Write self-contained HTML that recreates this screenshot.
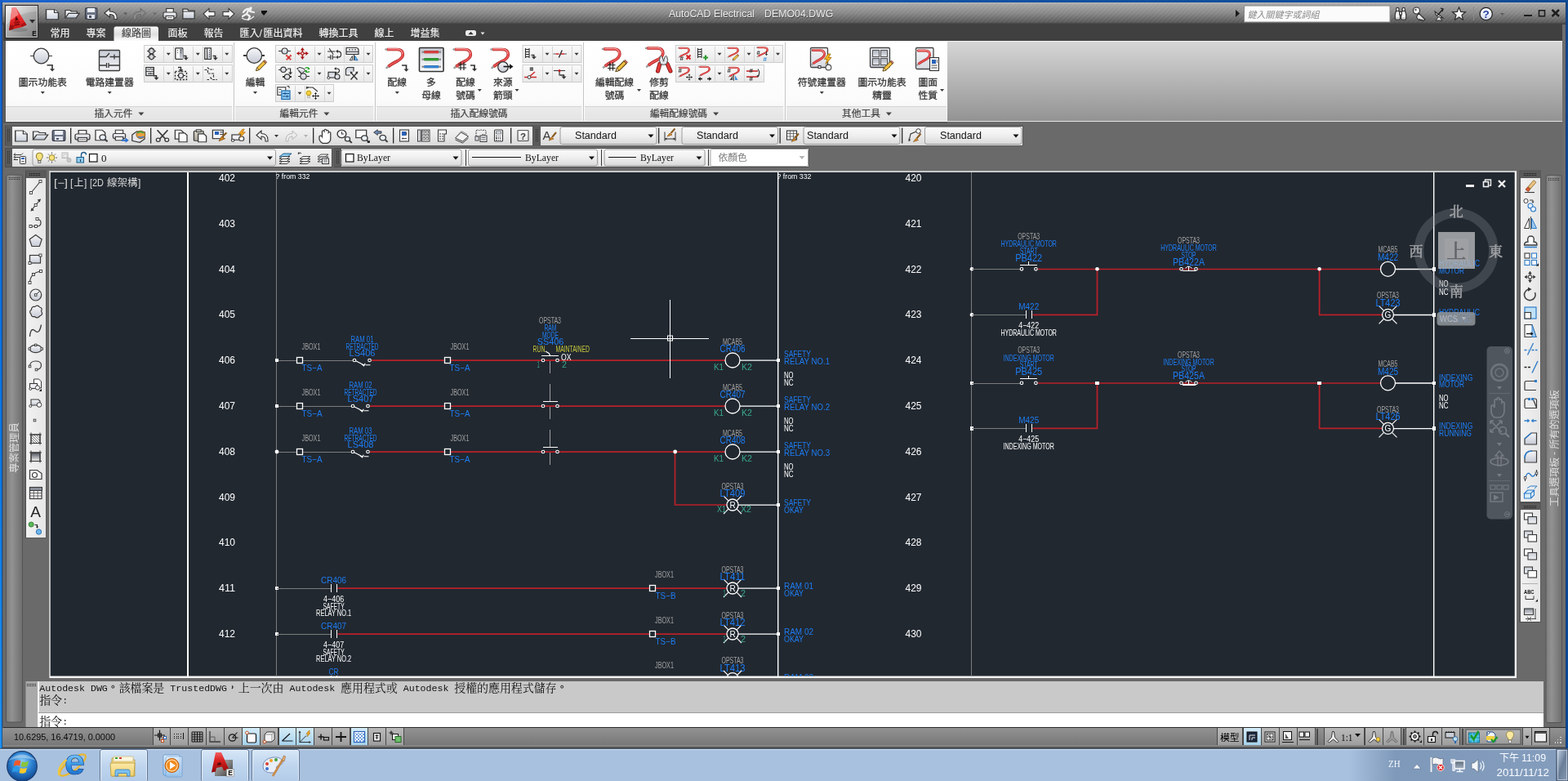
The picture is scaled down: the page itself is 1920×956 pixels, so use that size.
<!DOCTYPE html><html><head><meta charset="utf-8"><title>AutoCAD Electrical DEMO04.DWG</title>
<style>html,body{margin:0;padding:0;background:#6a6a6a;overflow:hidden}svg{display:block}text{font-family:"Liberation Sans","Noto Sans CJK TC",sans-serif;white-space:pre}</style></head><body>
<svg width="1920" height="956" viewBox="0 0 1920 956" style="will-change:transform">
<defs><linearGradient id="g1" x1="0" y1="0" x2="1" y2="0"><stop offset="0" stop-color="#1a62cc"/><stop offset="0.25" stop-color="#1563c6"/><stop offset="0.6" stop-color="#1252a4"/><stop offset="1" stop-color="#0f4a93"/></linearGradient><linearGradient id="g2" x1="0" y1="0" x2="0" y2="1"><stop offset="0" stop-color="#1a5cc4"/><stop offset="0.2" stop-color="#0e6ad8"/><stop offset="0.6" stop-color="#0a78e6"/><stop offset="1" stop-color="#1c90f0"/></linearGradient><linearGradient id="g3" x1="0" y1="0" x2="0" y2="1"><stop offset="0" stop-color="#0f4a93"/><stop offset="1" stop-color="#0a4a9c"/></linearGradient><linearGradient id="g4" x1="0" y1="0" x2="0" y2="1"><stop offset="0" stop-color="#b8b8b8"/><stop offset="0.1" stop-color="#a4a4a4"/><stop offset="0.5" stop-color="#868686"/><stop offset="0.88" stop-color="#5c5c5c"/><stop offset="0.95" stop-color="#4a4a4a"/><stop offset="1" stop-color="#3a3a3a"/></linearGradient><pattern id="hatch" width="4" height="4" patternUnits="userSpaceOnUse" patternTransform="rotate(-45)"><rect width="4" height="1.2" fill="#fff" opacity="0.075"/></pattern><linearGradient id="g5" x1="0" y1="0" x2="0.9" y2="1"><stop offset="0" stop-color="#fafafa"/><stop offset="0.4" stop-color="#c8c8c8"/><stop offset="1" stop-color="#858585"/></linearGradient><linearGradient id="g6" x1="0" y1="0" x2="0" y2="1"><stop offset="0" stop-color="#f05858"/><stop offset="0.45" stop-color="#ea2a2a"/><stop offset="1" stop-color="#c41414"/></linearGradient><linearGradient id="g7" x1="0" y1="0" x2="0" y2="1"><stop offset="0" stop-color="#ffffff"/><stop offset="1" stop-color="#c9cfdb"/></linearGradient><linearGradient id="g8" x1="0" y1="0" x2="0" y2="1"><stop offset="0" stop-color="#f4f6fa"/><stop offset="1" stop-color="#b7bfce"/></linearGradient><linearGradient id="g9" x1="0" y1="0" x2="0" y2="1"><stop offset="0" stop-color="#7d8596"/><stop offset="1" stop-color="#5a6172"/></linearGradient><linearGradient id="g10" x1="0" y1="0" x2="0" y2="1"><stop offset="0" stop-color="#fafafa"/><stop offset="1" stop-color="#b8bcc6"/></linearGradient><linearGradient id="g11" x1="0" y1="0" x2="0" y2="1"><stop offset="0" stop-color="#ffffff"/><stop offset="1" stop-color="#c3c9d6"/></linearGradient><linearGradient id="g12" x1="0" y1="0" x2="0" y2="1"><stop offset="0" stop-color="#ffffff"/><stop offset="1" stop-color="#d6ddf0"/></linearGradient><linearGradient id="g13" x1="0" y1="0" x2="0" y2="1"><stop offset="0" stop-color="#ffffff"/><stop offset="0.15" stop-color="#f0f0f0"/><stop offset="0.55" stop-color="#dedede"/><stop offset="1" stop-color="#fcfcfc"/></linearGradient><linearGradient id="g14" x1="0" y1="0" x2="0" y2="1"><stop offset="0" stop-color="#ffffff"/><stop offset="0.75" stop-color="#fbfbfb"/><stop offset="1" stop-color="#f0f0f0"/></linearGradient><linearGradient id="g15" x1="0" y1="0" x2="0" y2="1"><stop offset="0" stop-color="#d7d7d7"/><stop offset="0.5" stop-color="#b5b5b5"/><stop offset="1" stop-color="#939393"/></linearGradient><linearGradient id="g16" x1="0" y1="0" x2="0" y2="1"><stop offset="0" stop-color="#ebebeb"/><stop offset="1" stop-color="#e4e4e4"/></linearGradient><linearGradient id="g17" x1="0" y1="0" x2="0" y2="1"><stop offset="0" stop-color="#ebebeb"/><stop offset="1" stop-color="#e4e4e4"/></linearGradient><linearGradient id="g18" x1="0" y1="0" x2="0" y2="1"><stop offset="0" stop-color="#ebebeb"/><stop offset="1" stop-color="#e4e4e4"/></linearGradient><linearGradient id="g19" x1="0" y1="0" x2="0" y2="1"><stop offset="0" stop-color="#ebebeb"/><stop offset="1" stop-color="#e4e4e4"/></linearGradient><linearGradient id="g20" x1="0" y1="0" x2="0" y2="1"><stop offset="0" stop-color="#ebebeb"/><stop offset="1" stop-color="#e4e4e4"/></linearGradient><linearGradient id="g21" x1="0" y1="0" x2="0" y2="1"><stop offset="0" stop-color="#f6f7fa"/><stop offset="1" stop-color="#c6cad4"/></linearGradient><linearGradient id="g22" x1="0" y1="0" x2="0" y2="1"><stop offset="0" stop-color="#c9cdd6"/><stop offset="1" stop-color="#f2f3f6"/></linearGradient><linearGradient id="g23" x1="0" y1="0" x2="0" y2="1"><stop offset="0" stop-color="#fafafa"/><stop offset="0.5" stop-color="#f2f2f2"/><stop offset="1" stop-color="#e7e7e7"/></linearGradient><linearGradient id="g24" x1="0" y1="0" x2="0" y2="1"><stop offset="0" stop-color="#fafafa"/><stop offset="0.5" stop-color="#f2f2f2"/><stop offset="1" stop-color="#e7e7e7"/></linearGradient><linearGradient id="g25" x1="0" y1="0" x2="0" y2="1"><stop offset="0" stop-color="#8a8f99"/><stop offset="1" stop-color="#c9ccd3"/></linearGradient><linearGradient id="g26" x1="0" y1="0" x2="0" y2="1"><stop offset="0" stop-color="#eef0f4"/><stop offset="1" stop-color="#b8bcc6"/></linearGradient><linearGradient id="g27" x1="0" y1="0" x2="0" y2="1"><stop offset="0" stop-color="#fafafa"/><stop offset="0.5" stop-color="#f2f2f2"/><stop offset="1" stop-color="#e7e7e7"/></linearGradient><linearGradient id="g28" x1="0" y1="0" x2="0" y2="1"><stop offset="0" stop-color="#fafafa"/><stop offset="0.5" stop-color="#f2f2f2"/><stop offset="1" stop-color="#e7e7e7"/></linearGradient><linearGradient id="g29" x1="0" y1="0" x2="0" y2="1"><stop offset="0" stop-color="#fafafa"/><stop offset="0.5" stop-color="#f2f2f2"/><stop offset="1" stop-color="#e7e7e7"/></linearGradient><linearGradient id="g30" x1="0" y1="0" x2="0" y2="1"><stop offset="0" stop-color="#fdfdfd"/><stop offset="1" stop-color="#d4d7de"/></linearGradient><linearGradient id="g31" x1="0" y1="0" x2="0" y2="1"><stop offset="0" stop-color="#c4c8d0"/><stop offset="0.5" stop-color="#e6e8ec"/><stop offset="1" stop-color="#fafafa"/></linearGradient><linearGradient id="g32" x1="0" y1="0" x2="0" y2="1"><stop offset="0" stop-color="#fafafa"/><stop offset="0.5" stop-color="#f2f2f2"/><stop offset="1" stop-color="#e7e7e7"/></linearGradient><linearGradient id="g33" x1="0" y1="0" x2="0" y2="1"><stop offset="0" stop-color="#fafafa"/><stop offset="0.5" stop-color="#f2f2f2"/><stop offset="1" stop-color="#e7e7e7"/></linearGradient><linearGradient id="g34" x1="0" y1="0" x2="0" y2="1"><stop offset="0" stop-color="#fafafa"/><stop offset="0.5" stop-color="#f2f2f2"/><stop offset="1" stop-color="#e7e7e7"/></linearGradient><linearGradient id="g35" x1="0" y1="0" x2="0" y2="1"><stop offset="0" stop-color="#fafafa"/><stop offset="0.5" stop-color="#f2f2f2"/><stop offset="1" stop-color="#e7e7e7"/></linearGradient><linearGradient id="g36" x1="0" y1="0" x2="0" y2="1"><stop offset="0" stop-color="#f4f5f8"/><stop offset="1" stop-color="#d7dae1"/></linearGradient><linearGradient id="g37" x1="0" y1="0" x2="0" y2="1"><stop offset="0" stop-color="#eceef2"/><stop offset="1" stop-color="#c6cad3"/></linearGradient><linearGradient id="g38" x1="0" y1="0" x2="0" y2="1"><stop offset="0" stop-color="#aeb3be"/><stop offset="1" stop-color="#e3e5ea"/></linearGradient><linearGradient id="g39" x1="0" y1="0" x2="0" y2="1"><stop offset="0" stop-color="#aeb3be"/><stop offset="1" stop-color="#e3e5ea"/></linearGradient><linearGradient id="g40" x1="0" y1="0" x2="0" y2="1"><stop offset="0" stop-color="#aeb3be"/><stop offset="1" stop-color="#e3e5ea"/></linearGradient><linearGradient id="g41" x1="0" y1="0" x2="0" y2="1"><stop offset="0" stop-color="#aeb3be"/><stop offset="1" stop-color="#e3e5ea"/></linearGradient><linearGradient id="g42" x1="0" y1="0" x2="0" y2="1"><stop offset="0" stop-color="#f4f5f8"/><stop offset="1" stop-color="#d7dae1"/></linearGradient><linearGradient id="g43" x1="0" y1="0" x2="0" y2="1"><stop offset="0" stop-color="#f4f4f4"/><stop offset="0.5" stop-color="#eaeaea"/><stop offset="1" stop-color="#dadada"/></linearGradient><linearGradient id="g44" x1="0" y1="0" x2="0" y2="1"><stop offset="0" stop-color="#ffffff"/><stop offset="1" stop-color="#c9cfdb"/></linearGradient><linearGradient id="g45" x1="0" y1="0" x2="0" y2="1"><stop offset="0" stop-color="#f4f6fa"/><stop offset="1" stop-color="#b7bfce"/></linearGradient><linearGradient id="g46" x1="0" y1="0" x2="0" y2="1"><stop offset="0" stop-color="#7d8596"/><stop offset="1" stop-color="#5a6172"/></linearGradient><linearGradient id="g47" x1="0" y1="0" x2="0" y2="1"><stop offset="0" stop-color="#fafafa"/><stop offset="1" stop-color="#b8bcc6"/></linearGradient><linearGradient id="g48" x1="0" y1="0" x2="0" y2="1"><stop offset="0" stop-color="#fafafa"/><stop offset="1" stop-color="#b8bcc6"/></linearGradient><linearGradient id="g49" x1="0" y1="0" x2="0" y2="1"><stop offset="0" stop-color="#d8d4c8"/><stop offset="1" stop-color="#a8a498"/></linearGradient><linearGradient id="g50" x1="0" y1="0" x2="0" y2="1"><stop offset="0" stop-color="#ffffff"/><stop offset="1" stop-color="#e4e4e4"/></linearGradient><linearGradient id="g51" x1="0" y1="0" x2="0" y2="1"><stop offset="0" stop-color="#fbfbfb"/><stop offset="0.5" stop-color="#efefef"/><stop offset="1" stop-color="#d9d9d9"/></linearGradient><linearGradient id="g52" x1="0" y1="0" x2="0" y2="1"><stop offset="0" stop-color="#fbfbfb"/><stop offset="0.5" stop-color="#efefef"/><stop offset="1" stop-color="#d9d9d9"/></linearGradient><linearGradient id="g53" x1="0" y1="0" x2="0" y2="1"><stop offset="0" stop-color="#fbfbfb"/><stop offset="0.5" stop-color="#efefef"/><stop offset="1" stop-color="#d9d9d9"/></linearGradient><linearGradient id="g54" x1="0" y1="0" x2="0" y2="1"><stop offset="0" stop-color="#fbfbfb"/><stop offset="0.5" stop-color="#efefef"/><stop offset="1" stop-color="#d9d9d9"/></linearGradient><linearGradient id="g55" x1="0" y1="0" x2="0" y2="1"><stop offset="0" stop-color="#fbfbfb"/><stop offset="0.5" stop-color="#efefef"/><stop offset="1" stop-color="#d9d9d9"/></linearGradient><linearGradient id="g56" x1="0" y1="0" x2="0" y2="1"><stop offset="0" stop-color="#fbfbfb"/><stop offset="0.5" stop-color="#efefef"/><stop offset="1" stop-color="#d9d9d9"/></linearGradient><linearGradient id="g57" x1="0" y1="0" x2="0" y2="1"><stop offset="0" stop-color="#fbfbfb"/><stop offset="0.5" stop-color="#efefef"/><stop offset="1" stop-color="#d9d9d9"/></linearGradient><linearGradient id="g58" x1="0" y1="0" x2="0" y2="1"><stop offset="0" stop-color="#fbfbfb"/><stop offset="0.5" stop-color="#efefef"/><stop offset="1" stop-color="#d9d9d9"/></linearGradient><linearGradient id="g59" x1="0" y1="0" x2="1" y2="0"><stop offset="0" stop-color="#7c7c7c"/><stop offset="0.35" stop-color="#929292"/><stop offset="1" stop-color="#6e6e6e"/></linearGradient><linearGradient id="g60" x1="0" y1="0" x2="1" y2="0"><stop offset="0" stop-color="#7c7c7c"/><stop offset="0.35" stop-color="#929292"/><stop offset="1" stop-color="#6e6e6e"/></linearGradient><linearGradient id="g61" x1="0" y1="0" x2="1" y2="0"><stop offset="0" stop-color="#f2f2f2"/><stop offset="1" stop-color="#e6e6e6"/></linearGradient><linearGradient id="g62" x1="0" y1="0" x2="0" y2="1"><stop offset="0" stop-color="#4a4e58"/><stop offset="1" stop-color="#f4f4f4"/></linearGradient><linearGradient id="g63" x1="0" y1="0" x2="1" y2="0"><stop offset="0" stop-color="#f2f2f2"/><stop offset="1" stop-color="#e6e6e6"/></linearGradient><linearGradient id="g64" x1="0" y1="0" x2="1" y2="0"><stop offset="0" stop-color="#f2f2f2"/><stop offset="1" stop-color="#e6e6e6"/></linearGradient><linearGradient id="g65" x1="0" y1="0" x2="0" y2="1"><stop offset="0" stop-color="#8a8f99"/><stop offset="1" stop-color="#e8e8ec"/></linearGradient><linearGradient id="g66" x1="0" y1="0" x2="0" y2="1"><stop offset="0" stop-color="#929292"/><stop offset="1" stop-color="#787878"/></linearGradient><linearGradient id="g67" x1="0" y1="0" x2="0" y2="1"><stop offset="0" stop-color="#6a6a6a"/><stop offset="1" stop-color="#3c3c3c"/></linearGradient><linearGradient id="g68" x1="0" y1="0" x2="0" y2="1"><stop offset="0" stop-color="#bababa"/><stop offset="1" stop-color="#9e9e9e"/></linearGradient><linearGradient id="g69" x1="0" y1="0" x2="0" y2="1"><stop offset="0" stop-color="#d6ecf8"/><stop offset="1" stop-color="#a6d2ec"/></linearGradient><linearGradient id="g70" x1="0" y1="0" x2="0" y2="1"><stop offset="0" stop-color="#b4b4b4"/><stop offset="1" stop-color="#9a9a9a"/></linearGradient><linearGradient id="g71" x1="0" y1="0" x2="1" y2="0"><stop offset="0" stop-color="#a8c1df"/><stop offset="0.86" stop-color="#a8c1df"/><stop offset="0.89" stop-color="#7f99ba"/><stop offset="1" stop-color="#849dbd"/></linearGradient><linearGradient id="g72" x1="0" y1="0" x2="0" y2="1"><stop offset="0" stop-color="#dcebfa"/><stop offset="0.5" stop-color="#c2d8f0"/><stop offset="1" stop-color="#b4cdea"/></linearGradient><linearGradient id="g73" x1="0" y1="0" x2="0" y2="1"><stop offset="0" stop-color="#dcebfa"/><stop offset="0.5" stop-color="#c2d8f0"/><stop offset="1" stop-color="#b4cdea"/></linearGradient><linearGradient id="g74" x1="0" y1="0" x2="0" y2="1"><stop offset="0" stop-color="#dcebfa"/><stop offset="0.5" stop-color="#c2d8f0"/><stop offset="1" stop-color="#b4cdea"/></linearGradient><radialGradient id="orb" cx="0.5" cy="0.35" r="0.7"><stop offset="0" stop-color="#8fd0f8"/><stop offset="0.5" stop-color="#2a7fd0"/><stop offset="1" stop-color="#0c3a80"/></radialGradient><linearGradient id="g75" x1="0" y1="0.3" x2="0" y2="1"><stop offset="0" stop-color="#7cc8f8"/><stop offset="0.5" stop-color="#2a8ae0"/><stop offset="1" stop-color="#1a58b8"/></linearGradient><linearGradient id="g76" x1="0" y1="0" x2="0" y2="1"><stop offset="0" stop-color="#fbe9a8"/><stop offset="1" stop-color="#f0cf6a"/></linearGradient><linearGradient id="g77" x1="0" y1="0" x2="0" y2="1"><stop offset="0" stop-color="#dfefff"/><stop offset="1" stop-color="#9cc8f0"/></linearGradient><linearGradient id="g78" x1="0" y1="0" x2="0" y2="1"><stop offset="0" stop-color="#dfefff"/><stop offset="1" stop-color="#9cc8f0"/></linearGradient><linearGradient id="g79" x1="0" y1="0" x2="1" y2="1"><stop offset="0" stop-color="#c8c8c8"/><stop offset="1" stop-color="#3a3a3a"/></linearGradient><linearGradient id="g80" x1="0" y1="0" x2="0" y2="1"><stop offset="0" stop-color="#f06060"/><stop offset="0.4" stop-color="#d82020"/><stop offset="1" stop-color="#900808"/></linearGradient><linearGradient id="g81" x1="0" y1="0" x2="0" y2="1"><stop offset="0" stop-color="#5a6878"/><stop offset="1" stop-color="#a8b4c4"/></linearGradient><linearGradient id="g82" x1="0" y1="0" x2="1" y2="1"><stop offset="0" stop-color="#c8d8ea"/><stop offset="0.5" stop-color="#6a7e98"/><stop offset="1" stop-color="#8a9cb4"/></linearGradient></defs>
<rect x="0" y="0" width="1920" height="956" fill="#6a6a6a" shape-rendering="crispEdges" />
<rect x="0" y="0" width="1920" height="3" fill="url(#g1)" shape-rendering="crispEdges" />
<rect x="0" y="0" width="3" height="917" fill="url(#g2)" shape-rendering="crispEdges" />
<rect x="1917" y="0" width="3" height="917" fill="url(#g3)" shape-rendering="crispEdges" />
<rect x="2.3" y="3" width="0.9" height="913" fill="#1a3a6a"/>
<rect x="1916.8" y="3" width="0.9" height="913" fill="#1a3a6a"/>
<rect x="3" y="3" width="1914" height="27" fill="url(#g4)" shape-rendering="crispEdges" />
<rect x="3" y="4" width="1914" height="24" fill="url(#hatch)" shape-rendering="crispEdges" />
<rect x="4" y="30" width="1913" height="20" fill="#404040" shape-rendering="crispEdges" />
<rect x="1913" y="30" width="4" height="886" fill="#6e6e6e" shape-rendering="crispEdges" />
<rect x="60" y="209" width="1797" height="621" fill="#f4f4f4" shape-rendering="crispEdges" />
<rect x="60" y="209" width="1797" height="1" fill="#c8c8c8" shape-rendering="crispEdges" />
<rect x="60" y="209" width="1" height="621" fill="#c0c0c0" shape-rendering="crispEdges" />
<rect x="61.7" y="210.8" width="1793" height="616.7" fill="#212830"/>
<g font-family="Liberation Sans">
<line x1="229.5" y1="211" x2="229.5" y2="828" stroke="#ffffff" stroke-width="2" shape-rendering="crispEdges" />
<line x1="338.5" y1="211" x2="338.5" y2="828" stroke="#7c7c7c" stroke-width="1" shape-rendering="crispEdges" />
<rect x="952" y="211" width="1" height="617" fill="#ffffff" shape-rendering="crispEdges" />
<rect x="953" y="211" width="1" height="617" fill="#ffffff" shape-rendering="crispEdges" opacity="0.4"/>
<line x1="1189.5" y1="211" x2="1189.5" y2="828" stroke="#7c7c7c" stroke-width="1" shape-rendering="crispEdges" />
<rect x="1755" y="211" width="1" height="617" fill="#ffffff" shape-rendering="crispEdges" />
<rect x="1756" y="211" width="1" height="617" fill="#ffffff" shape-rendering="crispEdges" opacity="0.4"/>
<text x="66" y="228" font-size="12" fill="#d8d8d8" textLength="17" lengthAdjust="spacingAndGlyphs" >[−]</text>
<text x="86" y="228" font-size="12" fill="#d8d8d8" >[</text>
<text x="90.5" y="228" font-size="12" fill="#d8d8d8" >上</text>
<text x="103" y="228" font-size="12" fill="#d8d8d8" >]</text>
<text x="110" y="228" font-size="12" fill="#d8d8d8" textLength="17" lengthAdjust="spacingAndGlyphs" >[2D</text>
<text x="131" y="228" font-size="12.5" fill="#d8d8d8" >線架構</text>
<text x="169" y="228" font-size="12" fill="#d8d8d8" >]</text>
<text x="278" y="222.0" font-size="12.86" fill="#ffffff" text-anchor="middle" textLength="20" lengthAdjust="spacingAndGlyphs" >402</text>
<text x="278" y="277.8" font-size="12.86" fill="#ffffff" text-anchor="middle" textLength="20" lengthAdjust="spacingAndGlyphs" >403</text>
<text x="278" y="333.6" font-size="12.86" fill="#ffffff" text-anchor="middle" textLength="20" lengthAdjust="spacingAndGlyphs" >404</text>
<text x="278" y="389.4" font-size="12.86" fill="#ffffff" text-anchor="middle" textLength="20" lengthAdjust="spacingAndGlyphs" >405</text>
<text x="278" y="445.2" font-size="12.86" fill="#ffffff" text-anchor="middle" textLength="20" lengthAdjust="spacingAndGlyphs" >406</text>
<text x="278" y="501.0" font-size="12.86" fill="#ffffff" text-anchor="middle" textLength="20" lengthAdjust="spacingAndGlyphs" >407</text>
<text x="278" y="556.8" font-size="12.86" fill="#ffffff" text-anchor="middle" textLength="20" lengthAdjust="spacingAndGlyphs" >408</text>
<text x="278" y="612.6" font-size="12.86" fill="#ffffff" text-anchor="middle" textLength="20" lengthAdjust="spacingAndGlyphs" >409</text>
<text x="278" y="668.4" font-size="12.86" fill="#ffffff" text-anchor="middle" textLength="20" lengthAdjust="spacingAndGlyphs" >410</text>
<text x="278" y="724.2" font-size="12.86" fill="#ffffff" text-anchor="middle" textLength="20" lengthAdjust="spacingAndGlyphs" >411</text>
<text x="278" y="780.0" font-size="12.86" fill="#ffffff" text-anchor="middle" textLength="20" lengthAdjust="spacingAndGlyphs" >412</text>
<text x="1118.5" y="222.0" font-size="12.86" fill="#ffffff" text-anchor="middle" textLength="20" lengthAdjust="spacingAndGlyphs" >420</text>
<text x="1118.5" y="277.8" font-size="12.86" fill="#ffffff" text-anchor="middle" textLength="20" lengthAdjust="spacingAndGlyphs" >421</text>
<text x="1118.5" y="333.6" font-size="12.86" fill="#ffffff" text-anchor="middle" textLength="20" lengthAdjust="spacingAndGlyphs" >422</text>
<text x="1118.5" y="389.4" font-size="12.86" fill="#ffffff" text-anchor="middle" textLength="20" lengthAdjust="spacingAndGlyphs" >423</text>
<text x="1118.5" y="445.2" font-size="12.86" fill="#ffffff" text-anchor="middle" textLength="20" lengthAdjust="spacingAndGlyphs" >424</text>
<text x="1118.5" y="501.0" font-size="12.86" fill="#ffffff" text-anchor="middle" textLength="20" lengthAdjust="spacingAndGlyphs" >425</text>
<text x="1118.5" y="556.8" font-size="12.86" fill="#ffffff" text-anchor="middle" textLength="20" lengthAdjust="spacingAndGlyphs" >426</text>
<text x="1118.5" y="612.6" font-size="12.86" fill="#ffffff" text-anchor="middle" textLength="20" lengthAdjust="spacingAndGlyphs" >427</text>
<text x="1118.5" y="668.4" font-size="12.86" fill="#ffffff" text-anchor="middle" textLength="20" lengthAdjust="spacingAndGlyphs" >428</text>
<text x="1118.5" y="724.2" font-size="12.86" fill="#ffffff" text-anchor="middle" textLength="20" lengthAdjust="spacingAndGlyphs" >429</text>
<text x="1118.5" y="780.0" font-size="12.86" fill="#ffffff" text-anchor="middle" textLength="20" lengthAdjust="spacingAndGlyphs" >430</text>
<text x="337.5" y="219.25" font-size="9.29" fill="#ffffff" textLength="42" lengthAdjust="spacingAndGlyphs" >? from 332</text>
<text x="951.5" y="219.25" font-size="9.29" fill="#ffffff" textLength="42" lengthAdjust="spacingAndGlyphs" >? from 332</text>
<line x1="339" y1="441.5" x2="433" y2="441.5" stroke="#7c7c7c" stroke-width="1" shape-rendering="crispEdges" />
<line x1="455" y1="441.2" x2="888" y2="441.2" stroke="#ba2029" stroke-width="1.7" />
<circle cx="434" cy="441" r="1.8" fill="#212830" stroke="#ffffff" stroke-width="1.1" />
<circle cx="452.5" cy="441" r="1.8" fill="#212830" stroke="#ffffff" stroke-width="1.1" />
<path d="M435.6,441.8 L446,447 M441,444.2 l4.6,3.6 l1.6,-3 M447.5,446.7 h6" fill="none" stroke="#ffffff" stroke-width="1.1" />
<rect x="337.0" y="439.0" width="4" height="4" fill="#ffffff" shape-rendering="crispEdges" />
<rect x="363.5" y="437.5" width="7" height="7" fill="#212830" stroke="#ffffff" stroke-width="1.3" />
<rect x="544.5" y="437.5" width="7" height="7" fill="#212830" stroke="#ffffff" stroke-width="1.3" />
<text x="381" y="428.25" font-size="10.71" fill="#a0a0a0" text-anchor="middle" textLength="23" lengthAdjust="spacingAndGlyphs" >JBOX1</text>
<text x="563" y="428.25" font-size="10.71" fill="#a0a0a0" text-anchor="middle" textLength="23" lengthAdjust="spacingAndGlyphs" >JBOX1</text>
<text x="382" y="454.0" font-size="11.43" fill="#1e7cf2" text-anchor="middle" textLength="25" lengthAdjust="spacingAndGlyphs" >TS−A</text>
<text x="563" y="454.0" font-size="11.43" fill="#1e7cf2" text-anchor="middle" textLength="25" lengthAdjust="spacingAndGlyphs" >TS−A</text>
<text x="443.5" y="418.95" font-size="10.71" fill="#1e7cf2" text-anchor="middle" textLength="28" lengthAdjust="spacingAndGlyphs" >RAM 01</text>
<text x="443.5" y="427.85" font-size="10.71" fill="#1e7cf2" text-anchor="middle" textLength="40" lengthAdjust="spacingAndGlyphs" >RETRACTED</text>
<text x="443.5" y="436.4" font-size="10.57" fill="#1e7cf2" text-anchor="middle" textLength="32" lengthAdjust="spacingAndGlyphs" >LS406</text>
<circle cx="665" cy="441" r="1.8" fill="#212830" stroke="#ffffff" stroke-width="1.1" />
<circle cx="682.5" cy="441" r="1.8" fill="#212830" stroke="#ffffff" stroke-width="1.1" />
<circle cx="897" cy="441" r="9" fill="#212830" stroke="#ffffff" stroke-width="1.3" />
<line x1="906" y1="441.2" x2="953" y2="441.2" stroke="#ffffff" stroke-width="1.3" />
<rect x="950.8" y="438.8" width="4.4" height="4.4" fill="#ffffff" shape-rendering="crispEdges" />
<text x="897" y="421.55" font-size="10.71" fill="#a0a0a0" text-anchor="middle" textLength="24" lengthAdjust="spacingAndGlyphs" >MCAB5</text>
<text x="897" y="430.75" font-size="12.14" fill="#1e7cf2" text-anchor="middle" textLength="31" lengthAdjust="spacingAndGlyphs" >CR406</text>
<text x="880" y="452.5" font-size="11.43" fill="#3aa88c" text-anchor="middle" textLength="12" lengthAdjust="spacingAndGlyphs" >K1</text>
<text x="914.5" y="452.5" font-size="11.43" fill="#3aa88c" text-anchor="middle" textLength="13" lengthAdjust="spacingAndGlyphs" >K2</text>
<text x="960" y="437.4" font-size="11.43" fill="#1e7cf2" textLength="33" lengthAdjust="spacingAndGlyphs" >SAFETY</text>
<text x="960" y="446.4" font-size="11.43" fill="#1e7cf2" textLength="56" lengthAdjust="spacingAndGlyphs" >RELAY NO.1</text>
<text x="960" y="462.75" font-size="10.71" fill="#ffffff" textLength="11.5" lengthAdjust="spacingAndGlyphs" >NO</text>
<text x="960" y="472.05" font-size="10.71" fill="#ffffff" textLength="11.5" lengthAdjust="spacingAndGlyphs" >NC</text>
<line x1="339" y1="497.5" x2="431" y2="497.5" stroke="#7c7c7c" stroke-width="1" shape-rendering="crispEdges" />
<line x1="453" y1="497.2" x2="888" y2="497.2" stroke="#ba2029" stroke-width="1.7" />
<circle cx="432" cy="497" r="1.8" fill="#212830" stroke="#ffffff" stroke-width="1.1" />
<circle cx="450.5" cy="497" r="1.8" fill="#212830" stroke="#ffffff" stroke-width="1.1" />
<path d="M433.6,497.8 L444,503 M439,500.2 l4.6,3.6 l1.6,-3 M445.5,502.7 h6" fill="none" stroke="#ffffff" stroke-width="1.1" />
<rect x="337.0" y="495.0" width="4" height="4" fill="#ffffff" shape-rendering="crispEdges" />
<rect x="363.5" y="493.5" width="7" height="7" fill="#212830" stroke="#ffffff" stroke-width="1.3" />
<rect x="544.5" y="493.5" width="7" height="7" fill="#212830" stroke="#ffffff" stroke-width="1.3" />
<text x="381" y="484.25" font-size="10.71" fill="#a0a0a0" text-anchor="middle" textLength="23" lengthAdjust="spacingAndGlyphs" >JBOX1</text>
<text x="563" y="484.25" font-size="10.71" fill="#a0a0a0" text-anchor="middle" textLength="23" lengthAdjust="spacingAndGlyphs" >JBOX1</text>
<text x="382" y="510.0" font-size="11.43" fill="#1e7cf2" text-anchor="middle" textLength="25" lengthAdjust="spacingAndGlyphs" >TS−A</text>
<text x="563" y="510.0" font-size="11.43" fill="#1e7cf2" text-anchor="middle" textLength="25" lengthAdjust="spacingAndGlyphs" >TS−A</text>
<text x="441.5" y="474.95" font-size="10.71" fill="#1e7cf2" text-anchor="middle" textLength="28" lengthAdjust="spacingAndGlyphs" >RAM 02</text>
<text x="441.5" y="483.85" font-size="10.71" fill="#1e7cf2" text-anchor="middle" textLength="40" lengthAdjust="spacingAndGlyphs" >RETRACTED</text>
<text x="441.5" y="492.4" font-size="10.57" fill="#1e7cf2" text-anchor="middle" textLength="32" lengthAdjust="spacingAndGlyphs" >LS407</text>
<circle cx="665" cy="497" r="1.8" fill="#212830" stroke="#ffffff" stroke-width="1.1" />
<circle cx="682.5" cy="497" r="1.8" fill="#212830" stroke="#ffffff" stroke-width="1.1" />
<circle cx="897" cy="497" r="9" fill="#212830" stroke="#ffffff" stroke-width="1.3" />
<line x1="906" y1="497.2" x2="953" y2="497.2" stroke="#ffffff" stroke-width="1.3" />
<rect x="950.8" y="494.8" width="4.4" height="4.4" fill="#ffffff" shape-rendering="crispEdges" />
<text x="897" y="477.55" font-size="10.71" fill="#a0a0a0" text-anchor="middle" textLength="24" lengthAdjust="spacingAndGlyphs" >MCAB5</text>
<text x="897" y="486.75" font-size="12.14" fill="#1e7cf2" text-anchor="middle" textLength="31" lengthAdjust="spacingAndGlyphs" >CR407</text>
<text x="880" y="508.5" font-size="11.43" fill="#3aa88c" text-anchor="middle" textLength="12" lengthAdjust="spacingAndGlyphs" >K1</text>
<text x="914.5" y="508.5" font-size="11.43" fill="#3aa88c" text-anchor="middle" textLength="13" lengthAdjust="spacingAndGlyphs" >K2</text>
<text x="960" y="493.4" font-size="11.43" fill="#1e7cf2" textLength="33" lengthAdjust="spacingAndGlyphs" >SAFETY</text>
<text x="960" y="502.4" font-size="11.43" fill="#1e7cf2" textLength="56" lengthAdjust="spacingAndGlyphs" >RELAY NO.2</text>
<text x="960" y="518.75" font-size="10.71" fill="#ffffff" textLength="11.5" lengthAdjust="spacingAndGlyphs" >NO</text>
<text x="960" y="528.05" font-size="10.71" fill="#ffffff" textLength="11.5" lengthAdjust="spacingAndGlyphs" >NC</text>
<line x1="339" y1="553.5" x2="431" y2="553.5" stroke="#7c7c7c" stroke-width="1" shape-rendering="crispEdges" />
<line x1="453" y1="553.2" x2="888" y2="553.2" stroke="#ba2029" stroke-width="1.7" />
<circle cx="432" cy="553" r="1.8" fill="#212830" stroke="#ffffff" stroke-width="1.1" />
<circle cx="450.5" cy="553" r="1.8" fill="#212830" stroke="#ffffff" stroke-width="1.1" />
<path d="M433.6,553.8 L444,559 M439,556.2 l4.6,3.6 l1.6,-3 M445.5,558.7 h6" fill="none" stroke="#ffffff" stroke-width="1.1" />
<circle cx="339" cy="553" r="2.4" fill="#ffffff" />
<rect x="363.5" y="549.5" width="7" height="7" fill="#212830" stroke="#ffffff" stroke-width="1.3" />
<rect x="544.5" y="549.5" width="7" height="7" fill="#212830" stroke="#ffffff" stroke-width="1.3" />
<text x="381" y="540.25" font-size="10.71" fill="#a0a0a0" text-anchor="middle" textLength="23" lengthAdjust="spacingAndGlyphs" >JBOX1</text>
<text x="563" y="540.25" font-size="10.71" fill="#a0a0a0" text-anchor="middle" textLength="23" lengthAdjust="spacingAndGlyphs" >JBOX1</text>
<text x="382" y="566.0" font-size="11.43" fill="#1e7cf2" text-anchor="middle" textLength="25" lengthAdjust="spacingAndGlyphs" >TS−A</text>
<text x="563" y="566.0" font-size="11.43" fill="#1e7cf2" text-anchor="middle" textLength="25" lengthAdjust="spacingAndGlyphs" >TS−A</text>
<text x="441.5" y="530.95" font-size="10.71" fill="#1e7cf2" text-anchor="middle" textLength="28" lengthAdjust="spacingAndGlyphs" >RAM 03</text>
<text x="441.5" y="539.85" font-size="10.71" fill="#1e7cf2" text-anchor="middle" textLength="40" lengthAdjust="spacingAndGlyphs" >RETRACTED</text>
<text x="441.5" y="548.4" font-size="10.57" fill="#1e7cf2" text-anchor="middle" textLength="32" lengthAdjust="spacingAndGlyphs" >LS408</text>
<circle cx="665" cy="553" r="1.8" fill="#212830" stroke="#ffffff" stroke-width="1.1" />
<circle cx="682.5" cy="553" r="1.8" fill="#212830" stroke="#ffffff" stroke-width="1.1" />
<circle cx="897" cy="553" r="9" fill="#212830" stroke="#ffffff" stroke-width="1.3" />
<line x1="906" y1="553.2" x2="953" y2="553.2" stroke="#ffffff" stroke-width="1.3" />
<rect x="950.8" y="550.8" width="4.4" height="4.4" fill="#ffffff" shape-rendering="crispEdges" />
<text x="897" y="533.55" font-size="10.71" fill="#a0a0a0" text-anchor="middle" textLength="24" lengthAdjust="spacingAndGlyphs" >MCAB5</text>
<text x="897" y="542.75" font-size="12.14" fill="#1e7cf2" text-anchor="middle" textLength="31" lengthAdjust="spacingAndGlyphs" >CR408</text>
<text x="880" y="564.5" font-size="11.43" fill="#3aa88c" text-anchor="middle" textLength="12" lengthAdjust="spacingAndGlyphs" >K1</text>
<text x="914.5" y="564.5" font-size="11.43" fill="#3aa88c" text-anchor="middle" textLength="13" lengthAdjust="spacingAndGlyphs" >K2</text>
<text x="960" y="549.4" font-size="11.43" fill="#1e7cf2" textLength="33" lengthAdjust="spacingAndGlyphs" >SAFETY</text>
<text x="960" y="558.4" font-size="11.43" fill="#1e7cf2" textLength="56" lengthAdjust="spacingAndGlyphs" >RELAY NO.3</text>
<text x="960" y="574.75" font-size="10.71" fill="#ffffff" textLength="11.5" lengthAdjust="spacingAndGlyphs" >NO</text>
<text x="960" y="584.05" font-size="10.71" fill="#ffffff" textLength="11.5" lengthAdjust="spacingAndGlyphs" >NC</text>
<line x1="663" y1="435.3" x2="683.7" y2="435.3" stroke="#ffffff" stroke-width="1.2" shape-rendering="crispEdges" />
<path d="M668,430 L672.2,432.4 L673.6,435.3" fill="none" stroke="#ffffff" stroke-width="1.2" />
<line x1="673.5" y1="442" x2="673.5" y2="457" stroke="#a0a0a0" stroke-width="1" shape-rendering="crispEdges" />
<text x="673.5" y="395.75" font-size="10.71" fill="#a0a0a0" text-anchor="middle" textLength="27" lengthAdjust="spacingAndGlyphs" >OPSTA3</text>
<text x="674" y="404.75" font-size="10.71" fill="#1e7cf2" text-anchor="middle" textLength="15" lengthAdjust="spacingAndGlyphs" >RAM</text>
<text x="674" y="413.75" font-size="10.71" fill="#1e7cf2" text-anchor="middle" textLength="20" lengthAdjust="spacingAndGlyphs" >MODE</text>
<text x="674" y="422.3" font-size="11.43" fill="#1e7cf2" text-anchor="middle" textLength="32.5" lengthAdjust="spacingAndGlyphs" >SS406</text>
<text x="652.5" y="430.9" font-size="11.14" fill="#c8c83c" textLength="15" lengthAdjust="spacingAndGlyphs" >RUN</text>
<text x="680.5" y="430.9" font-size="11.14" fill="#c8c83c" textLength="41.5" lengthAdjust="spacingAndGlyphs" >MAINTAINED</text>
<text x="687" y="440.75" font-size="10.71" fill="#ffffff" textLength="12.5" lengthAdjust="spacingAndGlyphs" >OX</text>
<text x="659.3" y="450.25" font-size="10.71" fill="#3aa88c" text-anchor="middle" textLength="3" lengthAdjust="spacingAndGlyphs" >1</text>
<text x="691" y="450.25" font-size="10.71" fill="#3aa88c" text-anchor="middle" textLength="6" lengthAdjust="spacingAndGlyphs" >2</text>
<line x1="673.5" y1="470" x2="673.5" y2="491" stroke="#a0a0a0" stroke-width="1" shape-rendering="crispEdges" />
<line x1="664.5" y1="491.2" x2="683" y2="491.2" stroke="#ffffff" stroke-width="1.2" shape-rendering="crispEdges" />
<line x1="673.5" y1="498" x2="673.5" y2="513" stroke="#a0a0a0" stroke-width="1" shape-rendering="crispEdges" />
<line x1="673.5" y1="526" x2="673.5" y2="547" stroke="#a0a0a0" stroke-width="1" shape-rendering="crispEdges" />
<line x1="664.5" y1="547.2" x2="683" y2="547.2" stroke="#ffffff" stroke-width="1.2" shape-rendering="crispEdges" />
<line x1="673.5" y1="554" x2="673.5" y2="569" stroke="#a0a0a0" stroke-width="1" shape-rendering="crispEdges" />
<path d="M826.5,553 V618 H890" fill="none" stroke="#ba2029" stroke-width="1.7" />
<circle cx="826.7" cy="553" r="2.4" fill="#ffffff" />
<line x1="902.2" y1="623.2" x2="908" y2="629" stroke="#ffffff" stroke-width="1.1" />
<line x1="902.2" y1="612.8" x2="908" y2="607" stroke="#ffffff" stroke-width="1.1" />
<line x1="891.8" y1="623.2" x2="886" y2="629" stroke="#ffffff" stroke-width="1.1" />
<line x1="891.8" y1="612.8" x2="886" y2="607" stroke="#ffffff" stroke-width="1.1" />
<circle cx="897" cy="618" r="7" fill="#212830" stroke="#ffffff" stroke-width="1.3" />
<text x="897" y="621.6" font-size="10" fill="#ffffff" text-anchor="middle" >R</text>
<line x1="904" y1="618.2" x2="953" y2="618.2" stroke="#ffffff" stroke-width="1.3" />
<rect x="950.8" y="615.8" width="4.4" height="4.4" fill="#ffffff" shape-rendering="crispEdges" />
<text x="897" y="598.75" font-size="10.71" fill="#a0a0a0" text-anchor="middle" textLength="27" lengthAdjust="spacingAndGlyphs" >OPSTA3</text>
<text x="897" y="607.55" font-size="12.14" fill="#1e7cf2" text-anchor="middle" textLength="31" lengthAdjust="spacingAndGlyphs" >LT409</text>
<text x="883.5" y="626.75" font-size="10.71" fill="#3aa88c" text-anchor="middle" textLength="11" lengthAdjust="spacingAndGlyphs" >X1</text>
<text x="913.5" y="626.75" font-size="10.71" fill="#3aa88c" text-anchor="middle" textLength="13" lengthAdjust="spacingAndGlyphs" >X2</text>
<text x="960" y="619.0" font-size="11.43" fill="#1e7cf2" textLength="33" lengthAdjust="spacingAndGlyphs" >SAFETY</text>
<text x="960" y="627.5" font-size="11.43" fill="#1e7cf2" textLength="24" lengthAdjust="spacingAndGlyphs" >OKAY</text>
<rect x="337.0" y="718.0" width="4" height="4" fill="#ffffff" shape-rendering="crispEdges" />
<line x1="339" y1="720.5" x2="405" y2="720.5" stroke="#7c7c7c" stroke-width="1" shape-rendering="crispEdges" />
<line x1="405.3" y1="715" x2="405.3" y2="725" stroke="#ffffff" stroke-width="1.3" shape-rendering="crispEdges" />
<line x1="412.4" y1="715" x2="412.4" y2="725" stroke="#ffffff" stroke-width="1.3" shape-rendering="crispEdges" />
<line x1="413.5" y1="720.2" x2="890" y2="720.2" stroke="#ba2029" stroke-width="1.7" />
<rect x="795.5" y="716.5" width="7" height="7" fill="#212830" stroke="#ffffff" stroke-width="1.3" />
<text x="408.6" y="713.7" font-size="11.43" fill="#1e7cf2" text-anchor="middle" textLength="31" lengthAdjust="spacingAndGlyphs" >CR406</text>
<text x="408.6" y="737.05" font-size="10.71" fill="#ffffff" text-anchor="middle" textLength="25" lengthAdjust="spacingAndGlyphs" >4−406</text>
<text x="408.6" y="745.75" font-size="10.71" fill="#ffffff" text-anchor="middle" textLength="26" lengthAdjust="spacingAndGlyphs" >SAFETY</text>
<text x="408.6" y="754.25" font-size="10.71" fill="#ffffff" text-anchor="middle" textLength="43" lengthAdjust="spacingAndGlyphs" >RELAY NO.1</text>
<text x="813.5" y="707.05" font-size="10.71" fill="#a0a0a0" text-anchor="middle" textLength="23" lengthAdjust="spacingAndGlyphs" >JBOX1</text>
<text x="815" y="733.4" font-size="11.43" fill="#1e7cf2" text-anchor="middle" textLength="25" lengthAdjust="spacingAndGlyphs" >TS−B</text>
<line x1="902.2" y1="725.2" x2="908" y2="731" stroke="#ffffff" stroke-width="1.1" />
<line x1="902.2" y1="714.8" x2="908" y2="709" stroke="#ffffff" stroke-width="1.1" />
<line x1="891.8" y1="725.2" x2="886" y2="731" stroke="#ffffff" stroke-width="1.1" />
<line x1="891.8" y1="714.8" x2="886" y2="709" stroke="#ffffff" stroke-width="1.1" />
<circle cx="897" cy="720" r="7" fill="#212830" stroke="#ffffff" stroke-width="1.3" />
<text x="897" y="723.6" font-size="10" fill="#ffffff" text-anchor="middle" >R</text>
<line x1="904" y1="720.2" x2="953" y2="720.2" stroke="#ffffff" stroke-width="1.3" />
<rect x="950.8" y="717.8" width="4.4" height="4.4" fill="#ffffff" shape-rendering="crispEdges" />
<text x="897" y="700.95" font-size="10.71" fill="#a0a0a0" text-anchor="middle" textLength="27" lengthAdjust="spacingAndGlyphs" >OPSTA3</text>
<text x="897" y="709.85" font-size="12.14" fill="#1e7cf2" text-anchor="middle" textLength="31" lengthAdjust="spacingAndGlyphs" >LT411</text>
<text x="887" y="730.05" font-size="10.71" fill="#3aa88c" text-anchor="middle" textLength="3" lengthAdjust="spacingAndGlyphs" >1</text>
<text x="910" y="730.05" font-size="10.71" fill="#3aa88c" text-anchor="middle" textLength="6" lengthAdjust="spacingAndGlyphs" >2</text>
<text x="960" y="721.2" font-size="11.43" fill="#1e7cf2" textLength="36" lengthAdjust="spacingAndGlyphs" >RAM 01</text>
<text x="960" y="729.6" font-size="11.43" fill="#1e7cf2" textLength="24" lengthAdjust="spacingAndGlyphs" >OKAY</text>
<rect x="337.0" y="774.0" width="4" height="4" fill="#ffffff" shape-rendering="crispEdges" />
<line x1="339" y1="776.5" x2="405" y2="776.5" stroke="#7c7c7c" stroke-width="1" shape-rendering="crispEdges" />
<line x1="405.3" y1="771" x2="405.3" y2="781" stroke="#ffffff" stroke-width="1.3" shape-rendering="crispEdges" />
<line x1="412.4" y1="771" x2="412.4" y2="781" stroke="#ffffff" stroke-width="1.3" shape-rendering="crispEdges" />
<line x1="413.5" y1="776.2" x2="890" y2="776.2" stroke="#ba2029" stroke-width="1.7" />
<rect x="795.5" y="772.5" width="7" height="7" fill="#212830" stroke="#ffffff" stroke-width="1.3" />
<text x="408.6" y="769.7" font-size="11.43" fill="#1e7cf2" text-anchor="middle" textLength="31" lengthAdjust="spacingAndGlyphs" >CR407</text>
<text x="408.6" y="793.05" font-size="10.71" fill="#ffffff" text-anchor="middle" textLength="25" lengthAdjust="spacingAndGlyphs" >4−407</text>
<text x="408.6" y="801.75" font-size="10.71" fill="#ffffff" text-anchor="middle" textLength="26" lengthAdjust="spacingAndGlyphs" >SAFETY</text>
<text x="408.6" y="810.25" font-size="10.71" fill="#ffffff" text-anchor="middle" textLength="43" lengthAdjust="spacingAndGlyphs" >RELAY NO.2</text>
<text x="813.5" y="763.05" font-size="10.71" fill="#a0a0a0" text-anchor="middle" textLength="23" lengthAdjust="spacingAndGlyphs" >JBOX1</text>
<text x="815" y="789.4" font-size="11.43" fill="#1e7cf2" text-anchor="middle" textLength="25" lengthAdjust="spacingAndGlyphs" >TS−B</text>
<line x1="902.2" y1="781.2" x2="908" y2="787" stroke="#ffffff" stroke-width="1.1" />
<line x1="902.2" y1="770.8" x2="908" y2="765" stroke="#ffffff" stroke-width="1.1" />
<line x1="891.8" y1="781.2" x2="886" y2="787" stroke="#ffffff" stroke-width="1.1" />
<line x1="891.8" y1="770.8" x2="886" y2="765" stroke="#ffffff" stroke-width="1.1" />
<circle cx="897" cy="776" r="7" fill="#212830" stroke="#ffffff" stroke-width="1.3" />
<text x="897" y="779.6" font-size="10" fill="#ffffff" text-anchor="middle" >R</text>
<line x1="904" y1="776.2" x2="953" y2="776.2" stroke="#ffffff" stroke-width="1.3" />
<rect x="950.8" y="773.8" width="4.4" height="4.4" fill="#ffffff" shape-rendering="crispEdges" />
<text x="897" y="756.95" font-size="10.71" fill="#a0a0a0" text-anchor="middle" textLength="27" lengthAdjust="spacingAndGlyphs" >OPSTA3</text>
<text x="897" y="765.85" font-size="12.14" fill="#1e7cf2" text-anchor="middle" textLength="31" lengthAdjust="spacingAndGlyphs" >LT412</text>
<text x="887" y="786.05" font-size="10.71" fill="#3aa88c" text-anchor="middle" textLength="3" lengthAdjust="spacingAndGlyphs" >1</text>
<text x="910" y="786.05" font-size="10.71" fill="#3aa88c" text-anchor="middle" textLength="6" lengthAdjust="spacingAndGlyphs" >2</text>
<text x="960" y="777.2" font-size="11.43" fill="#1e7cf2" textLength="36" lengthAdjust="spacingAndGlyphs" >RAM 02</text>
<text x="960" y="785.6" font-size="11.43" fill="#1e7cf2" textLength="24" lengthAdjust="spacingAndGlyphs" >OKAY</text>
<text x="408.6" y="825.5" font-size="11.43" fill="#1e7cf2" text-anchor="middle" textLength="12" lengthAdjust="spacingAndGlyphs" >CR</text>
<line x1="405.3" y1="827" x2="405.3" y2="828" stroke="#ffffff" stroke-width="1.3" shape-rendering="crispEdges" />
<line x1="412.4" y1="827" x2="412.4" y2="828" stroke="#ffffff" stroke-width="1.3" shape-rendering="crispEdges" />
<text x="813.5" y="818.05" font-size="10.71" fill="#a0a0a0" text-anchor="middle" textLength="23" lengthAdjust="spacingAndGlyphs" >JBOX1</text>
<text x="897" y="811.75" font-size="10.71" fill="#a0a0a0" text-anchor="middle" textLength="27" lengthAdjust="spacingAndGlyphs" >OPSTA3</text>
<text x="897" y="821.55" font-size="12.14" fill="#1e7cf2" text-anchor="middle" textLength="31" lengthAdjust="spacingAndGlyphs" >LT413</text>
<path d="M890.5,828 A7,7 0 0 1 903.5,828" fill="none" stroke="#ffffff" stroke-width="1.3" />
<line x1="886" y1="821" x2="891" y2="826" stroke="#ffffff" stroke-width="1.1" />
<line x1="908" y1="821" x2="903" y2="826" stroke="#ffffff" stroke-width="1.1" />
<clipPath id="clipb"><rect x="62" y="211" width="1794" height="617"/></clipPath><g clip-path="url(#clipb)">
<text x="960" y="833.0" font-size="11.43" fill="#1e7cf2" textLength="36" lengthAdjust="spacingAndGlyphs" >RAM 03</text>
</g>
<circle cx="1190" cy="329.3" r="2.3" fill="#ffffff" />
<circle cx="1190" cy="385.3" r="2.3" fill="#ffffff" />
<line x1="1190" y1="329.8" x2="1249" y2="329.8" stroke="#7c7c7c" stroke-width="1" shape-rendering="crispEdges" />
<line x1="1190" y1="385.8" x2="1256" y2="385.8" stroke="#7c7c7c" stroke-width="1" shape-rendering="crispEdges" />
<line x1="1270.5" y1="329.5" x2="1692" y2="329.5" stroke="#ba2029" stroke-width="1.7" />
<circle cx="1251.0" cy="329.3" r="1.8" fill="#212830" stroke="#ffffff" stroke-width="1.1" />
<circle cx="1268.4" cy="329.3" r="1.8" fill="#212830" stroke="#ffffff" stroke-width="1.1" />
<line x1="1249.2" y1="324.3" x2="1270.2" y2="324.3" stroke="#ffffff" stroke-width="1.2" shape-rendering="crispEdges" />
<line x1="1259.7" y1="320.3" x2="1259.7" y2="324.3" stroke="#ffffff" stroke-width="1.2" shape-rendering="crispEdges" />
<path d="M1264.5,385.3 H1343.5 V329.3" fill="none" stroke="#ba2029" stroke-width="1.7" />
<path d="M1692.5,385.3 H1615.6 V329.3" fill="none" stroke="#ba2029" stroke-width="1.7" />
<circle cx="1343.5" cy="329.3" r="2.3" fill="#ffffff" />
<circle cx="1615.6" cy="329.3" r="2.3" fill="#ffffff" />
<circle cx="1446.5" cy="329.3" r="1.8" fill="#212830" stroke="#ffffff" stroke-width="1.1" />
<circle cx="1464.5" cy="329.3" r="1.8" fill="#212830" stroke="#ffffff" stroke-width="1.1" />
<line x1="1447.5" y1="331.3" x2="1463.5" y2="331.3" stroke="#ffffff" stroke-width="1.4" shape-rendering="crispEdges" />
<line x1="1455.5" y1="326.3" x2="1455.5" y2="331.3" stroke="#ffffff" stroke-width="1.2" shape-rendering="crispEdges" />
<path d="M1451.5,328.3 Q1455.5,324.3 1459.5,328.3" fill="none" stroke="#ffffff" stroke-width="1" />
<line x1="1256.7" y1="380.3" x2="1256.7" y2="390.3" stroke="#ffffff" stroke-width="1.3" shape-rendering="crispEdges" />
<line x1="1263.6" y1="380.3" x2="1263.6" y2="390.3" stroke="#ffffff" stroke-width="1.3" shape-rendering="crispEdges" />
<text x="1259.7" y="292.85" font-size="10.71" fill="#a0a0a0" text-anchor="middle" textLength="27" lengthAdjust="spacingAndGlyphs" >OPSTA3</text>
<text x="1259.7" y="302.25" font-size="10.71" fill="#1e7cf2" text-anchor="middle" textLength="68.5" lengthAdjust="spacingAndGlyphs" >HYDRAULIC MOTOR</text>
<text x="1259.7" y="310.75" font-size="10.71" fill="#1e7cf2" text-anchor="middle" textLength="22" lengthAdjust="spacingAndGlyphs" >START</text>
<text x="1259.7" y="319.85" font-size="12.14" fill="#1e7cf2" text-anchor="middle" textLength="33" lengthAdjust="spacingAndGlyphs" >PB422</text>
<text x="1455.5" y="298.25" font-size="10.71" fill="#a0a0a0" text-anchor="middle" textLength="27" lengthAdjust="spacingAndGlyphs" >OPSTA3</text>
<text x="1455.5" y="307.05" font-size="10.71" fill="#1e7cf2" text-anchor="middle" textLength="68.5" lengthAdjust="spacingAndGlyphs" >HYDRAULIC MOTOR</text>
<text x="1455.5" y="315.75" font-size="10.71" fill="#1e7cf2" text-anchor="middle" textLength="18" lengthAdjust="spacingAndGlyphs" >STOP</text>
<text x="1455.5" y="324.85" font-size="12.14" fill="#1e7cf2" text-anchor="middle" textLength="39" lengthAdjust="spacingAndGlyphs" >PB422A</text>
<text x="1259.7" y="379.3" font-size="11.43" fill="#1e7cf2" text-anchor="middle" textLength="25" lengthAdjust="spacingAndGlyphs" >M422</text>
<text x="1259.7" y="402.25" font-size="10.71" fill="#ffffff" text-anchor="middle" textLength="25" lengthAdjust="spacingAndGlyphs" >4−422</text>
<text x="1259.7" y="411.25" font-size="10.71" fill="#ffffff" text-anchor="middle" textLength="68.5" lengthAdjust="spacingAndGlyphs" >HYDRAULIC MOTOR</text>
<circle cx="1699.5" cy="329.3" r="9" fill="#212830" stroke="#ffffff" stroke-width="1.3" />
<line x1="1708.5" y1="329.5" x2="1756" y2="329.5" stroke="#ffffff" stroke-width="1.3" />
<rect x="1753.8" y="327.1" width="4.4" height="4.4" fill="#ffffff" shape-rendering="crispEdges" />
<line x1="1704.7" y1="390.5" x2="1710.5" y2="396.3" stroke="#ffffff" stroke-width="1.1" />
<line x1="1704.7" y1="380.1" x2="1710.5" y2="374.3" stroke="#ffffff" stroke-width="1.1" />
<line x1="1694.3" y1="390.5" x2="1688.5" y2="396.3" stroke="#ffffff" stroke-width="1.1" />
<line x1="1694.3" y1="380.1" x2="1688.5" y2="374.3" stroke="#ffffff" stroke-width="1.1" />
<circle cx="1699.5" cy="385.3" r="7" fill="#212830" stroke="#ffffff" stroke-width="1.3" />
<text x="1699.5" y="388.90000000000003" font-size="10" fill="#ffffff" text-anchor="middle" >G</text>
<line x1="1706.5" y1="385.5" x2="1756" y2="385.5" stroke="#ffffff" stroke-width="1.3" />
<rect x="1753.8" y="383.1" width="4.4" height="4.4" fill="#ffffff" shape-rendering="crispEdges" />
<text x="1699.5" y="309.45" font-size="10.71" fill="#a0a0a0" text-anchor="middle" textLength="24" lengthAdjust="spacingAndGlyphs" >MCAB5</text>
<text x="1699.5" y="319.25" font-size="12.14" fill="#1e7cf2" text-anchor="middle" textLength="25" lengthAdjust="spacingAndGlyphs" >M422</text>
<text x="1699.5" y="365.45" font-size="10.71" fill="#a0a0a0" text-anchor="middle" textLength="27" lengthAdjust="spacingAndGlyphs" >OPSTA3</text>
<text x="1699.5" y="374.95" font-size="12.14" fill="#1e7cf2" text-anchor="middle" textLength="30" lengthAdjust="spacingAndGlyphs" >LT423</text>
<text x="1762" y="326.3" font-size="11.43" fill="#1e7cf2" textLength="50" lengthAdjust="spacingAndGlyphs" >HYDRAULIC</text>
<text x="1762" y="334.9" font-size="11.43" fill="#1e7cf2" textLength="31" lengthAdjust="spacingAndGlyphs" >MOTOR</text>
<text x="1762" y="351.35" font-size="10.71" fill="#ffffff" textLength="11.5" lengthAdjust="spacingAndGlyphs" >NO</text>
<text x="1762" y="360.55" font-size="10.71" fill="#ffffff" textLength="11.5" lengthAdjust="spacingAndGlyphs" >NC</text>
<text x="1762" y="386.3" font-size="11.43" fill="#1e7cf2" textLength="50" lengthAdjust="spacingAndGlyphs" >HYDRAULIC</text>
<text x="1762" y="394.9" font-size="11.43" fill="#1e7cf2" textLength="40" lengthAdjust="spacingAndGlyphs" >RUNNING</text>
<rect x="1187.75" y="466.55" width="4.5" height="4.5" fill="#ffffff" shape-rendering="crispEdges" />
<rect x="1187.75" y="522.15" width="4.5" height="4.5" fill="#ffffff" shape-rendering="crispEdges" />
<line x1="1190" y1="469.3" x2="1249" y2="469.3" stroke="#7c7c7c" stroke-width="1" shape-rendering="crispEdges" />
<line x1="1190" y1="524.9" x2="1256" y2="524.9" stroke="#7c7c7c" stroke-width="1" shape-rendering="crispEdges" />
<line x1="1270.5" y1="469.0" x2="1692" y2="469.0" stroke="#ba2029" stroke-width="1.7" />
<circle cx="1251.0" cy="468.8" r="1.8" fill="#212830" stroke="#ffffff" stroke-width="1.1" />
<circle cx="1268.4" cy="468.8" r="1.8" fill="#212830" stroke="#ffffff" stroke-width="1.1" />
<line x1="1249.2" y1="463.8" x2="1270.2" y2="463.8" stroke="#ffffff" stroke-width="1.2" shape-rendering="crispEdges" />
<line x1="1259.7" y1="459.8" x2="1259.7" y2="463.8" stroke="#ffffff" stroke-width="1.2" shape-rendering="crispEdges" />
<path d="M1264.5,524.4 H1343.5 V468.8" fill="none" stroke="#ba2029" stroke-width="1.7" />
<path d="M1692.5,524.4 H1615.6 V468.8" fill="none" stroke="#ba2029" stroke-width="1.7" />
<rect x="1341.25" y="466.55" width="4.5" height="4.5" fill="#ffffff" shape-rendering="crispEdges" />
<rect x="1613.35" y="466.55" width="4.5" height="4.5" fill="#ffffff" shape-rendering="crispEdges" />
<circle cx="1446.5" cy="468.8" r="1.8" fill="#212830" stroke="#ffffff" stroke-width="1.1" />
<circle cx="1464.5" cy="468.8" r="1.8" fill="#212830" stroke="#ffffff" stroke-width="1.1" />
<line x1="1447.5" y1="470.8" x2="1463.5" y2="470.8" stroke="#ffffff" stroke-width="1.4" shape-rendering="crispEdges" />
<line x1="1455.5" y1="465.8" x2="1455.5" y2="470.8" stroke="#ffffff" stroke-width="1.2" shape-rendering="crispEdges" />
<path d="M1451.5,467.8 Q1455.5,463.8 1459.5,467.8" fill="none" stroke="#ffffff" stroke-width="1" />
<line x1="1256.7" y1="519.4" x2="1256.7" y2="529.4" stroke="#ffffff" stroke-width="1.3" shape-rendering="crispEdges" />
<line x1="1263.6" y1="519.4" x2="1263.6" y2="529.4" stroke="#ffffff" stroke-width="1.3" shape-rendering="crispEdges" />
<text x="1259.7" y="432.35" font-size="10.71" fill="#a0a0a0" text-anchor="middle" textLength="27" lengthAdjust="spacingAndGlyphs" >OPSTA3</text>
<text x="1259.7" y="441.75" font-size="10.71" fill="#1e7cf2" text-anchor="middle" textLength="62.5" lengthAdjust="spacingAndGlyphs" >INDEXING MOTOR</text>
<text x="1259.7" y="450.25" font-size="10.71" fill="#1e7cf2" text-anchor="middle" textLength="22" lengthAdjust="spacingAndGlyphs" >START</text>
<text x="1259.7" y="459.35" font-size="12.14" fill="#1e7cf2" text-anchor="middle" textLength="33" lengthAdjust="spacingAndGlyphs" >PB425</text>
<text x="1455.5" y="437.75" font-size="10.71" fill="#a0a0a0" text-anchor="middle" textLength="27" lengthAdjust="spacingAndGlyphs" >OPSTA3</text>
<text x="1455.5" y="446.55" font-size="10.71" fill="#1e7cf2" text-anchor="middle" textLength="62.5" lengthAdjust="spacingAndGlyphs" >INDEXING MOTOR</text>
<text x="1455.5" y="455.25" font-size="10.71" fill="#1e7cf2" text-anchor="middle" textLength="18" lengthAdjust="spacingAndGlyphs" >STOP</text>
<text x="1455.5" y="464.35" font-size="12.14" fill="#1e7cf2" text-anchor="middle" textLength="39" lengthAdjust="spacingAndGlyphs" >PB425A</text>
<text x="1259.7" y="518.4" font-size="11.43" fill="#1e7cf2" text-anchor="middle" textLength="25" lengthAdjust="spacingAndGlyphs" >M425</text>
<text x="1259.7" y="541.35" font-size="10.71" fill="#ffffff" text-anchor="middle" textLength="25" lengthAdjust="spacingAndGlyphs" >4−425</text>
<text x="1259.7" y="550.35" font-size="10.71" fill="#ffffff" text-anchor="middle" textLength="62.5" lengthAdjust="spacingAndGlyphs" >INDEXING MOTOR</text>
<circle cx="1699.5" cy="468.8" r="9" fill="#212830" stroke="#ffffff" stroke-width="1.3" />
<line x1="1708.5" y1="469.0" x2="1756" y2="469.0" stroke="#ffffff" stroke-width="1.3" />
<rect x="1753.8" y="466.6" width="4.4" height="4.4" fill="#ffffff" shape-rendering="crispEdges" />
<line x1="1704.7" y1="529.6" x2="1710.5" y2="535.4" stroke="#ffffff" stroke-width="1.1" />
<line x1="1704.7" y1="519.1999999999999" x2="1710.5" y2="513.4" stroke="#ffffff" stroke-width="1.1" />
<line x1="1694.3" y1="529.6" x2="1688.5" y2="535.4" stroke="#ffffff" stroke-width="1.1" />
<line x1="1694.3" y1="519.1999999999999" x2="1688.5" y2="513.4" stroke="#ffffff" stroke-width="1.1" />
<circle cx="1699.5" cy="524.4" r="7" fill="#212830" stroke="#ffffff" stroke-width="1.3" />
<text x="1699.5" y="528.0" font-size="10" fill="#ffffff" text-anchor="middle" >G</text>
<line x1="1706.5" y1="524.6" x2="1756" y2="524.6" stroke="#ffffff" stroke-width="1.3" />
<rect x="1753.8" y="522.1999999999999" width="4.4" height="4.4" fill="#ffffff" shape-rendering="crispEdges" />
<text x="1699.5" y="448.95" font-size="10.71" fill="#a0a0a0" text-anchor="middle" textLength="24" lengthAdjust="spacingAndGlyphs" >MCAB5</text>
<text x="1699.5" y="458.75" font-size="12.14" fill="#1e7cf2" text-anchor="middle" textLength="25" lengthAdjust="spacingAndGlyphs" >M425</text>
<text x="1699.5" y="504.55" font-size="10.71" fill="#a0a0a0" text-anchor="middle" textLength="27" lengthAdjust="spacingAndGlyphs" >OPSTA3</text>
<text x="1699.5" y="514.05" font-size="12.14" fill="#1e7cf2" text-anchor="middle" textLength="30" lengthAdjust="spacingAndGlyphs" >LT426</text>
<text x="1762" y="465.8" font-size="11.43" fill="#1e7cf2" textLength="41.5" lengthAdjust="spacingAndGlyphs" >INDEXING</text>
<text x="1762" y="474.4" font-size="11.43" fill="#1e7cf2" textLength="31" lengthAdjust="spacingAndGlyphs" >MOTOR</text>
<text x="1762" y="490.85" font-size="10.71" fill="#ffffff" textLength="11.5" lengthAdjust="spacingAndGlyphs" >NO</text>
<text x="1762" y="500.05" font-size="10.71" fill="#ffffff" textLength="11.5" lengthAdjust="spacingAndGlyphs" >NC</text>
<text x="1762" y="525.4" font-size="11.43" fill="#1e7cf2" textLength="41.5" lengthAdjust="spacingAndGlyphs" >INDEXING</text>
<text x="1762" y="534.0" font-size="11.43" fill="#1e7cf2" textLength="40" lengthAdjust="spacingAndGlyphs" >RUNNING</text>
</g>
<line x1="772" y1="414" x2="868" y2="414" stroke="#ffffff" stroke-width="1" shape-rendering="crispEdges" />
<line x1="820.5" y1="367" x2="820.5" y2="463" stroke="#ffffff" stroke-width="1" shape-rendering="crispEdges" />
<rect x="817.5" y="411" width="6" height="6" fill="none" stroke="#ffffff" stroke-width="1" />
<circle cx="1783.2" cy="306.7" r="45.7" fill="none" stroke="#80858c" stroke-width="11.5" opacity="0.33"/>
<rect x="1760.5" y="283.5" width="45.5" height="45" fill="#b9bbbe" shape-rendering="crispEdges" opacity="0.78"/>
<rect x="1769" y="292" width="28.5" height="28" fill="#a4a6a9" shape-rendering="crispEdges" opacity="0.55"/>
<text x="1774.7" y="264.5" font-size="17" fill="#9ea0a3" stroke="#9ea0a3" stroke-width="0.6" style="font-family:'Liberation Serif','Noto Serif CJK SC',serif" >北</text>
<text x="1774.7" y="362.5" font-size="17" fill="#9ea0a3" stroke="#9ea0a3" stroke-width="0.6" style="font-family:'Liberation Serif','Noto Serif CJK SC',serif" >南</text>
<text x="1725.5" y="313.5" font-size="17" fill="#9ea0a3" stroke="#9ea0a3" stroke-width="0.6" style="font-family:'Liberation Serif','Noto Serif CJK SC',serif" >西</text>
<text x="1823" y="313.5" font-size="17" fill="#9ea0a3" stroke="#9ea0a3" stroke-width="0.6" style="font-family:'Liberation Serif','Noto Serif CJK SC',serif" >東</text>
<text x="1771.2" y="316" font-size="24" fill="#63656a" stroke="#63656a" stroke-width="0.6" style="font-family:'Liberation Serif','Noto Serif CJK SC',serif" >上</text>
<rect x="1759.5" y="382" width="47" height="16.5" fill="#9a9da1" rx="4" opacity="0.8"/>
<text x="1763" y="394" font-size="10" fill="#b9bbbe" textLength="22" lengthAdjust="spacingAndGlyphs" >WCS</text>
<path d="M1790,388 l5,0 l-2.5,4 z" fill="#cfd1d4" opacity="0.6"/>
<rect x="1795" y="226" width="10" height="3" fill="#f0f0f0" shape-rendering="crispEdges" />
<rect x="1816.5" y="222.5" width="6" height="6" fill="none" stroke="#f0f0f0" stroke-width="1.6" />
<path d="M1818.5,222 v-2 h7 v7 h-2" fill="none" stroke="#f0f0f0" stroke-width="1.4" />
<path d="M1835,221 l8,8 M1843,221 l-8,8" fill="none" stroke="#f0f0f0" stroke-width="2.4" />
<rect x="1820.5" y="424" width="31.5" height="211.5" fill="#7d838b" rx="5" opacity="0.5"/>
<circle cx="1836" cy="456" r="10" fill="none" stroke="#777c83" stroke-width="2.5" opacity="0.8"/>
<circle cx="1836" cy="456" r="5" fill="none" stroke="#777c83" stroke-width="1.5" opacity="0.8"/>
<path d="M1833,473 h6 l-3,4 z" fill="#777c83" />
<line x1="1823" y1="481" x2="1849" y2="481" stroke="#777c83" stroke-width="1" shape-rendering="crispEdges" opacity="0.5"/>
<path d="M1826,497 q2,-3 4,2 v-9 q1.5,-3 3,0 v-2 q1.5,-3 3,0 v2 q1.5,-3 3,0 v3 q1.5,-2 3,0 v10 q0,6 -5,8 h-7 q-3,-2 -4,-6 z" fill="none" stroke="#777c83" stroke-width="1.6" />
<path d="M1825,515 l14,14 M1839,515 l-14,14 M1825,515 h4 M1825,515 v4 M1839,515 h-4 M1839,515 v4 M1825,529 h4 M1825,529 v-4" fill="none" stroke="#777c83" stroke-width="1.6" />
<circle cx="1840" cy="527" r="4.5" fill="none" stroke="#777c83" stroke-width="1.6" />
<line x1="1843" y1="530" x2="1848" y2="535" stroke="#777c83" stroke-width="2.4" />
<path d="M1833,542 h6 l-3,4 z" fill="#777c83" />
<path d="M1836,552 l-5,6 h3 v12 h4 v-12 h3 z" fill="none" stroke="#777c83" stroke-width="1.4" />
<ellipse cx="1836" cy="565" rx="11" ry="4.5" fill="none" stroke="#777c83" stroke-width="1.5"/>
<path d="M1833,580 h6 l-3,4 z" fill="#777c83" />
<line x1="1823" y1="588" x2="1849" y2="588" stroke="#777c83" stroke-width="1" shape-rendering="crispEdges" opacity="0.5"/>
<rect x="1825" y="594" width="6" height="5" fill="none" stroke="#777c83" stroke-width="1" />
<rect x="1833" y="594" width="6" height="5" fill="none" stroke="#777c83" stroke-width="1" />
<rect x="1841" y="594" width="6" height="5" fill="none" stroke="#777c83" stroke-width="1" />
<rect x="1825" y="603" width="15" height="11" fill="none" stroke="#777c83" stroke-width="1.4" />
<path d="M1829,605.5 l7,3.5 l-7,3.5 z" fill="#777c83" />
<circle cx="1845.5" cy="429.5" r="3" fill="none" stroke="#777c83" stroke-width="1" />
<path d="M1843.8,427.8 l3.4,3.4 m0,-3.4 l-3.4,3.4" fill="none" stroke="#777c83" stroke-width="1" />
<circle cx="1845.5" cy="629.5" r="3" fill="none" stroke="#777c83" stroke-width="1" />
<line x1="1843.5" y1="629.5" x2="1847.5" y2="629.5" stroke="#777c83" stroke-width="1" shape-rendering="crispEdges" />
<rect x="6.5" y="6.5" width="40" height="40" fill="url(#g5)" stroke="#2c2c2c" stroke-width="1.2" />
<rect x="7.6" y="7.6" width="37.8" height="37.8" fill="none" stroke="#ffffff" stroke-width="1" opacity="0.4"/>
<path d="M8,30 Q26,14 45,14 V45 H8 Z" fill="#6e6e6e" opacity="0.22"/>
<ellipse cx="23" cy="36.5" rx="11" ry="2.4" fill="#3a3a3a" opacity="0.22"/>
<path d="M14.6,9.6 L19.6,9.3 L32.6,30.6 L26.5,33.2 L23.2,27.6 L17.2,29 L16.6,35.6 L11,37.2 Z" fill="url(#g6)" />
<path d="M14.6,9.6 L19.6,9.3 L22.6,18 L12.8,25 Z" fill="#f8b0b0" opacity="0.6"/>
<path d="M17.2,29 L23.2,27.6 L26.5,33.2 L16.6,35.6 Z" fill="#d21c1c" />
<path d="M17.6,30.2 L23.8,28.8 L24.6,30.2 L17.5,31.8 Z" fill="#7a0a0a" />
<path d="M19.6,19.4 L22.8,24.6 L18.4,25.6 Z" fill="#5e0808" />
<path d="M17.4,26.6 L23.6,25.4 L24.6,28 L17.2,29.6 Z" fill="#a01010" />
<path d="M11,37.2 L16.6,35.6 L16.9,31 L12.4,30.5 Z" fill="#8a0c0c" opacity="0.75"/>
<path d="M26.5,33.2 L32.6,30.6 L30.4,27 L25,30.4 Z" fill="#a01010" opacity="0.7"/>
<path d="M36,24 h7.2 l-3.6,4.6 z" fill="#2e2e2e" />
<text x="39.3" y="43.6" font-size="8.2" fill="#111" font-weight="bold" >E</text>
<g transform="translate(64,17.3) scale(1.25,0.92) translate(-64,-17.3)" >
<path d="M58,11.3 h8 l4,4 v9 h-12 z" fill="url(#g7)" stroke="#3a3a3a" stroke-width="1.2" />
<path d="M66,11.3 v4 h4" fill="#e8ebf2" stroke="#3a3a3a" stroke-width="1" />
</g>
<g transform="translate(88,17.3) scale(1.15,0.95) translate(-88,-17.3)" >
<path d="M81,22.3 v-10 h5 l1.5,1.5 h6 v3" fill="#eef0f5" stroke="#3a3a3a" stroke-width="1.2" />
<path d="M81,22.3 l3.5,-6 h11.5 l-3.5,6 z" fill="url(#g8)" stroke="#3a3a3a" stroke-width="1.2" />
</g>
<g transform="translate(111.7,16.5) scale(1.1,1.02) translate(-111.7,-16.5)" >
<rect x="105.2" y="10.0" width="13" height="13" fill="url(#g9)" stroke="#2e3340" stroke-width="1" rx="1.2" />
<rect x="107.7" y="10.5" width="8" height="5" fill="#eceff5" shape-rendering="crispEdges" />
<rect x="107.7" y="17.5" width="8" height="5" fill="#dfe3ec" shape-rendering="crispEdges" />
<rect x="109.2" y="19.0" width="2.5" height="2.5" fill="#4a5060" shape-rendering="crispEdges" />
</g>
<g transform="translate(135.5,17) scale(1.1,1.0) translate(-135.5,-17)" >
<path d="M128.5,16 l6,-5.5 v3.5 q8,0 8,8 v1.5 h-3 v-1.5 q0,-4.5 -5,-4.5 v3.5 z" fill="#f4f4f4" stroke="#3a3a3a" stroke-width="1.1" />
</g>
<g transform="translate(171,17) scale(1.1,1.0) translate(-171,-17)" >
<path d="M178,16 l-6,-5.5 v3.5 q-8,0 -8,8 v1.5 h3 v-1.5 q0,-4.5 5,-4.5 v3.5 z" fill="#8c8c8c" stroke="#6c6c6c" stroke-width="1" />
</g>
<g transform="translate(208,17.5) scale(1.08,1.0) translate(-208,-17.5)" >
<rect x="204" y="10.5" width="8" height="5" fill="#f4f4f4" stroke="#3a3a3a" stroke-width="1.1" />
<rect x="200.5" y="15.0" width="15" height="7" fill="url(#g10)" stroke="#3a3a3a" stroke-width="1.1" rx="2" />
<rect x="203.5" y="19.5" width="9" height="4.5" fill="#ffffff" stroke="#3a3a3a" stroke-width="1.1" />
<line x1="205" y1="21.5" x2="211" y2="21.5" stroke="#808080" stroke-width="1" shape-rendering="crispEdges" />
</g>
<g transform="translate(231,17) scale(1.1,0.98) translate(-231,-17)" >
<path d="M224.5,23 v-12 h5 l1.5,2 h6.5 v10 z" fill="url(#g11)" stroke="#3a3a3a" stroke-width="1.2" />
<line x1="224.5" y1="14" x2="237.5" y2="14" stroke="#3a3a3a" stroke-width="1" shape-rendering="crispEdges" />
</g>
<path d="M151.0,15.5 h5 l-2.5,3 z" fill="#5a5a5a" />
<path d="M187.0,15.5 h5 l-2.5,3 z" fill="#6a6a6a" />
<path d="M263,14.5 h-7 v-4 l-7,6.5 l7,6.5 v-4 h7 z" fill="#f4f4f4" stroke="#3a3a3a" stroke-width="1.1" />
<path d="M273,14.5 h7 v-4 l7,6.5 l-7,6.5 v-4 h-7 z" fill="#f4f4f4" stroke="#3a3a3a" stroke-width="1.1" />
<path d="M298,15 q4,-6 9,-3 M305,11 l-3,6 l4,3 l-2,4 M302,17 l-5,3 M306,14 l5,1" fill="none" stroke="#f0f0f0" stroke-width="2.2" stroke-linecap="round" stroke-linejoin="round"/>
<circle cx="307" cy="10" r="1.8" fill="#f0f0f0" />
<path d="M296,22 q8,5 15,-2" fill="none" stroke="#f0f0f0" stroke-width="1.2" />
<rect x="319.5" y="13" width="7" height="1.6" fill="#111" shape-rendering="crispEdges" />
<path d="M319.5,15.0 h7 l-3.5,4 z" fill="#111" />
<text x="819.5" y="21.5" font-size="12.5" fill="#1e1e1e" textLength="105" lengthAdjust="spacingAndGlyphs" opacity="0.6">AutoCAD Electrical</text>
<text x="819" y="20.5" font-size="12.5" fill="#ececec" textLength="105" lengthAdjust="spacingAndGlyphs" >AutoCAD Electrical</text>
<text x="936.5" y="21.5" font-size="12.5" fill="#1e1e1e" textLength="84.5" lengthAdjust="spacingAndGlyphs" opacity="0.6">DEMO04.DWG</text>
<text x="936" y="20.5" font-size="12.5" fill="#ececec" textLength="84.5" lengthAdjust="spacingAndGlyphs" >DEMO04.DWG</text>
<path d="M1513,12 l5,4.5 l-5,4.5 z" fill="#1a1a1a" />
<rect x="1523.5" y="7" width="178.5" height="20" fill="#fbfbfb" stroke="#8a8a8a" stroke-width="1" />
<g transform="translate(1527.5,22) skewX(-12)"><text x="0" y="0" font-size="11" fill="#8a8a8a" >鍵入關鍵字或詞組</text></g>
<rect x="1709.7" y="9.5" width="3.2" height="5" fill="#f6f6f6" stroke="#2a2a2a" stroke-width="1.1" rx="1" />
<path d="M1709.5,13.5 h3.6 l1.2,4 v5 q0,1.5 -1.5,1.5 h-3 q-1.5,0 -1.5,-1.5 v-5 z" fill="#f6f6f6" stroke="#2a2a2a" stroke-width="1.1" />
<rect x="1709.3" y="20.5" width="4" height="2.6" fill="#d0d0d0" shape-rendering="crispEdges" />
<rect x="1717.1000000000001" y="9.5" width="3.2" height="5" fill="#f6f6f6" stroke="#2a2a2a" stroke-width="1.1" rx="1" />
<path d="M1716.9,13.5 h3.6 l1.2,4 v5 q0,1.5 -1.5,1.5 h-3 q-1.5,0 -1.5,-1.5 v-5 z" fill="#f6f6f6" stroke="#2a2a2a" stroke-width="1.1" />
<rect x="1716.7" y="20.5" width="4" height="2.6" fill="#d0d0d0" shape-rendering="crispEdges" />
<rect x="1713.6" y="14.5" width="2.8" height="3.5" fill="#f6f6f6" stroke="#2a2a2a" stroke-width="1" />
<circle cx="1734.5" cy="13" r="4" fill="#f4f4f4" stroke="#2e2e2e" stroke-width="1.2" />
<circle cx="1733.5" cy="12" r="1.2" fill="#5a5a5a" />
<path d="M1737,16 l8,8 l-2.5,1.5 l-1.5,-1.5 l-1,1 l-1.5,-1.5 l-1,1 l-3,-3.5 z" fill="#e8e8e8" stroke="#2e2e2e" stroke-width="1.1" />
<path d="M1757,14 q1,8 10,8 z" fill="#f2f2f2" stroke="#2e2e2e" stroke-width="1.1" />
<path d="M1760,19 l7,-8 M1764,10 l3,1 l-1,3" fill="none" stroke="#1e1e1e" stroke-width="1.3" />
<path d="M1758,25 l4,-5 l4,5 z" fill="#e4e4e4" stroke="#2e2e2e" stroke-width="1" />
<path d="M1786.5,9 l2.2,5.4 l5.8,0.4 l-4.5,3.7 l1.5,5.7 l-5,-3.2 l-5,3.2 l1.5,-5.7 l-4.5,-3.7 l5.8,-0.4 z" fill="#f6f6f6" stroke="#2a2a2a" stroke-width="1.2" />
<line x1="1804.5" y1="8" x2="1804.5" y2="25" stroke="#8a8a8a" stroke-width="1" shape-rendering="crispEdges" />
<circle cx="1819.7" cy="17" r="7.6" fill="url(#g12)" stroke="#1e1e1e" stroke-width="1.2" />
<text x="1819.7" y="22" font-size="13.5" fill="#2440a0" text-anchor="middle" font-weight="bold" >?</text>
<path d="M1837.0,16.0 h5 l-2.5,3 z" fill="#5c5c5c" />
<rect x="1866" y="18" width="10" height="2.4" fill="#1e1e1e" shape-rendering="crispEdges" />
<rect x="1884.5" y="12.8" width="7" height="7" fill="none" stroke="#1e1e1e" stroke-width="1.6" />
<path d="M1900.5,12 l8.5,8 M1909,12 l-8.5,8" fill="none" stroke="#1e1e1e" stroke-width="2.6" />
<path d="M139.5,50 V35 Q139.5,32.5 142,32.5 H191.5 Q194,32.5 194,35 V50 Z" fill="url(#g13)" />
<text x="61.5" y="45" font-size="12" fill="#f2f2f2" stroke="#f2f2f2" stroke-width="0.18" >常用</text>
<text x="105.5" y="45" font-size="12" fill="#f2f2f2" stroke="#f2f2f2" stroke-width="0.18" >專案</text>
<text x="149" y="45" font-size="12" fill="#4a4a4a" stroke="#4a4a4a" stroke-width="0.18" >線路圖</text>
<text x="205.5" y="45" font-size="12" fill="#f2f2f2" stroke="#f2f2f2" stroke-width="0.18" >面板</text>
<text x="249.5" y="45" font-size="12" fill="#f2f2f2" stroke="#f2f2f2" stroke-width="0.18" >報告</text>
<text x="293.5" y="45" font-size="12" fill="#f2f2f2" stroke="#f2f2f2" stroke-width="0.18" >匯入</text>
<text x="317.5" y="45" font-size="12.5" fill="#f2f2f2" >/</text>
<text x="322.5" y="45" font-size="12" fill="#f2f2f2" stroke="#f2f2f2" stroke-width="0.18" >匯出資料</text>
<text x="390.5" y="45" font-size="12" fill="#f2f2f2" stroke="#f2f2f2" stroke-width="0.18" >轉換工具</text>
<text x="458.5" y="45" font-size="12" fill="#f2f2f2" stroke="#f2f2f2" stroke-width="0.18" >線上</text>
<text x="502.5" y="45" font-size="12" fill="#f2f2f2" stroke="#f2f2f2" stroke-width="0.18" >增益集</text>
<rect x="570" y="37" width="13" height="7" fill="#ececec" rx="2.5" />
<path d="M573.3,42.3 h6.4 l-3.2,-3.6 z" fill="#333" />
<path d="M588.5,39.5 h5 l-2.5,3 z" fill="#e8e8e8" />
<rect x="7" y="50" width="1153" height="98" fill="url(#g14)" shape-rendering="crispEdges" />
<rect x="1160" y="50" width="753" height="98" fill="url(#g15)" shape-rendering="crispEdges" />
<rect x="1160" y="50" width="753" height="1" fill="#f4f4f4" shape-rendering="crispEdges" />
<rect x="7" y="148" width="1906" height="1" fill="#fafafa" shape-rendering="crispEdges" />
<rect x="1160" y="148" width="753" height="1" fill="#e2e2e2" shape-rendering="crispEdges" />
<rect x="4" y="50" width="3" height="99" fill="#5c5c5c" shape-rendering="crispEdges" />
<rect x="4" y="149" width="1156" height="1" fill="#505050" shape-rendering="crispEdges" />
<rect x="4" y="150" width="1156" height="1" fill="#5e5e5e" shape-rendering="crispEdges" />
<rect x="7" y="130" width="277" height="18" fill="url(#g16)" shape-rendering="crispEdges" />
<rect x="7" y="130" width="277" height="1" fill="#d4d4d4" shape-rendering="crispEdges" />
<text x="115.6" y="143.3" font-size="11.7" fill="#444" stroke="#444" stroke-width="0.23" >插入元件</text>
<path d="M169.4,137.5 h7 l-3.5,4 z" fill="#444" />
<rect x="288" y="130" width="169" height="18" fill="url(#g17)" shape-rendering="crispEdges" />
<rect x="288" y="130" width="169" height="1" fill="#d4d4d4" shape-rendering="crispEdges" />
<text x="342.6" y="143.3" font-size="11.7" fill="#444" stroke="#444" stroke-width="0.23" >編輯元件</text>
<path d="M396.4,137.5 h7 l-3.5,4 z" fill="#444" />
<rect x="461" y="130" width="251" height="18" fill="url(#g18)" shape-rendering="crispEdges" />
<rect x="461" y="130" width="251" height="1" fill="#d4d4d4" shape-rendering="crispEdges" />
<text x="551.4" y="143.3" font-size="11.7" fill="#444" stroke="#444" stroke-width="0.23" >插入配線號碼</text>
<rect x="716" y="130" width="243" height="18" fill="url(#g19)" shape-rendering="crispEdges" />
<rect x="716" y="130" width="243" height="1" fill="#d4d4d4" shape-rendering="crispEdges" />
<text x="795.9" y="143.3" font-size="11.7" fill="#444" stroke="#444" stroke-width="0.23" >編輯配線號碼</text>
<path d="M873.1,137.5 h7 l-3.5,4 z" fill="#444" />
<rect x="963" y="130" width="196" height="18" fill="url(#g20)" shape-rendering="crispEdges" />
<rect x="963" y="130" width="196" height="1" fill="#d4d4d4" shape-rendering="crispEdges" />
<text x="1031.1" y="143.3" font-size="11.7" fill="#444" stroke="#444" stroke-width="0.23" >其他工具</text>
<path d="M1084.9,137.5 h7 l-3.5,4 z" fill="#444" />
<rect x="286" y="52" width="1" height="96" fill="#c4c4c4" shape-rendering="crispEdges" />
<rect x="287" y="52" width="1" height="96" fill="#ffffff" shape-rendering="crispEdges" />
<rect x="459" y="52" width="1" height="96" fill="#c4c4c4" shape-rendering="crispEdges" />
<rect x="460" y="52" width="1" height="96" fill="#ffffff" shape-rendering="crispEdges" />
<rect x="714" y="52" width="1" height="96" fill="#c4c4c4" shape-rendering="crispEdges" />
<rect x="715" y="52" width="1" height="96" fill="#ffffff" shape-rendering="crispEdges" />
<rect x="961" y="52" width="1" height="96" fill="#c4c4c4" shape-rendering="crispEdges" />
<rect x="962" y="52" width="1" height="96" fill="#ffffff" shape-rendering="crispEdges" />
<circle cx="50.5" cy="68.5" r="9.3" fill="url(#g21)" stroke="#3a3a3a" stroke-width="1.3" />
<line x1="37" y1="68.5" x2="41" y2="68.5" stroke="#3a3a3a" stroke-width="1.3" shape-rendering="crispEdges" />
<line x1="60" y1="68.5" x2="64" y2="68.5" stroke="#3a3a3a" stroke-width="1.3" shape-rendering="crispEdges" />
<path d="M57.5,79.7 h6.5 v5" fill="none" stroke="#333" stroke-width="1.6" />
<path d="M61.0,84.2 h6 l-3,3.2 z" fill="#333" />
<text x="22.8" y="104.6" font-size="11.8" fill="#363636" stroke="#363636" stroke-width="0.27" >圖示功能表</text>
<path d="M49.8,111.9 h5 l-2.5,3 z" fill="#3a3a3a" />
<rect x="121.5" y="61.5" width="25" height="25" fill="url(#g22)" stroke="#3a3a3a" stroke-width="1.4" rx="1" />
<path d="M122,69.5 h8 l4,-4.5 M134.5,69.5 h12 M140,66.5 v6 M122,80 h8.5 M130.5,77 v6 M133,77 v6 M133,80 h13.5" fill="none" stroke="#3a3a3a" stroke-width="1.3" />
<text x="104.7" y="104.6" font-size="11.8" fill="#363636" stroke="#363636" stroke-width="0.27" >電路建置器</text>
<path d="M131.7,111.9 h5 l-2.5,3 z" fill="#3a3a3a" />
<rect x="176.5" y="55.5" width="107.5" height="21" fill="url(#g23)" stroke="#cdcdcd" stroke-width="1" shape-rendering="crispEdges" />
<rect x="200" y="56.5" width="1" height="19" fill="#d4d4d4" shape-rendering="crispEdges" />
<rect x="212" y="56.5" width="1" height="19" fill="#d4d4d4" shape-rendering="crispEdges" />
<rect x="236" y="56.5" width="1" height="19" fill="#d4d4d4" shape-rendering="crispEdges" />
<rect x="248" y="56.5" width="1" height="19" fill="#d4d4d4" shape-rendering="crispEdges" />
<rect x="271.5" y="56.5" width="1" height="19" fill="#d4d4d4" shape-rendering="crispEdges" />
<path d="M203.8,64.8 h5 l-2.5,3 z" fill="#333" />
<path d="M239.8,64.8 h5 l-2.5,3 z" fill="#333" />
<path d="M275.3,64.8 h5 l-2.5,3 z" fill="#333" />
<rect x="176.5" y="79.5" width="107.5" height="21" fill="url(#g24)" stroke="#cdcdcd" stroke-width="1" shape-rendering="crispEdges" />
<rect x="200" y="80.5" width="1" height="19" fill="#d4d4d4" shape-rendering="crispEdges" />
<rect x="212" y="80.5" width="1" height="19" fill="#d4d4d4" shape-rendering="crispEdges" />
<rect x="236" y="80.5" width="1" height="19" fill="#d4d4d4" shape-rendering="crispEdges" />
<rect x="248" y="80.5" width="1" height="19" fill="#d4d4d4" shape-rendering="crispEdges" />
<rect x="271.5" y="80.5" width="1" height="19" fill="#d4d4d4" shape-rendering="crispEdges" />
<path d="M203.8,88.8 h5 l-2.5,3 z" fill="#333" />
<path d="M239.8,88.8 h5 l-2.5,3 z" fill="#333" />
<path d="M275.3,88.8 h5 l-2.5,3 z" fill="#333" />
<circle cx="185.5" cy="62.4" r="3.2" fill="#eef0f4" stroke="#333" stroke-width="1.2" />
<line x1="180" y1="62.4" x2="182.3" y2="62.4" stroke="#333" stroke-width="1.2" shape-rendering="crispEdges" />
<line x1="188.7" y1="62.4" x2="191" y2="62.4" stroke="#333" stroke-width="1.2" shape-rendering="crispEdges" />
<circle cx="185.5" cy="69.3" r="3.2" fill="#eef0f4" stroke="#333" stroke-width="1.2" />
<line x1="180" y1="69.3" x2="182.3" y2="69.3" stroke="#333" stroke-width="1.2" shape-rendering="crispEdges" />
<line x1="188.7" y1="69.3" x2="191" y2="69.3" stroke="#333" stroke-width="1.2" shape-rendering="crispEdges" />
<path d="M185.5,58 q-3,4.5 0,8 q3,3.5 0,8 M185.5,58 q3,4.5 0,8 q-3,3.5 0,8" fill="none" stroke="#333" stroke-width="0.9" stroke-dasharray="1.5,1"/>
<rect x="214.8" y="58.8" width="9" height="13.5" fill="#fdfdfd" stroke="#333" stroke-width="1.3" rx="0.8" />
<rect x="219.5" y="59.5" width="4" height="12" fill="url(#g25)" shape-rendering="crispEdges" />
<rect x="216.5" y="60.5" width="1.6" height="1.6" fill="#555" shape-rendering="crispEdges" />
<rect x="220.5" y="60.5" width="1.6" height="1.6" fill="#555" shape-rendering="crispEdges" />
<rect x="216.5" y="63.5" width="1.6" height="1.6" fill="#555" shape-rendering="crispEdges" />
<rect x="220.5" y="63.5" width="1.6" height="1.6" fill="#555" shape-rendering="crispEdges" />
<path d="M224.5,68.5 h3.3 v2.5" fill="none" stroke="#333" stroke-width="1.5" />
<path d="M224.8,70.5 h6 l-3,3.2 z" fill="#333" />
<path d="M250.8,58.8 h7.5 v13.5 h-7.5 z" fill="#fafafa" stroke="#333" stroke-width="1.3" />
<rect x="254" y="59.5" width="4" height="12" fill="url(#g26)" shape-rendering="crispEdges" />
<line x1="253.3" y1="59" x2="253.3" y2="72" stroke="#333" stroke-width="1.2" shape-rendering="crispEdges" />
<path d="M256.5,61 v9" fill="none" stroke="#444" stroke-width="1" stroke-dasharray="1.2,1.3"/>
<path d="M260.5,68.5 h3.3 v2.5" fill="none" stroke="#333" stroke-width="1.5" />
<path d="M260.8,70.5 h6 l-3,3.2 z" fill="#333" />
<rect x="178.8" y="82.5" width="9.5" height="10" fill="#eef0f5" stroke="#333" stroke-width="1.3" />
<path d="M179,87.5 h9 M180.5,85 h3 l1.5,-1.2 M185,85 h3 M181,90 h2 M183,88.8 v2.4 M184.6,88.8 v2.4 M184.6,90 h3.4" fill="none" stroke="#333" stroke-width="0.9" />
<path d="M188,92.8 h3.5 v2.4" fill="none" stroke="#333" stroke-width="1.5" />
<path d="M188.5,94.7 h6 l-3,3.2 z" fill="#333" />
<rect x="214.5" y="87.5" width="14" height="10" fill="none" stroke="#333" stroke-width="1.4" stroke-dasharray="2.2,1.6"/>
<circle cx="221.5" cy="92.5" r="3" fill="#e6e8ee" stroke="#333" stroke-width="1.2" />
<line x1="216.5" y1="92.5" x2="218.5" y2="92.5" stroke="#333" stroke-width="1.1" shape-rendering="crispEdges" />
<line x1="224.5" y1="92.5" x2="226.5" y2="92.5" stroke="#333" stroke-width="1.1" shape-rendering="crispEdges" />
<path d="M218,82.5 h3.5 v3" fill="none" stroke="#333" stroke-width="1.4" />
<path d="M218.7,85 h5.6 l-2.8,3 z" fill="#333" />
<path d="M250.5,85.5 h3 M254,82.5 l2.5,2.5 h5.5 M254.5,86 v4 h7 v5 M256,97.5 h-2.5 M257.5,94.5 l2.5,3 h6" fill="none" stroke="#333" stroke-width="1.2" stroke-dasharray="3,1.2"/>
<circle cx="311.3" cy="68" r="9.3" fill="url(#g21)" stroke="#3a3a3a" stroke-width="1.3" />
<line x1="298" y1="68" x2="302" y2="68" stroke="#3a3a3a" stroke-width="1.3" shape-rendering="crispEdges" />
<line x1="320.6" y1="68" x2="324" y2="68" stroke="#3a3a3a" stroke-width="1.3" shape-rendering="crispEdges" />
<g transform="translate(313.5,86.5) scale(1.05)" >
<path d="M0,0 l1.2,-3.6 l7.5,-7.5 l2.6,2.6 l-7.5,7.5 z" fill="#f0c040" stroke="#5a4210" stroke-width="0.9" />
<path d="M0,0 l1.2,-3.6 l2.6,2.6 z" fill="#f2dcb0" stroke="#5a4210" stroke-width="0.7" />
<path d="M8.7,-11.1 l1.3,-1.3 l2.6,2.6 l-1.3,1.3 z" fill="#d87070" stroke="#5a4210" stroke-width="0.7" />
</g>
<text x="300.7" y="104.6" font-size="11.8" fill="#363636" stroke="#363636" stroke-width="0.27" >編輯</text>
<path d="M310.0,111.9 h5 l-2.5,3 z" fill="#3a3a3a" />
<rect x="337.5" y="55.5" width="119" height="21" fill="url(#g27)" stroke="#cdcdcd" stroke-width="1" shape-rendering="crispEdges" />
<rect x="361" y="56.5" width="1" height="19" fill="#d4d4d4" shape-rendering="crispEdges" />
<rect x="385" y="56.5" width="1" height="19" fill="#d4d4d4" shape-rendering="crispEdges" />
<rect x="397" y="56.5" width="1" height="19" fill="#d4d4d4" shape-rendering="crispEdges" />
<rect x="421" y="56.5" width="1" height="19" fill="#d4d4d4" shape-rendering="crispEdges" />
<rect x="445" y="56.5" width="1" height="19" fill="#d4d4d4" shape-rendering="crispEdges" />
<path d="M388.5,64.8 h5 l-2.5,3 z" fill="#333" />
<path d="M448.5,64.8 h5 l-2.5,3 z" fill="#333" />
<rect x="337.5" y="79.5" width="119" height="21" fill="url(#g28)" stroke="#cdcdcd" stroke-width="1" shape-rendering="crispEdges" />
<rect x="361" y="80.5" width="1" height="19" fill="#d4d4d4" shape-rendering="crispEdges" />
<rect x="385" y="80.5" width="1" height="19" fill="#d4d4d4" shape-rendering="crispEdges" />
<rect x="397" y="80.5" width="1" height="19" fill="#d4d4d4" shape-rendering="crispEdges" />
<rect x="421" y="80.5" width="1" height="19" fill="#d4d4d4" shape-rendering="crispEdges" />
<rect x="445" y="80.5" width="1" height="19" fill="#d4d4d4" shape-rendering="crispEdges" />
<path d="M388.5,88.8 h5 l-2.5,3 z" fill="#333" />
<path d="M448.5,88.8 h5 l-2.5,3 z" fill="#333" />
<rect x="337.5" y="103.5" width="71" height="21" fill="url(#g29)" stroke="#cdcdcd" stroke-width="1" shape-rendering="crispEdges" />
<rect x="361" y="104.5" width="1" height="19" fill="#d4d4d4" shape-rendering="crispEdges" />
<rect x="373" y="104.5" width="1" height="19" fill="#d4d4d4" shape-rendering="crispEdges" />
<rect x="397" y="104.5" width="1" height="19" fill="#d4d4d4" shape-rendering="crispEdges" />
<path d="M364.5,112.8 h5 l-2.5,3 z" fill="#333" />
<path d="M400.5,112.8 h5 l-2.5,3 z" fill="#333" />
<circle cx="348.6" cy="62.5" r="3.5" fill="url(#g21)" stroke="#333" stroke-width="1.2" />
<line x1="341" y1="62.5" x2="345" y2="62.5" stroke="#333" stroke-width="1.2" shape-rendering="crispEdges" />
<line x1="352.2" y1="62.5" x2="355.5" y2="62.5" stroke="#333" stroke-width="1.2" shape-rendering="crispEdges" />
<path d="M350.5,67.5 l6,6 M356.5,67.5 l-6,6" fill="none" stroke="#d42020" stroke-width="2.2" stroke-dasharray="1.6,0.5"/>
<g transform="translate(370.4,65.4) scale(1.0)" >
<path d="M-7,0 h14 M0,-7 v14" fill="none" stroke="#a81010" stroke-width="1.3" />
<path d="M-7,0 l3,-2.6 v5.2 z" fill="#a81010" />
<path d="M7,0 l-3,-2.6 v5.2 z" fill="#a81010" />
<path d="M0,-7 l-2.6,3 h5.2 z" fill="#a81010" />
<path d="M0,7 l-2.6,-3 h5.2 z" fill="#a81010" />
</g>
<rect x="368.9" y="63.9" width="3" height="3" fill="#fff" stroke="#a81010" stroke-width="1" />
<path d="M401,63 h9.5 M403.2,59.3 l5,7.4 M401,70 h3.3 M404.8,67.3 v5.4 M407.2,67.3 v5.4 M407.7,70 h3.3" fill="none" stroke="#333" stroke-width="1.15" />
<path d="M412.5,62.8 h1.5 q3.6,0 3.6,3.6 q0,3.6 -3.6,3.6 h-1.5" fill="none" stroke="#333" stroke-width="1.15" />
<path d="M413.8,60.6 l-2.6,2.2 l2.6,2.2 z M413.8,67.8 l-2.6,2.2 l2.6,2.2 z" fill="#333" />
<path d="M424,58.5 h12 q3,0 3,3 v5 h-15 z" fill="url(#g30)" stroke="#333" stroke-width="1.2" />
<path d="M424,63.3 h15" fill="none" stroke="#333" stroke-width="1" />
<path d="M427,60.8 h2 M430.5,60.8 h2 M434,60.8 h2" fill="none" stroke="#333" stroke-width="1" />
<path d="M431.5,68.5 v5.2 h-3.2 z" fill="#f4f4f4" stroke="#333" stroke-width="0.9" />
<path d="M434.7,68.5 v5.2 h3.4 z" fill="#7ec0f0" stroke="#1f6ab0" stroke-width="0.9" />
<line x1="433.1" y1="67.3" x2="433.1" y2="74.3" stroke="#333" stroke-width="1" shape-rendering="crispEdges" />
<circle cx="347" cy="85.3" r="3.2" fill="url(#g21)" stroke="#333" stroke-width="1.15" />
<line x1="341" y1="85.3" x2="343.8" y2="85.3" stroke="#333" stroke-width="1.1" shape-rendering="crispEdges" />
<line x1="350.2" y1="85.3" x2="352" y2="85.3" stroke="#333" stroke-width="1.1" shape-rendering="crispEdges" />
<path d="M352,84 h3.6 v5" fill="none" stroke="#333" stroke-width="1.2" />
<path d="M353.1,88.4 h5 l-2.5,3 z" fill="#333" />
<circle cx="351.6" cy="94" r="3.2" fill="url(#g21)" stroke="#333" stroke-width="1.15" />
<line x1="346" y1="94" x2="348.4" y2="94" stroke="#333" stroke-width="1.1" shape-rendering="crispEdges" />
<line x1="354.8" y1="94" x2="357" y2="94" stroke="#333" stroke-width="1.1" shape-rendering="crispEdges" />
<path d="M363.5,84 l3.5,-1.6 l5.5,1.8 l1,2.6 l-4,3 z" fill="url(#g21)" stroke="#333" stroke-width="1" />
<path d="M365.5,86.5 l5,6" fill="none" stroke="#333" stroke-width="1.1" />
<circle cx="371.5" cy="93.5" r="3.7" fill="url(#g21)" stroke="#333" stroke-width="1.15" />
<line x1="365" y1="93.5" x2="367.8" y2="93.5" stroke="#333" stroke-width="1.1" shape-rendering="crispEdges" />
<line x1="375.2" y1="93.5" x2="378.5" y2="93.5" stroke="#333" stroke-width="1.1" shape-rendering="crispEdges" />
<path d="M373.5,83.5 q3,-2 5,0.5 M379,87.5 q-3,2 -5,-0.5" fill="none" stroke="#22a022" stroke-width="1.4" />
<path d="M377.5,82 l2,2.8 l-3.2,0.4 z M375,89 l-2,-2.8 l3.2,-0.4 z" fill="#22a022" />
<rect x="402" y="88.3" width="8.5" height="6.7" fill="url(#g22)" stroke="#333" stroke-width="1.15" />
<circle cx="402.4" cy="95.2" r="1.5" fill="#fff" stroke="#333" stroke-width="1" />
<circle cx="413" cy="94" r="3" fill="url(#g21)" stroke="#333" stroke-width="1.15" />
<path d="M410.5,84 h2 q3,0 3,2.6 q0,2.6 -3,2.6 h-1.5" fill="none" stroke="#333" stroke-width="1.1" />
<path d="M411.5,82 l-2.4,2 l2.4,2 z M412,87.2 l-2.4,2 l2.4,2 z" fill="#333" />
<path d="M423.5,92 v-7.5 l2,-2 h7.5 v5" fill="url(#g22)" stroke="#333" stroke-width="1.15" />
<path d="M423.5,92 h5" fill="none" stroke="#333" stroke-width="1.15" />
<path d="M429.5,88.5 l8,9 M437.5,88.5 l-8,9" fill="none" stroke="#333" stroke-width="1.4" />
<path d="M428.6,87.5 l3.4,0.6 l-2.6,2.6 z M438.4,87.5 l-3.4,0.6 l2.6,2.6 z" fill="#333" />
<rect x="339.8" y="106.8" width="10" height="9.5" fill="#fafafa" stroke="#333" stroke-width="1.1" />
<path d="M341.5,109.5 h3 M341.5,113 h2" fill="none" stroke="#333" stroke-width="0.9" />
<path d="M351.5,105.5 h2.5 v2.5" fill="none" stroke="#333" stroke-width="1" />
<rect x="344.8" y="111" width="10.2" height="10.5" fill="#8ecdf2" stroke="#1f6ab0" stroke-width="1.2" />
<path d="M346,114.5 h8 M346,118 h8 M349,113 v3 M351.5,116.5 v3" fill="none" stroke="#1a4e8c" stroke-width="1" />
<path d="M375.5,107.5 q1,-1 3,-0.5 h4.5 l6,5" fill="none" stroke="#333" stroke-width="1.1" />
<path d="M375.2,105.5 l-0.4,3.4 l3,-1.2 z" fill="#333" />
<circle cx="378" cy="114" r="4.2" fill="#fff1a8" opacity="0.7"/>
<circle cx="378" cy="114" r="2.8" fill="#f8d23a" stroke="#b08a10" stroke-width="0.8" />
<rect x="376.8" y="117.2" width="2.4" height="2.6" fill="#f4f4f4" stroke="#888" stroke-width="0.6" />
<g transform="translate(386.5,117.5) scale(0.6)" >
<path d="M-7,0 h14 M0,-7 v14" fill="none" stroke="#111" stroke-width="1.3" />
<path d="M-7,0 l3,-2.6 v5.2 z" fill="#111" />
<path d="M7,0 l-3,-2.6 v5.2 z" fill="#111" />
<path d="M0,-7 l-2.6,3 h5.2 z" fill="#111" />
<path d="M0,7 l-2.6,-3 h5.2 z" fill="#111" />
</g>
<g transform="translate(485,72) scale(1.0)" >
<path d="M-12.5,-11.5 L-10,-11.5 M-9.5,9.5 L-11.5,11" fill="none" stroke="#9c9c9c" stroke-width="2.6" stroke-linecap="round"/>
<path d="M-11,-11.5 L1,-11.5 Q8.5,-11.5 8.3,-5 Q8,-0.5 1,3 Q-6,6.5 -9.5,9.5" fill="none" stroke="#a82424" stroke-width="3.7" stroke-linecap="butt"/>
<path d="M-11,-11.5 L1,-11.5 Q8.5,-11.5 8.3,-5 Q8,-0.5 1,3 Q-6,6.5 -9.5,9.5" fill="none" stroke="#e85050" stroke-width="2.5" stroke-linecap="butt"/>
<path d="M-10,-12.2 L1,-12.2 Q7,-12 7.6,-6" fill="none" stroke="#f8b0b0" stroke-width="0.9" />
</g>
<path d="M492,80 h5.5 v5" fill="none" stroke="#333" stroke-width="1.7" />
<path d="M494.5,84.5 h6 l-3,3.2 z" fill="#333" />
<text x="474.5" y="104.6" font-size="11.8" fill="#363636" stroke="#363636" stroke-width="0.27" >配線</text>
<path d="M483.8,111.9 h5 l-2.5,3 z" fill="#3a3a3a" />
<rect x="513.5" y="58.5" width="29.5" height="29" fill="url(#g31)" stroke="#333" stroke-width="1.6" rx="1" />
<line x1="516.5" y1="63.7" x2="540" y2="63.7" stroke="#8a8a8a" stroke-width="2.2" />
<line x1="519.5" y1="63.7" x2="537" y2="63.7" stroke="#a02020" stroke-width="3.2" />
<line x1="519.5" y1="63.7" x2="537" y2="63.7" stroke="#e84848" stroke-width="2" />
<line x1="516.5" y1="72.7" x2="540" y2="72.7" stroke="#8a8a8a" stroke-width="2.2" />
<line x1="519.5" y1="72.7" x2="537" y2="72.7" stroke="#1a6a1a" stroke-width="3.2" />
<line x1="519.5" y1="72.7" x2="537" y2="72.7" stroke="#30a830" stroke-width="2" />
<line x1="516.5" y1="81.7" x2="540" y2="81.7" stroke="#8a8a8a" stroke-width="2.2" />
<line x1="519.5" y1="81.7" x2="537" y2="81.7" stroke="#1a5a9a" stroke-width="3.2" />
<line x1="519.5" y1="81.7" x2="537" y2="81.7" stroke="#3a8ee0" stroke-width="2" />
<text x="522.1" y="104.6" font-size="11.8" fill="#363636" stroke="#363636" stroke-width="0.27" >多</text>
<text x="516.2" y="120.8" font-size="11.8" fill="#363636" stroke="#363636" stroke-width="0.27" >母線</text>
<g transform="translate(568,72) scale(1.0)" >
<path d="M-12.5,-11.5 L-10,-11.5 M-9.5,9.5 L-11.5,11" fill="none" stroke="#9c9c9c" stroke-width="2.6" stroke-linecap="round"/>
<path d="M-11,-11.5 L1,-11.5 Q8.5,-11.5 8.3,-5 Q8,-0.5 1,3 Q-6,6.5 -9.5,9.5" fill="none" stroke="#a82424" stroke-width="3.7" stroke-linecap="butt"/>
<path d="M-11,-11.5 L1,-11.5 Q8.5,-11.5 8.3,-5 Q8,-0.5 1,3 Q-6,6.5 -9.5,9.5" fill="none" stroke="#e85050" stroke-width="2.5" stroke-linecap="butt"/>
<path d="M-10,-12.2 L1,-12.2 Q7,-12 7.6,-6" fill="none" stroke="#f8b0b0" stroke-width="0.9" />
</g>
<path d="M561,79 h10 M561,83 h10 M564,76 v10 M568,76 v10" fill="none" stroke="#222" stroke-width="1.2" />
<path d="M576,80 h5 v4.5" fill="none" stroke="#333" stroke-width="1.7" />
<path d="M578,84.0 h6 l-3,3.2 z" fill="#333" />
<text x="558.2" y="104.6" font-size="11.8" fill="#363636" stroke="#363636" stroke-width="0.27" >配線</text>
<text x="558.2" y="120.8" font-size="11.8" fill="#363636" stroke="#363636" stroke-width="0.27" >號碼</text>
<path d="M584.8,109.0 h5 l-2.5,3 z" fill="#3a3a3a" />
<g transform="translate(614,72) scale(1.0)" >
<path d="M-12.5,-11.5 L-10,-11.5 M-9.5,9.5 L-11.5,11" fill="none" stroke="#9c9c9c" stroke-width="2.6" stroke-linecap="round"/>
<path d="M-11,-11.5 L1,-11.5 Q8.5,-11.5 8.3,-5 Q8,-0.5 1,3 Q-6,6.5 -9.5,9.5" fill="none" stroke="#a82424" stroke-width="3.7" stroke-linecap="butt"/>
<path d="M-11,-11.5 L1,-11.5 Q8.5,-11.5 8.3,-5 Q8,-0.5 1,3 Q-6,6.5 -9.5,9.5" fill="none" stroke="#e85050" stroke-width="2.5" stroke-linecap="butt"/>
<path d="M-10,-12.2 L1,-12.2 Q7,-12 7.6,-6" fill="none" stroke="#f8b0b0" stroke-width="0.9" />
</g>
<circle cx="616" cy="82" r="6.3" fill="url(#g21)" stroke="#333" stroke-width="1.3" />
<path d="M616.5,81.5 h8.5" fill="none" stroke="#111" stroke-width="1.6" />
<path d="M624,78.3 l4.5,3.2 l-4.5,3.2 z" fill="#111" />
<text x="603.9" y="104.6" font-size="11.8" fill="#363636" stroke="#363636" stroke-width="0.27" >來源</text>
<text x="603.9" y="120.8" font-size="11.8" fill="#363636" stroke="#363636" stroke-width="0.27" >箭頭</text>
<path d="M630.5,109.0 h5 l-2.5,3 z" fill="#3a3a3a" />
<rect x="640" y="55.5" width="72" height="21" fill="url(#g32)" stroke="#cdcdcd" stroke-width="1" />
<rect x="664" y="56.5" width="1" height="19" fill="#d4d4d4" shape-rendering="crispEdges" />
<rect x="676" y="56.5" width="1" height="19" fill="#d4d4d4" shape-rendering="crispEdges" />
<rect x="700" y="56.5" width="1" height="19" fill="#d4d4d4" shape-rendering="crispEdges" />
<path d="M667.5,64.8 h5 l-2.5,3 z" fill="#333" />
<path d="M703.5,64.8 h5 l-2.5,3 z" fill="#333" />
<rect x="640" y="79.5" width="72" height="21" fill="url(#g33)" stroke="#cdcdcd" stroke-width="1" />
<rect x="664" y="80.5" width="1" height="19" fill="#d4d4d4" shape-rendering="crispEdges" />
<rect x="676" y="80.5" width="1" height="19" fill="#d4d4d4" shape-rendering="crispEdges" />
<rect x="700" y="80.5" width="1" height="19" fill="#d4d4d4" shape-rendering="crispEdges" />
<path d="M667.5,88.8 h5 l-2.5,3 z" fill="#333" />
<path d="M703.5,88.8 h5 l-2.5,3 z" fill="#333" />
<path d="M643.5,59 v12 M648.0,59 v12 M643.5,60.5 h4.5 M643.5,63.5 h4.5 M643.5,66.5 h4.5 M643.5,69.5 h4.5" fill="none" stroke="#333" stroke-width="1.1" />
<path d="M650.5,67.5 h3.3 v2.3" fill="none" stroke="#333" stroke-width="1.4" />
<path d="M650.8,69.3 h6 l-3,3.2 z" fill="#333" />
<path d="M677.5,66 h3 M691,66 h3" fill="none" stroke="#8a8a8a" stroke-width="1.6" />
<path d="M680.5,66 h4 M687,66 h4" fill="none" stroke="#d02828" stroke-width="1.6" />
<path d="M684.3,70.5 l4,-9" fill="none" stroke="#222" stroke-width="1.3" />
<path d="M648.5,83.5 h4.5 M648.5,85.5 h4.5 M650,82 v5 M652,82 v5" fill="none" stroke="#222" stroke-width="0.8" />
<path d="M642,94.5 h15 M648,94 l7,-6" fill="none" stroke="#d02828" stroke-width="1.5" />
<circle cx="648" cy="94.5" r="1.9" fill="#fff" stroke="#333" stroke-width="1" />
<path d="M678,86.5 h14 M685,86.5 v6" fill="none" stroke="#333" stroke-width="1.2" />
<circle cx="685" cy="86.5" r="1.6" fill="#c02020" />
<path d="M685.5,92 h5 v2" fill="none" stroke="#333" stroke-width="1.3" />
<path d="M687.5,93.5 h6 l-3,3.2 z" fill="#333" />
<g transform="translate(750.5,71.5) scale(1.0)" >
<path d="M-12.5,-11.5 L-10,-11.5 M-9.5,9.5 L-11.5,11" fill="none" stroke="#9c9c9c" stroke-width="2.6" stroke-linecap="round"/>
<path d="M-11,-11.5 L1,-11.5 Q8.5,-11.5 8.3,-5 Q8,-0.5 1,3 Q-6,6.5 -9.5,9.5" fill="none" stroke="#a82424" stroke-width="3.7" stroke-linecap="butt"/>
<path d="M-11,-11.5 L1,-11.5 Q8.5,-11.5 8.3,-5 Q8,-0.5 1,3 Q-6,6.5 -9.5,9.5" fill="none" stroke="#e85050" stroke-width="2.5" stroke-linecap="butt"/>
<path d="M-10,-12.2 L1,-12.2 Q7,-12 7.6,-6" fill="none" stroke="#f8b0b0" stroke-width="0.9" />
</g>
<path d="M744,79.5 h9.5 M744,83.5 h9.5 M746.8,76.5 v10 M750.5,76.5 v10" fill="none" stroke="#222" stroke-width="1.2" />
<g transform="translate(754,87.5) scale(1.15)" >
<path d="M0,0 l1.2,-3.6 l7.5,-7.5 l2.6,2.6 l-7.5,7.5 z" fill="#f0c040" stroke="#5a4210" stroke-width="0.9" />
<path d="M0,0 l1.2,-3.6 l2.6,2.6 z" fill="#f2dcb0" stroke="#5a4210" stroke-width="0.7" />
<path d="M8.7,-11.1 l1.3,-1.3 l2.6,2.6 l-1.3,1.3 z" fill="#d87070" stroke="#5a4210" stroke-width="0.7" />
</g>
<text x="728.9" y="104.6" font-size="11.8" fill="#363636" stroke="#363636" stroke-width="0.27" >編輯配線</text>
<text x="740.7" y="120.8" font-size="11.8" fill="#363636" stroke="#363636" stroke-width="0.27" >號碼</text>
<path d="M780.0,109.0 h5 l-2.5,3 z" fill="#3a3a3a" />
<g transform="translate(803.5,70.5) scale(1.0)" >
<path d="M-12.5,-11.5 L-10,-11.5 M-9.5,9.5 L-11.5,11" fill="none" stroke="#9c9c9c" stroke-width="2.6" stroke-linecap="round"/>
<path d="M-11,-11.5 L1,-11.5 Q8.5,-11.5 8.3,-5 Q8,-0.5 1,3 Q-6,6.5 -9.5,9.5" fill="none" stroke="#a82424" stroke-width="3.7" stroke-linecap="butt"/>
<path d="M-11,-11.5 L1,-11.5 Q8.5,-11.5 8.3,-5 Q8,-0.5 1,3 Q-6,6.5 -9.5,9.5" fill="none" stroke="#e85050" stroke-width="2.5" stroke-linecap="butt"/>
<path d="M-10,-12.2 L1,-12.2 Q7,-12 7.6,-6" fill="none" stroke="#f8b0b0" stroke-width="0.9" />
</g>
<path d="M808,78 L805.5,87" fill="none" stroke="#7a1010" stroke-width="5" stroke-linecap="round"/>
<path d="M808,78 L805.5,87" fill="none" stroke="#e03838" stroke-width="3.4" stroke-linecap="round"/>
<path d="M817,78 L821,87" fill="none" stroke="#7a1010" stroke-width="5" stroke-linecap="round"/>
<path d="M817,78 L821,87" fill="none" stroke="#e03838" stroke-width="3.4" stroke-linecap="round"/>
<path d="M809,78.5 q-3,-5 -0.5,-9.5 q1,-1.5 2,0 l2,5 l2,-5 q1,-1.5 2,0 q2.5,4.5 -0.5,9.5 q-3.5,1.5 -7,0 z" fill="#e4e6ea" stroke="#444" stroke-width="1" />
<circle cx="812.5" cy="74.5" r="1" fill="#666" />
<text x="795.2" y="104.6" font-size="11.8" fill="#363636" stroke="#363636" stroke-width="0.27" >修剪</text>
<text x="795.2" y="120.8" font-size="11.8" fill="#363636" stroke="#363636" stroke-width="0.27" >配線</text>
<rect x="827.5" y="55.5" width="131" height="21" fill="url(#g34)" stroke="#cdcdcd" stroke-width="1" shape-rendering="crispEdges" />
<rect x="851" y="56.5" width="1" height="19" fill="#d4d4d4" shape-rendering="crispEdges" />
<rect x="875" y="56.5" width="1" height="19" fill="#d4d4d4" shape-rendering="crispEdges" />
<rect x="887" y="56.5" width="1" height="19" fill="#d4d4d4" shape-rendering="crispEdges" />
<rect x="911" y="56.5" width="1" height="19" fill="#d4d4d4" shape-rendering="crispEdges" />
<rect x="923" y="56.5" width="1" height="19" fill="#d4d4d4" shape-rendering="crispEdges" />
<rect x="946.5" y="56.5" width="1" height="19" fill="#d4d4d4" shape-rendering="crispEdges" />
<path d="M878.5,64.8 h5 l-2.5,3 z" fill="#333" />
<path d="M914.5,64.8 h5 l-2.5,3 z" fill="#333" />
<path d="M950.0,64.8 h5 l-2.5,3 z" fill="#333" />
<rect x="827.5" y="79.5" width="107.5" height="21" fill="url(#g35)" stroke="#cdcdcd" stroke-width="1" shape-rendering="crispEdges" />
<rect x="851" y="80.5" width="1" height="19" fill="#d4d4d4" shape-rendering="crispEdges" />
<rect x="875" y="80.5" width="1" height="19" fill="#d4d4d4" shape-rendering="crispEdges" />
<rect x="887" y="80.5" width="1" height="19" fill="#d4d4d4" shape-rendering="crispEdges" />
<rect x="911" y="80.5" width="1" height="19" fill="#d4d4d4" shape-rendering="crispEdges" />
<path d="M878.5,88.8 h5 l-2.5,3 z" fill="#333" />
<g transform="translate(838.5,64.5) scale(0.62,0.5)" >
<g transform="translate(0,0) scale(1.0)" >
<path d="M-12.5,-11.5 L-10,-11.5 M-9.5,9.5 L-11.5,11" fill="none" stroke="#9c9c9c" stroke-width="2.6" stroke-linecap="round"/>
<path d="M-11,-11.5 L1,-11.5 Q8.5,-11.5 8.3,-5 Q8,-0.5 1,3 Q-6,6.5 -9.5,9.5" fill="none" stroke="#a82424" stroke-width="3.7" stroke-linecap="butt"/>
<path d="M-11,-11.5 L1,-11.5 Q8.5,-11.5 8.3,-5 Q8,-0.5 1,3 Q-6,6.5 -9.5,9.5" fill="none" stroke="#e85050" stroke-width="2.5" stroke-linecap="butt"/>
<path d="M-10,-12.2 L1,-12.2 Q7,-12 7.6,-6" fill="none" stroke="#f8b0b0" stroke-width="0.9" />
</g>
</g>
<text x="832.5" y="73.5" font-size="8" fill="#222" font-weight="bold" >#</text>
<path d="M840.5,67.5 l5,5 M845.5,67.5 l-5,5" fill="none" stroke="#d42020" stroke-width="2" />
<path d="M854.5,59 v12 M859.0,59 v12 M854.5,60.5 h4.5 M854.5,63.5 h4.5 M854.5,66.5 h4.5 M854.5,69.5 h4.5" fill="none" stroke="#333" stroke-width="1.1" />
<path d="M864,67.5 v6 M861,70.5 h6" fill="none" stroke="#2a9a2a" stroke-width="2" />
<g transform="translate(898.5,64.5) scale(0.62,0.5)" >
<g transform="translate(0,0) scale(1.0)" >
<path d="M-12.5,-11.5 L-10,-11.5 M-9.5,9.5 L-11.5,11" fill="none" stroke="#9c9c9c" stroke-width="2.6" stroke-linecap="round"/>
<path d="M-11,-11.5 L1,-11.5 Q8.5,-11.5 8.3,-5 Q8,-0.5 1,3 Q-6,6.5 -9.5,9.5" fill="none" stroke="#a82424" stroke-width="3.7" stroke-linecap="butt"/>
<path d="M-11,-11.5 L1,-11.5 Q8.5,-11.5 8.3,-5 Q8,-0.5 1,3 Q-6,6.5 -9.5,9.5" fill="none" stroke="#e85050" stroke-width="2.5" stroke-linecap="butt"/>
<path d="M-10,-12.2 L1,-12.2 Q7,-12 7.6,-6" fill="none" stroke="#f8b0b0" stroke-width="0.9" />
</g>
</g>
<g transform="translate(897,74) scale(0.62)" >
<path d="M0,0 l1.2,-3.6 l7.5,-7.5 l2.6,2.6 l-7.5,7.5 z" fill="#f0c040" stroke="#5a4210" stroke-width="0.9" />
<path d="M0,0 l1.2,-3.6 l2.6,2.6 z" fill="#f2dcb0" stroke="#5a4210" stroke-width="0.7" />
<path d="M8.7,-11.1 l1.3,-1.3 l2.6,2.6 l-1.3,1.3 z" fill="#d87070" stroke="#5a4210" stroke-width="0.7" />
</g>
<g transform="translate(934.5,64.0) scale(0.62,0.5)" >
<g transform="translate(0,0) scale(1.0)" >
<path d="M-12.5,-11.5 L-10,-11.5 M-9.5,9.5 L-11.5,11" fill="none" stroke="#9c9c9c" stroke-width="2.6" stroke-linecap="round"/>
<path d="M-11,-11.5 L1,-11.5 Q8.5,-11.5 8.3,-5 Q8,-0.5 1,3 Q-6,6.5 -9.5,9.5" fill="none" stroke="#a82424" stroke-width="3.7" stroke-linecap="butt"/>
<path d="M-11,-11.5 L1,-11.5 Q8.5,-11.5 8.3,-5 Q8,-0.5 1,3 Q-6,6.5 -9.5,9.5" fill="none" stroke="#e85050" stroke-width="2.5" stroke-linecap="butt"/>
<path d="M-10,-12.2 L1,-12.2 Q7,-12 7.6,-6" fill="none" stroke="#f8b0b0" stroke-width="0.9" />
</g>
</g>
<text x="926.5" y="67" font-size="7.5" fill="#222" font-weight="bold" >#</text>
<text x="934.5" y="75" font-size="8" fill="#2e86d6" font-weight="bold" >#</text>
<path d="M938.5,63 v4" fill="none" stroke="#333" stroke-width="1" />
<path d="M936.8,66 h3.4 l-1.7,2.2 z" fill="#333" />
<g transform="translate(838.5,88.5) scale(0.62,0.5)" >
<g transform="translate(0,0) scale(1.0)" >
<path d="M-12.5,-11.5 L-10,-11.5 M-9.5,9.5 L-11.5,11" fill="none" stroke="#9c9c9c" stroke-width="2.6" stroke-linecap="round"/>
<path d="M-11,-11.5 L1,-11.5 Q8.5,-11.5 8.3,-5 Q8,-0.5 1,3 Q-6,6.5 -9.5,9.5" fill="none" stroke="#a82424" stroke-width="3.7" stroke-linecap="butt"/>
<path d="M-11,-11.5 L1,-11.5 Q8.5,-11.5 8.3,-5 Q8,-0.5 1,3 Q-6,6.5 -9.5,9.5" fill="none" stroke="#e85050" stroke-width="2.5" stroke-linecap="butt"/>
<path d="M-10,-12.2 L1,-12.2 Q7,-12 7.6,-6" fill="none" stroke="#f8b0b0" stroke-width="0.9" />
</g>
</g>
<text x="830.5" y="89" font-size="8" fill="#222" font-weight="bold" >#</text>
<g transform="translate(844,94.5) scale(0.55)" >
<path d="M-7,0 h14 M0,-7 v14" fill="none" stroke="#222" stroke-width="1.3" />
<path d="M-7,0 l3,-2.6 v5.2 z" fill="#222" />
<path d="M7,0 l-3,-2.6 v5.2 z" fill="#222" />
<path d="M0,-7 l-2.6,3 h5.2 z" fill="#222" />
<path d="M0,7 l-2.6,-3 h5.2 z" fill="#222" />
</g>
<g transform="translate(863.5,87.5) scale(0.62,0.5)" >
<g transform="translate(0,0) scale(1.0)" >
<path d="M-12.5,-11.5 L-10,-11.5 M-9.5,9.5 L-11.5,11" fill="none" stroke="#9c9c9c" stroke-width="2.6" stroke-linecap="round"/>
<path d="M-11,-11.5 L1,-11.5 Q8.5,-11.5 8.3,-5 Q8,-0.5 1,3 Q-6,6.5 -9.5,9.5" fill="none" stroke="#a82424" stroke-width="3.7" stroke-linecap="butt"/>
<path d="M-11,-11.5 L1,-11.5 Q8.5,-11.5 8.3,-5 Q8,-0.5 1,3 Q-6,6.5 -9.5,9.5" fill="none" stroke="#e85050" stroke-width="2.5" stroke-linecap="butt"/>
<path d="M-10,-12.2 L1,-12.2 Q7,-12 7.6,-6" fill="none" stroke="#f8b0b0" stroke-width="0.9" />
</g>
</g>
<path d="M855,96.5 h5 M866,96.5 h5" fill="none" stroke="#222" stroke-width="1.3" />
<path d="M855,96.5 l2.8,-2.4 v4.8 z M871,96.5 l-2.8,-2.4 v4.8 z" fill="#222" />
<g transform="translate(899.5,88.5) scale(0.62,0.5)" >
<g transform="translate(0,0) scale(1.0)" >
<path d="M-12.5,-11.5 L-10,-11.5 M-9.5,9.5 L-11.5,11" fill="none" stroke="#9c9c9c" stroke-width="2.6" stroke-linecap="round"/>
<path d="M-11,-11.5 L1,-11.5 Q8.5,-11.5 8.3,-5 Q8,-0.5 1,3 Q-6,6.5 -9.5,9.5" fill="none" stroke="#a82424" stroke-width="3.7" stroke-linecap="butt"/>
<path d="M-11,-11.5 L1,-11.5 Q8.5,-11.5 8.3,-5 Q8,-0.5 1,3 Q-6,6.5 -9.5,9.5" fill="none" stroke="#e85050" stroke-width="2.5" stroke-linecap="butt"/>
<path d="M-10,-12.2 L1,-12.2 Q7,-12 7.6,-6" fill="none" stroke="#f8b0b0" stroke-width="0.9" />
</g>
</g>
<text x="890.5" y="89" font-size="8" fill="#222" font-weight="bold" >#</text>
<path d="M897.5,92 v6 h-4 z" fill="#555" />
<path d="M900,92 v6 h3.5 z" fill="#3f8fd8" />
<line x1="898.8" y1="91" x2="898.8" y2="99" stroke="#333" stroke-width="0.8" shape-rendering="crispEdges" />
<path d="M914,87 h14 M914,94 h14" fill="none" stroke="#c02020" stroke-width="1.4" />
<text x="917.5" y="89" font-size="8" fill="#222" font-weight="bold" >#</text>
<text x="917.5" y="98.5" font-size="8" fill="#222" font-weight="bold" >#</text>
<path d="M928,84.5 q3.5,4.5 0,9" fill="none" stroke="#333" stroke-width="1.1" />
<path d="M926.5,92 l1.5,2.8 l1.8,-2.4 z" fill="#333" />
<rect x="992.5" y="58.5" width="21" height="24" fill="url(#g36)" stroke="#444" stroke-width="1.3" rx="1.5" />
<g transform="translate(1003,70.5) scale(0.78)" >
<path d="M-12.5,-11.5 L-10,-11.5 M-9.5,9.5 L-11.5,11" fill="none" stroke="#9c9c9c" stroke-width="2.6" stroke-linecap="round"/>
<path d="M-11,-11.5 L1,-11.5 Q8.5,-11.5 8.3,-5 Q8,-0.5 1,3 Q-6,6.5 -9.5,9.5" fill="none" stroke="#a82424" stroke-width="3.7" stroke-linecap="butt"/>
<path d="M-11,-11.5 L1,-11.5 Q8.5,-11.5 8.3,-5 Q8,-0.5 1,3 Q-6,6.5 -9.5,9.5" fill="none" stroke="#e85050" stroke-width="2.5" stroke-linecap="butt"/>
<path d="M-10,-12.2 L1,-12.2 Q7,-12 7.6,-6" fill="none" stroke="#f8b0b0" stroke-width="0.9" />
</g>
<path d="M1014,66 l-4.5,6.5 h3.5 l-2,6 l7,-8 h-3.5 l2.5,-4.5 z" fill="#f7b51e" stroke="#a06a08" stroke-width="0.8" />
<circle cx="1014.5" cy="82.5" r="3.4" fill="#f4f4f6" stroke="#444" stroke-width="1.1" />
<rect x="1002" y="80.5" width="3" height="3" fill="#fff" stroke="#333" stroke-width="1" />
<line x1="1005" y1="82" x2="1011" y2="82" stroke="#444" stroke-width="1" shape-rendering="crispEdges" />
<text x="976.8" y="104.6" font-size="11.8" fill="#363636" stroke="#363636" stroke-width="0.27" >符號建置器</text>
<path d="M1003.8,111.9 h5 l-2.5,3 z" fill="#3a3a3a" />
<rect x="1065.5" y="58.5" width="24" height="24" fill="url(#g37)" stroke="#444" stroke-width="1.3" rx="1.5" />
<rect x="1068.5" y="61.5" width="8" height="8" fill="url(#g38)" stroke="#555" stroke-width="1" shape-rendering="crispEdges" />
<rect x="1078.5" y="61.5" width="8" height="8" fill="url(#g39)" stroke="#555" stroke-width="1" shape-rendering="crispEdges" />
<rect x="1068.5" y="71.5" width="8" height="8" fill="url(#g40)" stroke="#555" stroke-width="1" shape-rendering="crispEdges" />
<rect x="1078.5" y="71.5" width="8" height="8" fill="url(#g41)" stroke="#555" stroke-width="1" shape-rendering="crispEdges" />
<g transform="translate(1081,87) scale(1.05)" >
<path d="M0,0 l1.2,-3.6 l7.5,-7.5 l2.6,2.6 l-7.5,7.5 z" fill="#f0c040" stroke="#5a4210" stroke-width="0.9" />
<path d="M0,0 l1.2,-3.6 l2.6,2.6 z" fill="#f2dcb0" stroke="#5a4210" stroke-width="0.7" />
<path d="M8.7,-11.1 l1.3,-1.3 l2.6,2.6 l-1.3,1.3 z" fill="#d87070" stroke="#5a4210" stroke-width="0.7" />
</g>
<text x="1050.5" y="104.6" font-size="11.8" fill="#363636" stroke="#363636" stroke-width="0.27" >圖示功能表</text>
<text x="1068.2" y="120.8" font-size="11.8" fill="#363636" stroke="#363636" stroke-width="0.27" >精靈</text>
<rect x="1121.5" y="58.5" width="21.5" height="26" fill="url(#g42)" stroke="#444" stroke-width="1.3" rx="1.5" />
<g transform="translate(1132,71) scale(0.78)" >
<path d="M-12.5,-11.5 L-10,-11.5 M-9.5,9.5 L-11.5,11" fill="none" stroke="#9c9c9c" stroke-width="2.6" stroke-linecap="round"/>
<path d="M-11,-11.5 L1,-11.5 Q8.5,-11.5 8.3,-5 Q8,-0.5 1,3 Q-6,6.5 -9.5,9.5" fill="none" stroke="#a82424" stroke-width="3.7" stroke-linecap="butt"/>
<path d="M-11,-11.5 L1,-11.5 Q8.5,-11.5 8.3,-5 Q8,-0.5 1,3 Q-6,6.5 -9.5,9.5" fill="none" stroke="#e85050" stroke-width="2.5" stroke-linecap="butt"/>
<path d="M-10,-12.2 L1,-12.2 Q7,-12 7.6,-6" fill="none" stroke="#f8b0b0" stroke-width="0.9" />
</g>
<rect x="1138.5" y="70.5" width="11" height="16" fill="#f6f7f9" stroke="#333" stroke-width="1.1" />
<rect x="1140.5" y="72.5" width="5" height="5" fill="#2a62b8" shape-rendering="crispEdges" />
<path d="M1140.5,80 h7 M1140.5,83 h7" fill="none" stroke="#333" stroke-width="0.9" />
<path d="M1147.5,73 v4" fill="none" stroke="#555" stroke-width="0.8" />
<text x="1124.5" y="104.6" font-size="11.8" fill="#363636" stroke="#363636" stroke-width="0.27" >圖面</text>
<text x="1124.5" y="120.8" font-size="11.8" fill="#363636" stroke="#363636" stroke-width="0.27" >性質</text>
<path d="M1151.1,109.0 h5 l-2.5,3 z" fill="#3a3a3a" />
<rect x="6.5" y="154.0" width="645.5" height="24" fill="none" stroke="#4c4c4c" stroke-width="1" />
<rect x="7" y="154.5" width="8" height="23" fill="#5a5a5a" shape-rendering="crispEdges" />
<rect x="9" y="157.5" width="1" height="1" fill="#2a2a2a" shape-rendering="crispEdges" />
<rect x="11" y="157.5" width="1" height="1" fill="#2a2a2a" shape-rendering="crispEdges" />
<rect x="9" y="159.5" width="1" height="1" fill="#2a2a2a" shape-rendering="crispEdges" />
<rect x="11" y="159.5" width="1" height="1" fill="#2a2a2a" shape-rendering="crispEdges" />
<rect x="9" y="161.5" width="1" height="1" fill="#2a2a2a" shape-rendering="crispEdges" />
<rect x="11" y="161.5" width="1" height="1" fill="#2a2a2a" shape-rendering="crispEdges" />
<rect x="9" y="163.5" width="1" height="1" fill="#2a2a2a" shape-rendering="crispEdges" />
<rect x="11" y="163.5" width="1" height="1" fill="#2a2a2a" shape-rendering="crispEdges" />
<rect x="9" y="165.5" width="1" height="1" fill="#2a2a2a" shape-rendering="crispEdges" />
<rect x="11" y="165.5" width="1" height="1" fill="#2a2a2a" shape-rendering="crispEdges" />
<rect x="9" y="167.5" width="1" height="1" fill="#2a2a2a" shape-rendering="crispEdges" />
<rect x="11" y="167.5" width="1" height="1" fill="#2a2a2a" shape-rendering="crispEdges" />
<rect x="9" y="169.5" width="1" height="1" fill="#2a2a2a" shape-rendering="crispEdges" />
<rect x="11" y="169.5" width="1" height="1" fill="#2a2a2a" shape-rendering="crispEdges" />
<rect x="9" y="171.5" width="1" height="1" fill="#2a2a2a" shape-rendering="crispEdges" />
<rect x="11" y="171.5" width="1" height="1" fill="#2a2a2a" shape-rendering="crispEdges" />
<rect x="15" y="154.5" width="636.5" height="23" fill="url(#g43)" shape-rendering="crispEdges" />
<g transform="translate(26,166) scale(1.2,1.0) translate(-26,-166)" >
<path d="M20,160 h8 l4,4 v9 h-12 z" fill="url(#g44)" stroke="#3a3a3a" stroke-width="1.2" />
<path d="M28,160 v4 h4" fill="#e8ebf2" stroke="#3a3a3a" stroke-width="1" />
</g>
<g transform="translate(49,166) scale(1.2,1.0) translate(-49,-166)" >
<path d="M42,171 v-10 h5 l1.5,1.5 h6 v3" fill="#eef0f5" stroke="#3a3a3a" stroke-width="1.2" />
<path d="M42,171 l3.5,-6 h11.5 l-3.5,6 z" fill="url(#g45)" stroke="#3a3a3a" stroke-width="1.2" />
</g>
<g transform="translate(72,166) scale(1.2,1.0) translate(-72,-166)" >
<rect x="65.5" y="159.5" width="13" height="13" fill="url(#g46)" stroke="#2e3340" stroke-width="1" rx="1.2" />
<rect x="68" y="160" width="8" height="5" fill="#eceff5" shape-rendering="crispEdges" />
<rect x="68" y="167" width="8" height="5" fill="#dfe3ec" shape-rendering="crispEdges" />
<rect x="69.5" y="168.5" width="2.5" height="2.5" fill="#4a5060" shape-rendering="crispEdges" />
</g>
<g transform="translate(101,166) scale(1.2,1.0) translate(-101,-166)" >
<rect x="97" y="159.5" width="8" height="5" fill="#f4f4f4" stroke="#3a3a3a" stroke-width="1.1" />
<rect x="93.5" y="164.0" width="15" height="7" fill="url(#g47)" stroke="#3a3a3a" stroke-width="1.1" rx="2" />
<rect x="96.5" y="168.5" width="9" height="4.5" fill="#ffffff" stroke="#3a3a3a" stroke-width="1.1" />
<line x1="98" y1="170.5" x2="104" y2="170.5" stroke="#808080" stroke-width="1" shape-rendering="crispEdges" />
</g>
<rect x="86" y="156.5" width="1.3" height="19" fill="#2a2a2a"/>
<g transform="translate(124,166) scale(1.17,1.04) translate(-124,-166)" >
<path d="M118,159.5 h7 l3,3 v9 h-10 z" fill="#fbfbfb" stroke="#3a3a3a" stroke-width="1.1" />
<circle cx="125.5" cy="168" r="3.2" fill="#e8f0fa" stroke="#3a3a3a" stroke-width="1.2" />
<line x1="128" y1="170.5" x2="130.5" y2="173" stroke="#3a3a3a" stroke-width="1.8" />
</g>
<g transform="translate(146,166) scale(1.17,1.04) translate(-146,-166)" >
<rect x="142" y="159.5" width="8" height="4.5" fill="#f4f4f4" stroke="#3a3a3a" stroke-width="1" />
<rect x="139.5" y="163.5" width="13" height="6" fill="url(#g48)" stroke="#3a3a3a" stroke-width="1" rx="1.5" />
<rect x="142" y="167.5" width="8" height="4" fill="#fff" stroke="#3a3a3a" stroke-width="1" />
<path d="M148.5,170.5 h4 v-2 l3.5,3 l-3.5,3 v-2 h-4 z" fill="#2a6fd0" />
</g>
<g transform="translate(170,166) scale(1.17,1.04) translate(-170,-166)" >
<path d="M163,165 l5,-4 l8,1 v8 l-5,4 l-8,-2 z" fill="#e6e8ee" stroke="#3a3a3a" stroke-width="1.1" />
<circle cx="172" cy="165" r="4.6" fill="#e8a040" stroke="#8a5a10" stroke-width="0.8" />
<path d="M168.5,163 q3,-3 6.5,0" fill="none" stroke="#38a048" stroke-width="1.6" />
<path d="M169,167 q3,2.5 6,0" fill="none" stroke="#3a7ad8" stroke-width="1.4" />
</g>
<rect x="184" y="156.5" width="1.3" height="19" fill="#2a2a2a"/>
<g transform="translate(199,166) scale(1.17,1.04) translate(-199,-166)" >
<path d="M193.5,159.5 l9,11 M204.5,159.5 l-9,11" fill="none" stroke="#3a3a3a" stroke-width="1.5" />
<circle cx="194.5" cy="171" r="2" fill="#fff" stroke="#3a3a3a" stroke-width="1.2" />
<circle cx="203.5" cy="171" r="2" fill="#fff" stroke="#3a3a3a" stroke-width="1.2" />
</g>
<g transform="translate(222,166) scale(1.17,1.04) translate(-222,-166)" >
<path d="M215.5,159.5 h6 l2.5,2.5 v8 h-8.5 z" fill="#fbfbfb" stroke="#3a3a3a" stroke-width="1.1" />
<path d="M219.5,163 h6 l2.5,2.5 v8 h-8.5 z" fill="#fbfbfb" stroke="#3a3a3a" stroke-width="1.1" />
</g>
<g transform="translate(245,166) scale(1.17,1.04) translate(-245,-166)" >
<rect x="238.5" y="160.5" width="10" height="11.5" fill="url(#g49)" stroke="#3a3a3a" stroke-width="1.1" rx="1" />
<rect x="241" y="159" width="5" height="2.6" fill="#c8c8c8" stroke="#3a3a3a" stroke-width="0.9" />
<path d="M243,164 h6 l2.5,2.5 v7 h-8.5 z" fill="#fbfbfb" stroke="#3a3a3a" stroke-width="1.1" />
</g>
<g transform="translate(268,166) scale(1.17,1.04) translate(-268,-166)" >
<rect x="261.5" y="159.5" width="11" height="10" fill="#f4f6fa" stroke="#3a3a3a" stroke-width="1.1" />
<rect x="263.5" y="161.5" width="4.5" height="4" fill="#2a62b8" shape-rendering="crispEdges" />
<path d="M269,162 h3 M269,164.5 h3" fill="none" stroke="#3a3a3a" stroke-width="0.9" />
<path d="M268,172.5 l2.5,-5 l4,2 z" fill="#e08a20" stroke="#7a4a0c" stroke-width="0.7" />
<path d="M271.5,167.5 l4.5,-5" fill="none" stroke="#8a5a20" stroke-width="2" />
</g>
<g transform="translate(291,166) scale(1.17,1.04) translate(-291,-166)" >
<rect x="285" y="165" width="9" height="6" fill="#eef0f4" stroke="#3a3a3a" stroke-width="1.1" />
<circle cx="286" cy="171.5" r="1.5" fill="#fff" stroke="#3a3a3a" stroke-width="0.9" />
<circle cx="295" cy="169.5" r="2.6" fill="#fff" stroke="#3a3a3a" stroke-width="1" />
<path d="M296,158.5 l-4,5.5 h3 l-1.5,4.5 l5.5,-6.5 h-3 l2,-3.5 z" fill="#f7a81e" stroke="#a0640a" stroke-width="0.6" />
</g>
<rect x="305" y="156.5" width="1.3" height="19" fill="#2a2a2a"/>
<path d="M314,165.5 l6,-5.5 v3.5 q8,0 8,8 v1.5 h-3 v-1.5 q0,-4.5 -5,-4.5 v3.5 z" fill="#f4f4f4" stroke="#3a3a3a" stroke-width="1.1" />
<path d="M336.0,165.0 h5 l-2.5,3 z" fill="#333" />
<path d="M364,165.5 l-6,-5.5 v3.5 q-8,0 -8,8 v1.5 h3 v-1.5 q0,-4.5 5,-4.5 v3.5 z" fill="#ececec" stroke="#b8b8b8" stroke-width="1" />
<path d="M372.0,165.0 h5 l-2.5,3 z" fill="#b0b0b0" />
<rect x="383" y="156.5" width="1.3" height="19" fill="#2a2a2a"/>
<g transform="translate(398,166) scale(1.17,1.04) translate(-398,-166)" >
<path d="M392,167 q1.5,-2 3,0.5 v-6.5 q1,-2 2.2,0 v-1.5 q1,-2 2.2,0 v1 q1,-2 2.2,0 v2 q1,-1.6 2.2,0 v7 q0,4 -3.5,5.5 h-5 q-2.5,-1.5 -3.3,-4.5 z" fill="#fdfdfd" stroke="#3a3a3a" stroke-width="1.1" />
</g>
<g transform="translate(422,166) scale(1.17,1.04) translate(-422,-166)" >
<circle cx="419" cy="164" r="4.6" fill="#f4f6fa" stroke="#3a3a3a" stroke-width="1.2" />
<path d="M419,161.5 v2.5 h2" fill="none" stroke="#3a3a3a" stroke-width="0.9" />
<circle cx="425" cy="170" r="2.6" fill="#eaf2fc" stroke="#3a3a3a" stroke-width="1.1" />
<line x1="427" y1="172" x2="429.5" y2="174.5" stroke="#3a3a3a" stroke-width="1.8" />
</g>
<g transform="translate(444,166) scale(1.17,1.04) translate(-444,-166)" >
<rect x="437" y="159.5" width="11" height="9" fill="#fbfbfb" stroke="#3a3a3a" stroke-width="1.1" />
<circle cx="446" cy="169" r="3.2" fill="#eaf2fc" stroke="#3a3a3a" stroke-width="1.2" />
<line x1="448.5" y1="171.5" x2="451" y2="174" stroke="#3a3a3a" stroke-width="1.8" />
<path d="M451.5,174.5 v-3 l-3,3 z" fill="#111" />
</g>
<g transform="translate(467,166) scale(1.17,1.04) translate(-467,-166)" >
<path d="M467,161 h-4 v-2 l-4,3.2 l4,3.2 v-2 h4 z" fill="#6c8ab8" stroke="#3a3a3a" stroke-width="0.8" />
<circle cx="468.5" cy="168.5" r="3.2" fill="#eaf2fc" stroke="#3a3a3a" stroke-width="1.2" />
<line x1="471" y1="171" x2="473.5" y2="173.5" stroke="#3a3a3a" stroke-width="1.8" />
</g>
<rect x="481" y="156.5" width="1.3" height="19" fill="#2a2a2a"/>
<g transform="translate(495.5,166) scale(1.0,1.0) translate(-495.5,-166)" >
<rect x="489.5" y="159" width="11" height="14" fill="#f6f7f9" stroke="#3a3a3a" stroke-width="1.1" />
<rect x="491.5" y="161" width="5" height="5" fill="#2a62b8" shape-rendering="crispEdges" />
<path d="M497.5,161.5 v4 M492,169.5 h6" fill="none" stroke="#3a3a3a" stroke-width="0.9" />
<path d="M492,169.5 l1.6,-1.2 v2.4 z" fill="#3a3a3a" />
</g>
<g transform="translate(518.5,166) scale(1.0,1.0) translate(-518.5,-166)" >
<rect x="511.5" y="159" width="3.5" height="14" fill="#e4e6ea" stroke="#3a3a3a" stroke-width="1" />
<rect x="516.5" y="159" width="9.5" height="14" fill="#f6f7f9" stroke="#3a3a3a" stroke-width="1" />
<rect x="518" y="160.5" width="2.4" height="2.4" fill="#fff" stroke="#555" stroke-width="0.8" />
<rect x="522" y="160.5" width="2.4" height="2.4" fill="#fff" stroke="#555" stroke-width="0.8" />
<rect x="518" y="164.5" width="2.4" height="2.4" fill="#fff" stroke="#555" stroke-width="0.8" />
<rect x="522" y="164.5" width="2.4" height="2.4" fill="#fff" stroke="#555" stroke-width="0.8" />
<rect x="518" y="168.5" width="2.4" height="2.4" fill="#fff" stroke="#555" stroke-width="0.8" />
<rect x="522" y="168.5" width="2.4" height="2.4" fill="#fff" stroke="#555" stroke-width="0.8" />
</g>
<g transform="translate(541.5,166) scale(1.0,1.0) translate(-541.5,-166)" >
<path d="M536.5,159 h10 v5 h-2.5 v9 h-7.5 z" fill="#f6f7f9" stroke="#3a3a3a" stroke-width="1.1" />
<rect x="538" y="163" width="1.6" height="1.6" fill="#999" shape-rendering="crispEdges" />
<rect x="541" y="163" width="1.6" height="1.6" fill="#999" shape-rendering="crispEdges" />
<rect x="538" y="166" width="1.6" height="1.6" fill="#999" shape-rendering="crispEdges" />
<rect x="541" y="166" width="1.6" height="1.6" fill="#999" shape-rendering="crispEdges" />
<rect x="538" y="169" width="1.6" height="1.6" fill="#999" shape-rendering="crispEdges" />
<rect x="541" y="169" width="1.6" height="1.6" fill="#999" shape-rendering="crispEdges" />
</g>
<g transform="translate(565,166) scale(1.0,1.0) translate(-565,-166)" >
<path d="M557.5,169 l7,-7 l9,5 l-7,6 z" fill="#f4f4f4" stroke="#3a3a3a" stroke-width="1" />
<path d="M557.5,171 l9,4 l7,-6" fill="none" stroke="#3a3a3a" stroke-width="1" />
<path d="M559,167 l6,-6.5 l7,4" fill="none" stroke="#777" stroke-width="0.9" />
</g>
<g transform="translate(588,166) scale(1.0,1.0) translate(-588,-166)" >
<path d="M583,160 q2,-2 4,0 q2,-2 4,0 q2,-2 4,0 v4 q-2,2 -4,0 v3 h-8 z" fill="none" stroke="#3a3a3a" stroke-width="1" stroke-dasharray="2,1"/>
<rect x="588" y="166" width="8" height="7.5" fill="#eef0f4" stroke="#3a3a3a" stroke-width="1" />
<path d="M589.5,168.5 h5 M589.5,171 h5" fill="none" stroke="#3a3a3a" stroke-width="0.8" />
<rect x="582" y="167" width="4" height="5" fill="#dfe2e8" stroke="#3a3a3a" stroke-width="0.9" />
</g>
<g transform="translate(610.5,166) scale(1.0,1.0) translate(-610.5,-166)" >
<rect x="605.5" y="159" width="10" height="14" fill="#f6f7f9" stroke="#3a3a3a" stroke-width="1.1" rx="1" />
<rect x="607.5" y="161" width="6" height="3" fill="#dfe4ee" stroke="#555" stroke-width="0.7" />
<rect x="607.3" y="166.2" width="1.3" height="1.2" fill="#555" shape-rendering="crispEdges" />
<rect x="609.6999999999999" y="166.2" width="1.3" height="1.2" fill="#555" shape-rendering="crispEdges" />
<rect x="612.0999999999999" y="166.2" width="1.3" height="1.2" fill="#555" shape-rendering="crispEdges" />
<rect x="607.3" y="168.39999999999998" width="1.3" height="1.2" fill="#555" shape-rendering="crispEdges" />
<rect x="609.6999999999999" y="168.39999999999998" width="1.3" height="1.2" fill="#555" shape-rendering="crispEdges" />
<rect x="612.0999999999999" y="168.39999999999998" width="1.3" height="1.2" fill="#555" shape-rendering="crispEdges" />
<rect x="607.3" y="170.6" width="1.3" height="1.2" fill="#555" shape-rendering="crispEdges" />
<rect x="609.6999999999999" y="170.6" width="1.3" height="1.2" fill="#555" shape-rendering="crispEdges" />
<rect x="612.0999999999999" y="170.6" width="1.3" height="1.2" fill="#555" shape-rendering="crispEdges" />
</g>
<rect x="625" y="156.5" width="1.3" height="19" fill="#2a2a2a"/>
<rect x="634" y="159.5" width="13" height="13" fill="url(#g50)" stroke="#555" stroke-width="1.2" rx="0.8" />
<text x="640.5" y="170.5" font-size="11.5" fill="#3a3a3a" text-anchor="middle" font-weight="bold" >?</text>
<rect x="653.0" y="154.0" width="599" height="24" fill="none" stroke="#4c4c4c" stroke-width="1" />
<rect x="653.5" y="154.5" width="8" height="23" fill="#5a5a5a" shape-rendering="crispEdges" />
<rect x="655.5" y="157.5" width="1" height="1" fill="#2a2a2a" shape-rendering="crispEdges" />
<rect x="657.5" y="157.5" width="1" height="1" fill="#2a2a2a" shape-rendering="crispEdges" />
<rect x="655.5" y="159.5" width="1" height="1" fill="#2a2a2a" shape-rendering="crispEdges" />
<rect x="657.5" y="159.5" width="1" height="1" fill="#2a2a2a" shape-rendering="crispEdges" />
<rect x="655.5" y="161.5" width="1" height="1" fill="#2a2a2a" shape-rendering="crispEdges" />
<rect x="657.5" y="161.5" width="1" height="1" fill="#2a2a2a" shape-rendering="crispEdges" />
<rect x="655.5" y="163.5" width="1" height="1" fill="#2a2a2a" shape-rendering="crispEdges" />
<rect x="657.5" y="163.5" width="1" height="1" fill="#2a2a2a" shape-rendering="crispEdges" />
<rect x="655.5" y="165.5" width="1" height="1" fill="#2a2a2a" shape-rendering="crispEdges" />
<rect x="657.5" y="165.5" width="1" height="1" fill="#2a2a2a" shape-rendering="crispEdges" />
<rect x="655.5" y="167.5" width="1" height="1" fill="#2a2a2a" shape-rendering="crispEdges" />
<rect x="657.5" y="167.5" width="1" height="1" fill="#2a2a2a" shape-rendering="crispEdges" />
<rect x="655.5" y="169.5" width="1" height="1" fill="#2a2a2a" shape-rendering="crispEdges" />
<rect x="657.5" y="169.5" width="1" height="1" fill="#2a2a2a" shape-rendering="crispEdges" />
<rect x="655.5" y="171.5" width="1" height="1" fill="#2a2a2a" shape-rendering="crispEdges" />
<rect x="657.5" y="171.5" width="1" height="1" fill="#2a2a2a" shape-rendering="crispEdges" />
<rect x="661.5" y="154.5" width="590" height="23" fill="url(#g43)" shape-rendering="crispEdges" />
<text x="664.5" y="171" font-size="15" fill="#3a3a3a" >A</text>
<path d="M672,172 l3,-4 l3,2 z" fill="#e08a20" stroke="#7a4a0c" stroke-width="0.6" />
<path d="M676,168 l5,-6" fill="none" stroke="#8a5a20" stroke-width="2" />
<rect x="686" y="155.5" width="118" height="21" fill="url(#g51)" stroke="#9c9c9c" stroke-width="1" rx="2.5" />
<path d="M793.5,164.5 h7 l-3.5,4 z" fill="#111" />
<text x="704" y="170" font-size="12" fill="#111" textLength="51" lengthAdjust="spacingAndGlyphs" >Standard</text>
<rect x="806" y="156.5" width="1.3" height="19" fill="#2a2a2a"/>
<path d="M814,161.5 v11 M827,161.5 v11 M814,170 h13" fill="none" stroke="#333" stroke-width="1" />
<path d="M814,170 l2.4,-1.5 v3 z M827,170 l-2.4,-1.5 v3 z" fill="#333" />
<path d="M817,167 l3,-4 l3,2 z" fill="#e08a20" stroke="#7a4a0c" stroke-width="0.6" />
<path d="M821.5,163 l5,-5.5" fill="none" stroke="#8a5a20" stroke-width="2" />
<rect x="835" y="155.5" width="117.5" height="21" fill="url(#g52)" stroke="#9c9c9c" stroke-width="1" rx="2.5" />
<path d="M942.0,164.5 h7 l-3.5,4 z" fill="#111" />
<text x="853" y="170" font-size="12" fill="#111" textLength="51" lengthAdjust="spacingAndGlyphs" >Standard</text>
<rect x="954.5" y="156.5" width="1.3" height="19" fill="#2a2a2a"/>
<rect x="963.5" y="160" width="12" height="11" fill="#fbfbfb" stroke="#333" stroke-width="1.1" />
<path d="M963.5,163.5 h12 M963.5,167 h12 M967.5,160 v11 M971.5,160 v11" fill="none" stroke="#555" stroke-width="0.8" />
<path d="M969,173.5 l3,-4 l3,2 z" fill="#e08a20" stroke="#7a4a0c" stroke-width="0.6" />
<path d="M973,169.5 l5,-6" fill="none" stroke="#8a5a20" stroke-width="2" />
<rect x="984" y="155.5" width="118" height="21" fill="url(#g53)" stroke="#9c9c9c" stroke-width="1" rx="2.5" />
<path d="M1091.5,164.5 h7 l-3.5,4 z" fill="#111" />
<text x="988" y="170" font-size="12" fill="#111" textLength="51" lengthAdjust="spacingAndGlyphs" >Standard</text>
<rect x="1104" y="156.5" width="1.3" height="19" fill="#2a2a2a"/>
<path d="M1113,173 l2,-9 l7,-3" fill="none" stroke="#333" stroke-width="1.1" />
<circle cx="1124.5" cy="160.5" r="2.8" fill="#fff" stroke="#333" stroke-width="1" />
<path d="M1113,173 l-0.6,-3.4 l2.8,1.4 z" fill="#333" />
<path d="M1118.5,173.5 l3,-4 l3,2 z" fill="#e08a20" stroke="#7a4a0c" stroke-width="0.6" />
<path d="M1122.5,169.5 l5,-6" fill="none" stroke="#8a5a20" stroke-width="2" />
<rect x="1132.5" y="155.5" width="118.5" height="21" fill="url(#g54)" stroke="#9c9c9c" stroke-width="1" rx="2.5" />
<path d="M1240.5,164.5 h7 l-3.5,4 z" fill="#111" />
<text x="1151" y="170" font-size="12" fill="#111" textLength="51" lengthAdjust="spacingAndGlyphs" >Standard</text>
<rect x="6.5" y="181.5" width="400" height="23" fill="none" stroke="#4c4c4c" stroke-width="1" shape-rendering="crispEdges" />
<rect x="7" y="182" width="8" height="22" fill="#5a5a5a" shape-rendering="crispEdges" />
<rect x="9" y="185" width="1" height="1" fill="#2a2a2a" shape-rendering="crispEdges" />
<rect x="11" y="185" width="1" height="1" fill="#2a2a2a" shape-rendering="crispEdges" />
<rect x="9" y="187" width="1" height="1" fill="#2a2a2a" shape-rendering="crispEdges" />
<rect x="11" y="187" width="1" height="1" fill="#2a2a2a" shape-rendering="crispEdges" />
<rect x="9" y="189" width="1" height="1" fill="#2a2a2a" shape-rendering="crispEdges" />
<rect x="11" y="189" width="1" height="1" fill="#2a2a2a" shape-rendering="crispEdges" />
<rect x="9" y="191" width="1" height="1" fill="#2a2a2a" shape-rendering="crispEdges" />
<rect x="11" y="191" width="1" height="1" fill="#2a2a2a" shape-rendering="crispEdges" />
<rect x="9" y="193" width="1" height="1" fill="#2a2a2a" shape-rendering="crispEdges" />
<rect x="11" y="193" width="1" height="1" fill="#2a2a2a" shape-rendering="crispEdges" />
<rect x="9" y="195" width="1" height="1" fill="#2a2a2a" shape-rendering="crispEdges" />
<rect x="11" y="195" width="1" height="1" fill="#2a2a2a" shape-rendering="crispEdges" />
<rect x="9" y="197" width="1" height="1" fill="#2a2a2a" shape-rendering="crispEdges" />
<rect x="11" y="197" width="1" height="1" fill="#2a2a2a" shape-rendering="crispEdges" />
<rect x="9" y="199" width="1" height="1" fill="#2a2a2a" shape-rendering="crispEdges" />
<rect x="11" y="199" width="1" height="1" fill="#2a2a2a" shape-rendering="crispEdges" />
<rect x="15" y="182" width="391" height="22" fill="url(#g43)" shape-rendering="crispEdges" />
<path d="M17,189.5 h9 l2,-2 M17,192.5 h7 M17,195.5 h5" fill="none" stroke="#3a3a3a" stroke-width="1" />
<path d="M19,187.5 l-2.4,2 M19,190.5 l-2.4,2 M19,193.5 l-2.4,2" fill="none" stroke="#3a3a3a" stroke-width="0.9" />
<rect x="24.5" y="191.5" width="7" height="9" fill="#f4f6fa" stroke="#3a3a3a" stroke-width="1" rx="0.8" />
<rect x="26" y="193" width="4" height="2" fill="#2a62b8" shape-rendering="crispEdges" />
<path d="M26.2,197.5 h3.5" fill="none" stroke="#3a3a3a" stroke-width="0.8" />
<rect x="40" y="183" width="297.5" height="20" fill="url(#g55)" stroke="#9c9c9c" stroke-width="1" rx="2.5" />
<path d="M327.0,191.5 h7 l-3.5,4 z" fill="#111" />
<path d="M48.3,187 q4,0 4,4 q0,2.5 -2,4 v1.5 h-4 v-1.5 q-2,-1.5 -2,-4 q0,-4 4,-4 z" fill="#f8e27a" stroke="#7a6a20" stroke-width="0.9" />
<rect x="46.8" y="196.8" width="3" height="2.6" fill="#eee" stroke="#555" stroke-width="0.8" />
<circle cx="63.5" cy="193" r="3.4" fill="#f8e27a" stroke="#8a7a20" stroke-width="0.9" />
<line x1="68.1" y1="193.0" x2="70.1" y2="193.0" stroke="#555" stroke-width="0.9" />
<line x1="66.75" y1="196.25" x2="68.17" y2="197.67" stroke="#555" stroke-width="0.9" />
<line x1="63.5" y1="197.6" x2="63.5" y2="199.6" stroke="#555" stroke-width="0.9" />
<line x1="60.25" y1="196.25" x2="58.83" y2="197.67" stroke="#555" stroke-width="0.9" />
<line x1="58.9" y1="193.0" x2="56.9" y2="193.0" stroke="#555" stroke-width="0.9" />
<line x1="60.25" y1="189.75" x2="58.83" y2="188.33" stroke="#555" stroke-width="0.9" />
<line x1="63.5" y1="188.4" x2="63.5" y2="186.4" stroke="#555" stroke-width="0.9" />
<line x1="66.75" y1="189.75" x2="68.17" y2="188.33" stroke="#555" stroke-width="0.9" />
<rect x="76" y="187" width="7" height="6.5" fill="none" stroke="#b4b4b4" stroke-width="1" />
<rect x="78" y="189" width="4" height="4" fill="none" stroke="#c0c0c0" stroke-width="0.8" />
<circle cx="84.5" cy="196" r="2.6" fill="#c8c8c8" stroke="#b0b0b0" stroke-width="0.8" />
<rect x="94" y="192.5" width="8.5" height="6.5" fill="#8ecdf0" stroke="#1f5c8a" stroke-width="1" />
<path d="M99.5,192.5 v-3 q0,-3 3,-3 q3,0 3,3" fill="none" stroke="#1f5c8a" stroke-width="1.4" />
<rect x="97.5" y="194.5" width="1.4" height="3" fill="#1f3c5a" shape-rendering="crispEdges" />
<rect x="109.5" y="188.5" width="9.5" height="9.5" fill="#fff" stroke="#111" stroke-width="1.2" />
<text x="124" y="198" font-size="13" fill="#111" style="font-family:'Liberation Serif'" >0</text>
<path d="M342,192 l5,-4 h10 l-5,4 z" fill="#8ecdf0" stroke="#1f5c8a" stroke-width="1" />
<path d="M342,194.5 l4,-3 h9 l-4,3 z" fill="#fbfbfb" stroke="#333" stroke-width="0.9" />
<path d="M342,197.5 l4,-3 h9 l-4,3 z" fill="#fbfbfb" stroke="#333" stroke-width="0.9" />
<path d="M342,200.5 l4,-3 h9 l-4,3 z" fill="#fbfbfb" stroke="#333" stroke-width="0.9" />
<path d="M367,194.5 l4,-3 h9 l-4,3 z" fill="#fbfbfb" stroke="#333" stroke-width="0.9" />
<path d="M367,197.5 l4,-3 h9 l-4,3 z" fill="#fbfbfb" stroke="#333" stroke-width="0.9" />
<path d="M367,200.5 l4,-3 h9 l-4,3 z" fill="#fbfbfb" stroke="#333" stroke-width="0.9" />
<path d="M365.5,187.5 q2,-1.5 3.5,0.5" fill="none" stroke="#3a3a3a" stroke-width="1" />
<path d="M365,186 l-0.2,3 l2.6,-1 z" fill="#3a3a3a" />
<path d="M389,192 l4,-3 h9 l-4,3 z" fill="#fbfbfb" stroke="#333" stroke-width="0.9" />
<path d="M389,195 l4,-3 h9 l-4,3 z" fill="#fbfbfb" stroke="#333" stroke-width="0.9" />
<path d="M389,198 l4,-3 h9 l-4,3 z" fill="#fbfbfb" stroke="#333" stroke-width="0.9" />
<rect x="394.5" y="194" width="8" height="6.5" fill="#f4f6fa" stroke="#3a3a3a" stroke-width="1" />
<path d="M396,196 h5 M396,198 h5" fill="none" stroke="#3a3a3a" stroke-width="0.7" />
<rect x="409.0" y="181.5" width="581" height="23" fill="none" stroke="#4c4c4c" stroke-width="1" />
<rect x="409.5" y="182" width="8" height="22" fill="#5a5a5a" shape-rendering="crispEdges" />
<rect x="411.5" y="185" width="1" height="1" fill="#2a2a2a" shape-rendering="crispEdges" />
<rect x="413.5" y="185" width="1" height="1" fill="#2a2a2a" shape-rendering="crispEdges" />
<rect x="411.5" y="187" width="1" height="1" fill="#2a2a2a" shape-rendering="crispEdges" />
<rect x="413.5" y="187" width="1" height="1" fill="#2a2a2a" shape-rendering="crispEdges" />
<rect x="411.5" y="189" width="1" height="1" fill="#2a2a2a" shape-rendering="crispEdges" />
<rect x="413.5" y="189" width="1" height="1" fill="#2a2a2a" shape-rendering="crispEdges" />
<rect x="411.5" y="191" width="1" height="1" fill="#2a2a2a" shape-rendering="crispEdges" />
<rect x="413.5" y="191" width="1" height="1" fill="#2a2a2a" shape-rendering="crispEdges" />
<rect x="411.5" y="193" width="1" height="1" fill="#2a2a2a" shape-rendering="crispEdges" />
<rect x="413.5" y="193" width="1" height="1" fill="#2a2a2a" shape-rendering="crispEdges" />
<rect x="411.5" y="195" width="1" height="1" fill="#2a2a2a" shape-rendering="crispEdges" />
<rect x="413.5" y="195" width="1" height="1" fill="#2a2a2a" shape-rendering="crispEdges" />
<rect x="411.5" y="197" width="1" height="1" fill="#2a2a2a" shape-rendering="crispEdges" />
<rect x="413.5" y="197" width="1" height="1" fill="#2a2a2a" shape-rendering="crispEdges" />
<rect x="411.5" y="199" width="1" height="1" fill="#2a2a2a" shape-rendering="crispEdges" />
<rect x="413.5" y="199" width="1" height="1" fill="#2a2a2a" shape-rendering="crispEdges" />
<rect x="417.5" y="182" width="572" height="22" fill="url(#g43)" shape-rendering="crispEdges" />
<rect x="418" y="183" width="147" height="20" fill="url(#g56)" stroke="#9c9c9c" stroke-width="1" rx="2.5" />
<path d="M554.5,191.5 h7 l-3.5,4 z" fill="#111" />
<rect x="423.5" y="188.5" width="9.5" height="9.5" fill="#fff" stroke="#111" stroke-width="1.2" />
<text x="437" y="196.8" font-size="13" fill="#111" style="font-family:'Liberation Serif'" textLength="41" lengthAdjust="spacingAndGlyphs" >ByLayer</text>
<rect x="567.5" y="183" width="1" height="20" fill="#fafafa" shape-rendering="crispEdges" />
<rect x="569.5" y="183" width="1" height="20" fill="#3a3a3a" shape-rendering="crispEdges" />
<rect x="571.5" y="183" width="1" height="20" fill="#fafafa" shape-rendering="crispEdges" />
<rect x="573.5" y="183" width="158" height="20" fill="url(#g57)" stroke="#9c9c9c" stroke-width="1" rx="2.5" />
<path d="M721.0,191.5 h7 l-3.5,4 z" fill="#111" />
<line x1="578" y1="192.5" x2="638" y2="192.5" stroke="#111" stroke-width="1" shape-rendering="crispEdges" />
<text x="643" y="196.8" font-size="13" fill="#111" style="font-family:'Liberation Serif'" textLength="41" lengthAdjust="spacingAndGlyphs" >ByLayer</text>
<rect x="733.5" y="183" width="1" height="20" fill="#fafafa" shape-rendering="crispEdges" />
<rect x="735.5" y="183" width="1" height="20" fill="#3a3a3a" shape-rendering="crispEdges" />
<rect x="737.5" y="183" width="1" height="20" fill="#fafafa" shape-rendering="crispEdges" />
<rect x="740" y="183" width="123" height="20" fill="url(#g58)" stroke="#9c9c9c" stroke-width="1" rx="2.5" />
<path d="M852.5,191.5 h7 l-3.5,4 z" fill="#111" />
<line x1="745" y1="192.5" x2="779" y2="192.5" stroke="#111" stroke-width="1" shape-rendering="crispEdges" />
<text x="784" y="196.8" font-size="13" fill="#111" style="font-family:'Liberation Serif'" textLength="41" lengthAdjust="spacingAndGlyphs" >ByLayer</text>
<rect x="865" y="183" width="1" height="20" fill="#fafafa" shape-rendering="crispEdges" />
<rect x="867" y="183" width="1" height="20" fill="#3a3a3a" shape-rendering="crispEdges" />
<rect x="870" y="182.5" width="119.5" height="21" fill="#ffffff" stroke="#a8a8a8" stroke-width="1" rx="2" />
<text x="879.5" y="196.5" font-size="11.8" fill="#7a7a7a" >依顏色</text>
<path d="M978.5,191.0 h7 l-3.5,4 z" fill="#b4b4b4" />
<rect x="7.5" y="214" width="20" height="670" fill="url(#g59)" stroke="#555" stroke-width="1" rx="2" />
<rect x="11" y="217" width="1" height="1" fill="#2a2a2a" shape-rendering="crispEdges" />
<rect x="11" y="219" width="1" height="1" fill="#2a2a2a" shape-rendering="crispEdges" />
<rect x="13" y="217" width="1" height="1" fill="#2a2a2a" shape-rendering="crispEdges" />
<rect x="13" y="219" width="1" height="1" fill="#2a2a2a" shape-rendering="crispEdges" />
<rect x="15" y="217" width="1" height="1" fill="#2a2a2a" shape-rendering="crispEdges" />
<rect x="15" y="219" width="1" height="1" fill="#2a2a2a" shape-rendering="crispEdges" />
<rect x="17" y="217" width="1" height="1" fill="#2a2a2a" shape-rendering="crispEdges" />
<rect x="17" y="219" width="1" height="1" fill="#2a2a2a" shape-rendering="crispEdges" />
<rect x="19" y="217" width="1" height="1" fill="#2a2a2a" shape-rendering="crispEdges" />
<rect x="19" y="219" width="1" height="1" fill="#2a2a2a" shape-rendering="crispEdges" />
<rect x="21" y="217" width="1" height="1" fill="#2a2a2a" shape-rendering="crispEdges" />
<rect x="21" y="219" width="1" height="1" fill="#2a2a2a" shape-rendering="crispEdges" />
<rect x="23" y="217" width="1" height="1" fill="#2a2a2a" shape-rendering="crispEdges" />
<rect x="23" y="219" width="1" height="1" fill="#2a2a2a" shape-rendering="crispEdges" />
<g transform="translate(22,578.8) rotate(-90)"><text x="0" y="0" font-size="12.3" fill="#dedede" >專案管理員</text></g>
<rect x="1893" y="214.5" width="19.5" height="670" fill="url(#g60)" stroke="#555" stroke-width="1" rx="2" />
<rect x="1896" y="217.5" width="1" height="1" fill="#2a2a2a" shape-rendering="crispEdges" />
<rect x="1896" y="219.5" width="1" height="1" fill="#2a2a2a" shape-rendering="crispEdges" />
<rect x="1898" y="217.5" width="1" height="1" fill="#2a2a2a" shape-rendering="crispEdges" />
<rect x="1898" y="219.5" width="1" height="1" fill="#2a2a2a" shape-rendering="crispEdges" />
<rect x="1900" y="217.5" width="1" height="1" fill="#2a2a2a" shape-rendering="crispEdges" />
<rect x="1900" y="219.5" width="1" height="1" fill="#2a2a2a" shape-rendering="crispEdges" />
<rect x="1902" y="217.5" width="1" height="1" fill="#2a2a2a" shape-rendering="crispEdges" />
<rect x="1902" y="219.5" width="1" height="1" fill="#2a2a2a" shape-rendering="crispEdges" />
<rect x="1904" y="217.5" width="1" height="1" fill="#2a2a2a" shape-rendering="crispEdges" />
<rect x="1904" y="219.5" width="1" height="1" fill="#2a2a2a" shape-rendering="crispEdges" />
<rect x="1906" y="217.5" width="1" height="1" fill="#2a2a2a" shape-rendering="crispEdges" />
<rect x="1906" y="219.5" width="1" height="1" fill="#2a2a2a" shape-rendering="crispEdges" />
<rect x="1908" y="217.5" width="1" height="1" fill="#2a2a2a" shape-rendering="crispEdges" />
<rect x="1908" y="219.5" width="1" height="1" fill="#2a2a2a" shape-rendering="crispEdges" />
<g transform="translate(1907.5,620) rotate(-90)"><text x="0" y="0" font-size="12" fill="#dedede" >工具選項板</text><text x="63.0" y="-1" font-size="12" fill="#dedede">-</text><g transform="translate(70.5,0)"><text x="0" y="0" font-size="12" fill="#dedede" >所有的選項板</text></g></g>
<rect x="31.5" y="209.0" width="24.5" height="449" fill="none" stroke="#4a4a4a" stroke-width="1" />
<rect x="32" y="209.5" width="23.5" height="8" fill="#5a5a5a" shape-rendering="crispEdges" />
<rect x="36" y="212.0" width="1" height="1" fill="#111" shape-rendering="crispEdges" />
<rect x="36" y="214.0" width="1" height="1" fill="#111" shape-rendering="crispEdges" />
<rect x="38" y="212.0" width="1" height="1" fill="#111" shape-rendering="crispEdges" />
<rect x="38" y="214.0" width="1" height="1" fill="#111" shape-rendering="crispEdges" />
<rect x="40" y="212.0" width="1" height="1" fill="#111" shape-rendering="crispEdges" />
<rect x="40" y="214.0" width="1" height="1" fill="#111" shape-rendering="crispEdges" />
<rect x="42" y="212.0" width="1" height="1" fill="#111" shape-rendering="crispEdges" />
<rect x="42" y="214.0" width="1" height="1" fill="#111" shape-rendering="crispEdges" />
<rect x="44" y="212.0" width="1" height="1" fill="#111" shape-rendering="crispEdges" />
<rect x="44" y="214.0" width="1" height="1" fill="#111" shape-rendering="crispEdges" />
<rect x="46" y="212.0" width="1" height="1" fill="#111" shape-rendering="crispEdges" />
<rect x="46" y="214.0" width="1" height="1" fill="#111" shape-rendering="crispEdges" />
<rect x="48" y="212.0" width="1" height="1" fill="#111" shape-rendering="crispEdges" />
<rect x="48" y="214.0" width="1" height="1" fill="#111" shape-rendering="crispEdges" />
<rect x="32" y="217.5" width="23.5" height="440" fill="url(#g61)" shape-rendering="crispEdges" />
<line x1="38" y1="236" x2="49.5" y2="222" stroke="#3a3a3a" stroke-width="1.1" />
<rect x="36.5" y="234.5" width="3" height="3" fill="#fff" stroke="#3a3a3a" stroke-width="0.9" />
<rect x="48.0" y="220.5" width="3" height="3" fill="#fff" stroke="#3a3a3a" stroke-width="0.9" />
<line x1="38" y1="258" x2="49.5" y2="244" stroke="#3a3a3a" stroke-width="1.1" />
<rect x="42.2" y="249.5" width="3" height="3" fill="#fff" stroke="#3a3a3a" stroke-width="0.9" />
<path d="M49.8,243.5 l-4.2,1 l3.2,3.2 z M37.6,258.5 l4.2,-1 l-3.2,-3.2 z" fill="#3a3a3a" />
<path d="M37.5,277 h8 q4.5,0 4.5,-4.5 q0,-4 -4.5,-4" fill="none" stroke="#3a3a3a" stroke-width="1.2" />
<rect x="36.0" y="275.5" width="3" height="3" fill="#fff" stroke="#3a3a3a" stroke-width="0.9" />
<rect x="42.5" y="275.5" width="3" height="3" fill="#fff" stroke="#3a3a3a" stroke-width="0.9" />
<rect x="44.0" y="266.5" width="3" height="3" fill="#fff" stroke="#3a3a3a" stroke-width="0.9" />
<path d="M43.7,287.5 l7.5,5.5 l-2.8,8.5 h-9.4 l-2.8,-8.5 z" fill="url(#g21)" stroke="#3a3a3a" stroke-width="1.2" />
<rect x="36.5" y="312.5" width="13" height="9.5" fill="url(#g21)" stroke="#3a3a3a" stroke-width="1.2" />
<rect x="35.0" y="320.5" width="3" height="3" fill="#fff" stroke="#3a3a3a" stroke-width="0.9" />
<rect x="48.0" y="311.0" width="3" height="3" fill="#fff" stroke="#3a3a3a" stroke-width="0.9" />
<path d="M36.5,346 q0.5,-12 13.5,-14" fill="none" stroke="#3a3a3a" stroke-width="1.2" />
<rect x="35.0" y="344.5" width="3" height="3" fill="#fff" stroke="#3a3a3a" stroke-width="0.9" />
<rect x="39.5" y="334.5" width="3" height="3" fill="#fff" stroke="#3a3a3a" stroke-width="0.9" />
<rect x="48.5" y="330.5" width="3" height="3" fill="#fff" stroke="#3a3a3a" stroke-width="0.9" />
<circle cx="43.7" cy="361" r="7" fill="url(#g21)" stroke="#3a3a3a" stroke-width="1.2" />
<line x1="43.7" y1="361" x2="48.5" y2="356.5" stroke="#3a3a3a" stroke-width="1" />
<rect x="42.400000000000006" y="359.7" width="2.6" height="2.6" fill="#fff" stroke="#3a3a3a" stroke-width="0.9" />
<path d="M38.5,379 q0,-4 4,-3.5 q3.5,-3 6,0.5 q4,1 2,5 q3,4 -2,6 q-3,3.5 -6,0.5 q-4,1 -4.5,-3 q-3,-3 0.5,-5.5 z" fill="url(#g21)" stroke="#3a3a3a" stroke-width="1.2" />
<path d="M36.5,412 q1,-12 6.5,-7 q5,5 7.5,-7.5" fill="none" stroke="#3a3a3a" stroke-width="1.3" />
<ellipse cx="43.7" cy="427" rx="7.5" ry="4.6" fill="url(#g21)" stroke="#3a3a3a" stroke-width="1.2"/>
<rect x="35.0" y="425.8" width="2.4" height="2.4" fill="#fff" stroke="#3a3a3a" stroke-width="0.9" />
<rect x="50.0" y="425.8" width="2.4" height="2.4" fill="#fff" stroke="#3a3a3a" stroke-width="0.9" />
<rect x="42.5" y="421.2" width="2.4" height="2.4" fill="#fff" stroke="#3a3a3a" stroke-width="0.9" />
<path d="M36.5,448 q0.5,-6 7,-6 q7,0 7,5 q0,5 -6,5.5" fill="none" stroke="#3a3a3a" stroke-width="1.2" />
<rect x="35.2" y="447.2" width="2.6" height="2.6" fill="#fff" stroke="#3a3a3a" stroke-width="0.9" />
<rect x="43.2" y="451.2" width="2.6" height="2.6" fill="#fff" stroke="#3a3a3a" stroke-width="0.9" />
<path d="M41.5,464 h6 l3,3 v8 h-9 z" fill="#fbfbfb" stroke="#3a3a3a" stroke-width="1" />
<rect x="36.5" y="469.5" width="9" height="6" fill="#eef0f4" stroke="#3a3a3a" stroke-width="1.1" />
<circle cx="37.3" cy="476" r="1.5" fill="#fff" stroke="#3a3a3a" stroke-width="0.9" />
<circle cx="46" cy="474.5" r="2.6" fill="#fff" stroke="#3a3a3a" stroke-width="1" />
<path d="M51,479 v-3.2 l-3.2,3.2 z" fill="#111" />
<path d="M38,489 h9 l2,2 v5 h-11 z" fill="url(#g21)" stroke="#3a3a3a" stroke-width="1.1" />
<circle cx="37.3" cy="497" r="1.5" fill="#fff" stroke="#3a3a3a" stroke-width="0.9" />
<circle cx="48" cy="495.5" r="2.8" fill="#fff" stroke="#3a3a3a" stroke-width="1" />
<rect x="41.2" y="513.2" width="2.6" height="2.6" fill="#fff" stroke="#3a3a3a" stroke-width="0.9" />
<rect x="38" y="532" width="11" height="10.5" fill="#f4f4f4" stroke="#3a3a3a" stroke-width="1.1" />
<line x1="38" y1="538" x2="42.5" y2="542.5" stroke="#555" stroke-width="0.8" />
<line x1="38" y1="535" x2="45.5" y2="542.5" stroke="#555" stroke-width="0.8" />
<line x1="38" y1="532" x2="48.5" y2="542.5" stroke="#555" stroke-width="0.8" />
<line x1="41" y1="532" x2="49" y2="539.5" stroke="#555" stroke-width="0.8" />
<line x1="44" y1="532" x2="49" y2="536.5" stroke="#555" stroke-width="0.8" />
<line x1="47" y1="532" x2="49" y2="533.5" stroke="#555" stroke-width="0.8" />
<path d="M36,532 h15 M36,542.5 h15 M38,529.5 v15 M49,529.5 v15" fill="none" stroke="#3a3a3a" stroke-width="1" />
<rect x="38" y="554" width="11" height="10.5" fill="url(#g62)" stroke="#3a3a3a" stroke-width="1.1" />
<path d="M36,554 h15 M36,564.5 h15 M38,551.5 v15 M49,551.5 v15" fill="none" stroke="#3a3a3a" stroke-width="1" />
<path d="M36.5,575.5 h9 l5.5,4 v7 h-14.5 z" fill="#f4f4f6" stroke="#3a3a3a" stroke-width="1.2" />
<circle cx="42.5" cy="581.5" r="3" fill="#fff" stroke="#3a3a3a" stroke-width="1.1" />
<rect x="36.5" y="596.5" width="14.5" height="14" fill="#fbfbfb" stroke="#3a3a3a" stroke-width="1.2" />
<rect x="36.5" y="596.5" width="14.5" height="3.5" fill="#8a8f99" stroke="#3a3a3a" stroke-width="1" shape-rendering="crispEdges" />
<path d="M36.5,603.5 h14.5 M36.5,607.0 h14.5 M41.3,600.0 v10.5 M46.2,600.0 v10.5" fill="none" stroke="#555" stroke-width="0.9" />
<text x="43.7" y="633.0" font-size="19" fill="#222" text-anchor="middle" >A</text>
<circle cx="38.2" cy="642" r="3" fill="#5cb85c" stroke="#2a7a2a" stroke-width="0.9" />
<circle cx="47.5" cy="651" r="3.2" fill="#6cb8f0" stroke="#2a6aa8" stroke-width="0.9" />
<path d="M42.5,642.5 h3 v2.5" fill="none" stroke="#222" stroke-width="1.1" />
<path d="M43.8,644.6 h3.4 l-1.7,2.2 z" fill="#222" />
<rect x="1861.0" y="209.0" width="25" height="405" fill="none" stroke="#4a4a4a" stroke-width="1" />
<rect x="1861.5" y="209.5" width="24" height="8" fill="#5a5a5a" shape-rendering="crispEdges" />
<rect x="1865.5" y="212.0" width="1" height="1" fill="#111" shape-rendering="crispEdges" />
<rect x="1865.5" y="214.0" width="1" height="1" fill="#111" shape-rendering="crispEdges" />
<rect x="1867.5" y="212.0" width="1" height="1" fill="#111" shape-rendering="crispEdges" />
<rect x="1867.5" y="214.0" width="1" height="1" fill="#111" shape-rendering="crispEdges" />
<rect x="1869.5" y="212.0" width="1" height="1" fill="#111" shape-rendering="crispEdges" />
<rect x="1869.5" y="214.0" width="1" height="1" fill="#111" shape-rendering="crispEdges" />
<rect x="1871.5" y="212.0" width="1" height="1" fill="#111" shape-rendering="crispEdges" />
<rect x="1871.5" y="214.0" width="1" height="1" fill="#111" shape-rendering="crispEdges" />
<rect x="1873.5" y="212.0" width="1" height="1" fill="#111" shape-rendering="crispEdges" />
<rect x="1873.5" y="214.0" width="1" height="1" fill="#111" shape-rendering="crispEdges" />
<rect x="1875.5" y="212.0" width="1" height="1" fill="#111" shape-rendering="crispEdges" />
<rect x="1875.5" y="214.0" width="1" height="1" fill="#111" shape-rendering="crispEdges" />
<rect x="1877.5" y="212.0" width="1" height="1" fill="#111" shape-rendering="crispEdges" />
<rect x="1877.5" y="214.0" width="1" height="1" fill="#111" shape-rendering="crispEdges" />
<rect x="1879.5" y="212.0" width="1" height="1" fill="#111" shape-rendering="crispEdges" />
<rect x="1879.5" y="214.0" width="1" height="1" fill="#111" shape-rendering="crispEdges" />
<rect x="1861.5" y="217.5" width="24" height="396" fill="url(#g63)" shape-rendering="crispEdges" />
<path d="M1867,235.5 h12" fill="none" stroke="#3a3a3a" stroke-width="1.1" />
<path d="M1868,232 l3,-3.4 l3,2.6 l-2.6,3.4 z" fill="#d85a30" stroke="#7a2a10" stroke-width="0.7" />
<path d="M1871,228.6 l7,-8 l3,2.6 l-7,8 z" fill="#e8c080" stroke="#7a5a20" stroke-width="0.7" />
<circle cx="1868.5" cy="246" r="2.6" fill="#fff" stroke="#3a3a3a" stroke-width="1" />
<circle cx="1874" cy="252" r="3" fill="#eaf2fc" stroke="#2e7cc8" stroke-width="1.1" />
<circle cx="1877.5" cy="256" r="3" fill="#eaf2fc" stroke="#2e7cc8" stroke-width="1.1" />
<path d="M1873,245 h4 v2" fill="none" stroke="#3a3a3a" stroke-width="1" />
<path d="M1875.3,246.7 h3.4 l-1.7,2 z" fill="#3a3a3a" />
<path d="M1872.5,267 v12.5 h-6 z" fill="#fbfbfb" stroke="#3a3a3a" stroke-width="1" />
<path d="M1875.5,267 v12.5 h6 z" fill="#9cc8ee" stroke="#2e7cc8" stroke-width="1" />
<line x1="1874" y1="265" x2="1874" y2="281" stroke="#3a3a3a" stroke-width="0.9" shape-rendering="crispEdges" />
<path d="M1866.5,300 q0,-4 4.5,-4 q-1.5,-7 3.5,-7 q5,0 3.5,7 q4,0 4,4 z" fill="#fbfbfb" stroke="#3a3a3a" stroke-width="1.3" />
<path d="M1866.5,302.5 h15.5" fill="none" stroke="#2e7cc8" stroke-width="1.6" />
<rect x="1867.0" y="310.0" width="6" height="6" fill="#fbfbfb" stroke="#3a3a3a" stroke-width="1.1" />
<rect x="1875.5" y="310.0" width="6" height="6" fill="#fbfbfb" stroke="#2e7cc8" stroke-width="1.1" />
<rect x="1867.0" y="318.5" width="6" height="6" fill="#fbfbfb" stroke="#2e7cc8" stroke-width="1.1" />
<rect x="1875.5" y="318.5" width="6" height="6" fill="#fbfbfb" stroke="#2e7cc8" stroke-width="1.1" />
<path d="M1884,325.5 v-3.2 l-3.2,3.2 z" fill="#111" />
<g transform="translate(1873.5,339) scale(0.95)" >
<path d="M-7,0 h14 M0,-7 v14" fill="none" stroke="#333" stroke-width="1.3" />
<path d="M-7,0 l3,-2.6 v5.2 z" fill="#333" />
<path d="M7,0 l-3,-2.6 v5.2 z" fill="#333" />
<path d="M0,-7 l-2.6,3 h5.2 z" fill="#333" />
<path d="M0,7 l-2.6,-3 h5.2 z" fill="#333" />
</g>
<rect x="1871.7" y="337.2" width="3.6" height="3.6" fill="#fff" stroke="#333" stroke-width="0.9" />
<path d="M1879.5,358 a6.8,6.8 0 1 1 -6,-4" fill="none" stroke="#444" stroke-width="1.6" />
<path d="M1871,351.5 l4.5,2.6 l-4.5,2.6 z" fill="#333" />
<rect x="1867" y="376" width="14" height="14" fill="#bfe0f6" stroke="#2e7cc8" stroke-width="1.2" />
<rect x="1867" y="382.5" width="7.5" height="7.5" fill="#fbfbfb" stroke="#3a3a3a" stroke-width="1.1" />
<path d="M1867,397.5 h9 l5,15 h-14 z" fill="#fbfbfb" stroke="#3a3a3a" stroke-width="1.1" />
<path d="M1876,397.5 l5,15 h-5 z" fill="#9cc8ee" stroke="#2e7cc8" stroke-width="0.9" />
<path d="M1869,408.5 h6" fill="none" stroke="#111" stroke-width="1.3" />
<path d="M1874.5,406.3 l3,2.2 l-3,2.2 z" fill="#111" />
<path d="M1866.5,428.5 h5 M1875.5,428.5 h7" fill="none" stroke="#2e7cc8" stroke-width="1.3" stroke-dasharray="3,1.5"/>
<line x1="1870.5" y1="434.5" x2="1877.5" y2="420" stroke="#2e7cc8" stroke-width="1.3" />
<path d="M1866.5,449.5 h9" fill="none" stroke="#222" stroke-width="1.3" stroke-dasharray="3,1.5"/>
<line x1="1876" y1="456.5" x2="1883" y2="442" stroke="#2e7cc8" stroke-width="1.4" />
<path d="M1867,477.5 v-9 q0,-2 2,-2 h10" fill="none" stroke="#3a3a3a" stroke-width="1.2" />
<path d="M1867,477.5 h14" fill="none" stroke="#3a3a3a" stroke-width="1" />
<rect x="1878.5" y="464.5" width="3" height="3" fill="#2e7cc8" shape-rendering="crispEdges" />
<path d="M1867,499 v-9 q0,-2 2,-2 h2.5 M1877,488 h2.5 q2,0 2,2 v9 z" fill="none" stroke="#3a3a3a" stroke-width="1.2" />
<line x1="1867" y1="499" x2="1881.5" y2="499" stroke="#3a3a3a" stroke-width="1" shape-rendering="crispEdges" />
<rect x="1871" y="486.5" width="3" height="3" fill="#2e7cc8" shape-rendering="crispEdges" />
<rect x="1875" y="486.5" width="3" height="3" fill="#2e7cc8" shape-rendering="crispEdges" />
<path d="M1866.5,515 h5 M1876.5,515 h5" fill="none" stroke="#2e7cc8" stroke-width="1.3" />
<path d="M1873.3,515 l-3,-2.4 v4.8 z M1874.7,515 l3,-2.4 v4.8 z" fill="#2e7cc8" />
<path d="M1867,544 v-7 l8,-7 h6.5 v14 z" fill="url(#g21)" stroke="#3a3a3a" stroke-width="1.2" />
<path d="M1867,537 l8,-7" fill="none" stroke="#2e7cc8" stroke-width="1.5" />
<path d="M1867,566 v-5 q0,-9 9,-9 h5.5 v14 z" fill="url(#g21)" stroke="#3a3a3a" stroke-width="1.2" />
<path d="M1867,561 q0,-9 9,-9" fill="none" stroke="#2e7cc8" stroke-width="1.6" />
<path d="M1867.5,585.5 q3,-10 7,-4 q3,4 6,-2" fill="none" stroke="#2e7cc8" stroke-width="1.4" />
<path d="M1867.5,589 v-5 M1881.5,583 v-8" fill="none" stroke="#3a3a3a" stroke-width="1.2" />
<rect x="1866.3" y="583.5" width="2.6" height="2.6" fill="#fff" stroke="#3a3a3a" stroke-width="0.8" />
<rect x="1880.2" y="578" width="2.6" height="2.6" fill="#fff" stroke="#3a3a3a" stroke-width="0.8" />
<path d="M1866.5,604 l4,-4 h8 l-4,4 z M1866.5,604 v6 h8 v-6 M1874.5,610 l4,-4 v-6" fill="#d6ecfa" stroke="#2e7cc8" stroke-width="1.1" />
<path d="M1870,597.5 l4,-2.5 h8 l-3,3" fill="none" stroke="#2e7cc8" stroke-width="1" />
<rect x="1861.0" y="615.5" width="25" height="146" fill="none" stroke="#4a4a4a" stroke-width="1" />
<rect x="1861.5" y="616" width="24" height="8" fill="#5a5a5a" shape-rendering="crispEdges" />
<rect x="1865.5" y="618.5" width="1" height="1" fill="#111" shape-rendering="crispEdges" />
<rect x="1865.5" y="620.5" width="1" height="1" fill="#111" shape-rendering="crispEdges" />
<rect x="1867.5" y="618.5" width="1" height="1" fill="#111" shape-rendering="crispEdges" />
<rect x="1867.5" y="620.5" width="1" height="1" fill="#111" shape-rendering="crispEdges" />
<rect x="1869.5" y="618.5" width="1" height="1" fill="#111" shape-rendering="crispEdges" />
<rect x="1869.5" y="620.5" width="1" height="1" fill="#111" shape-rendering="crispEdges" />
<rect x="1871.5" y="618.5" width="1" height="1" fill="#111" shape-rendering="crispEdges" />
<rect x="1871.5" y="620.5" width="1" height="1" fill="#111" shape-rendering="crispEdges" />
<rect x="1873.5" y="618.5" width="1" height="1" fill="#111" shape-rendering="crispEdges" />
<rect x="1873.5" y="620.5" width="1" height="1" fill="#111" shape-rendering="crispEdges" />
<rect x="1875.5" y="618.5" width="1" height="1" fill="#111" shape-rendering="crispEdges" />
<rect x="1875.5" y="620.5" width="1" height="1" fill="#111" shape-rendering="crispEdges" />
<rect x="1877.5" y="618.5" width="1" height="1" fill="#111" shape-rendering="crispEdges" />
<rect x="1877.5" y="620.5" width="1" height="1" fill="#111" shape-rendering="crispEdges" />
<rect x="1879.5" y="618.5" width="1" height="1" fill="#111" shape-rendering="crispEdges" />
<rect x="1879.5" y="620.5" width="1" height="1" fill="#111" shape-rendering="crispEdges" />
<rect x="1861.5" y="624" width="24" height="137" fill="url(#g64)" shape-rendering="crispEdges" />
<rect x="1866.5" y="628" width="10" height="8" fill="#fbfbfb" stroke="#3a3a3a" stroke-width="1.1" />
<rect x="1871" y="632.5" width="10.5" height="8.5" fill="url(#g22)" stroke="#3a3a3a" stroke-width="1.1" />
<rect x="1866.5" y="650" width="10" height="8" fill="url(#g22)" stroke="#3a3a3a" stroke-width="1.1" />
<rect x="1871" y="654.5" width="10.5" height="8.5" fill="#fbfbfb" stroke="#3a3a3a" stroke-width="1.1" />
<rect x="1866.5" y="672" width="10" height="8" fill="#fbfbfb" stroke="#3a3a3a" stroke-width="1.1" />
<rect x="1871" y="676.5" width="10.5" height="8.5" fill="url(#g22)" stroke="#3a3a3a" stroke-width="1.1" />
<rect x="1866.5" y="694" width="10" height="8" fill="url(#g22)" stroke="#3a3a3a" stroke-width="1.1" />
<rect x="1871" y="698.5" width="10.5" height="8.5" fill="#fbfbfb" stroke="#3a3a3a" stroke-width="1.1" />
<line x1="1864" y1="714.5" x2="1883" y2="714.5" stroke="#b0b0b0" stroke-width="1" shape-rendering="crispEdges" />
<text x="1866" y="727" font-size="6.5" fill="#111" textLength="12.5" lengthAdjust="spacingAndGlyphs" font-weight="bold" >ABC</text>
<path d="M1868,729 v4.5 h10 v-4" fill="none" stroke="#3a3a3a" stroke-width="1" />
<path d="M1883,736.5 v-3 l-3,3 z" fill="#111" />
<rect x="1866.5" y="745" width="11" height="7.5" fill="url(#g65)" stroke="#3a3a3a" stroke-width="1.1" />
<path d="M1880,745 v12 M1868,757.5 h13" fill="none" stroke="#3a3a3a" stroke-width="0.9" />
<path d="M1870,755 l5,5 M1875,755 l-5,5" fill="none" stroke="#3a3a3a" stroke-width="0.8" />
<rect x="31" y="834" width="1858.5" height="56" fill="#cbcbcb" shape-rendering="crispEdges" />
<rect x="31" y="834" width="15" height="56" fill="#a9a9a9" shape-rendering="crispEdges" />
<rect x="46" y="834" width="1.8" height="56" fill="#f4f4f4" shape-rendering="crispEdges" />
<rect x="33" y="837" width="1" height="1" fill="#111" shape-rendering="crispEdges" />
<rect x="33" y="839" width="1" height="1" fill="#111" shape-rendering="crispEdges" />
<rect x="35" y="837" width="1" height="1" fill="#111" shape-rendering="crispEdges" />
<rect x="35" y="839" width="1" height="1" fill="#111" shape-rendering="crispEdges" />
<rect x="37" y="837" width="1" height="1" fill="#111" shape-rendering="crispEdges" />
<rect x="37" y="839" width="1" height="1" fill="#111" shape-rendering="crispEdges" />
<rect x="39" y="837" width="1" height="1" fill="#111" shape-rendering="crispEdges" />
<rect x="39" y="839" width="1" height="1" fill="#111" shape-rendering="crispEdges" />
<rect x="41" y="837" width="1" height="1" fill="#111" shape-rendering="crispEdges" />
<rect x="41" y="839" width="1" height="1" fill="#111" shape-rendering="crispEdges" />
<rect x="43" y="837" width="1" height="1" fill="#111" shape-rendering="crispEdges" />
<rect x="43" y="839" width="1" height="1" fill="#111" shape-rendering="crispEdges" />
<rect x="47.8" y="834" width="1841.7" height="38" fill="#c9c9c9" shape-rendering="crispEdges" />
<rect x="47" y="872" width="1842.5" height="1" fill="#9c9c9c" shape-rendering="crispEdges" />
<rect x="47" y="873" width="1842.5" height="17" fill="#ffffff" shape-rendering="crispEdges" />
<rect x="30.5" y="833.5" width="1" height="57" fill="#8a8a8a" shape-rendering="crispEdges" />
<text x="48.3" y="846" font-size="11.6" fill="#111" style="font-family:'Liberation Mono'" textLength="83.52" lengthAdjust="spacingAndGlyphs" >Autodesk DWG</text>
<circle cx="138.32" cy="840.7" r="1.5" fill="none" stroke="#111" stroke-width="0.9" />
<text x="145.64" y="847.2" font-size="14" fill="#111" style="font-family:'Liberation Serif','Noto Serif CJK SC',serif" textLength="55.68" lengthAdjust="spacing" >該檔案是</text>
<text x="201.42" y="846" font-size="11.6" fill="#111" style="font-family:'Liberation Mono'" textLength="76.56" lengthAdjust="spacingAndGlyphs" > TrustedDWG</text>
<path d="M284.0,839.5 q2,1 0,3.5" fill="none" stroke="#111" stroke-width="1.2" />
<text x="291.8" y="847.2" font-size="14" fill="#111" style="font-family:'Liberation Serif','Noto Serif CJK SC',serif" textLength="55.68" lengthAdjust="spacing" >上一次由</text>
<text x="347.58" y="846" font-size="11.6" fill="#111" style="font-family:'Liberation Mono'" textLength="69.6" lengthAdjust="spacingAndGlyphs" > Autodesk </text>
<text x="417.08" y="847.2" font-size="14" fill="#111" style="font-family:'Liberation Serif','Noto Serif CJK SC',serif" textLength="69.6" lengthAdjust="spacing" >應用程式或</text>
<text x="486.78" y="846" font-size="11.6" fill="#111" style="font-family:'Liberation Mono'" textLength="69.6" lengthAdjust="spacingAndGlyphs" > Autodesk </text>
<text x="556.28" y="847.2" font-size="14" fill="#111" style="font-family:'Liberation Serif','Noto Serif CJK SC',serif" textLength="125.28" lengthAdjust="spacing" >授權的應用程式儲存</text>
<circle cx="688.16" cy="840.7" r="1.5" fill="none" stroke="#111" stroke-width="0.9" />
<text x="48.2" y="862" font-size="14" fill="#111" style="font-family:'Liberation Serif','Noto Serif CJK SC',serif" textLength="27.84" lengthAdjust="spacing" >指令</text>
<text x="76.14" y="860.8" font-size="11.6" fill="#111" style="font-family:'Liberation Mono'" textLength="6.96" lengthAdjust="spacingAndGlyphs" >:</text>
<text x="48.2" y="887.7" font-size="14" fill="#111" style="font-family:'Liberation Serif','Noto Serif CJK SC',serif" textLength="27.84" lengthAdjust="spacing" >指令</text>
<text x="76.14" y="886.5" font-size="11.6" fill="#111" style="font-family:'Liberation Mono'" textLength="6.96" lengthAdjust="spacingAndGlyphs" >:</text>
<rect x="4" y="890" width="1913" height="1" fill="#2c2c2c" shape-rendering="crispEdges" />
<rect x="3" y="891" width="1914" height="21" fill="url(#g66)" shape-rendering="crispEdges" />
<rect x="3" y="912" width="1914" height="1.5" fill="#858585" shape-rendering="crispEdges" />
<rect x="3" y="913.5" width="1914" height="3" fill="url(#g67)" shape-rendering="crispEdges" />
<text x="17" y="906" font-size="11" fill="#0c0c0c" textLength="124" lengthAdjust="spacingAndGlyphs" >10.6295, 16.4719, 0.0000</text>
<rect x="187.5" y="891" width="21" height="21" fill="url(#g68)" shape-rendering="crispEdges" />
<rect x="186.5" y="891" width="1" height="21" fill="#484848" shape-rendering="crispEdges" />
<rect x="208.5" y="891" width="1" height="21" fill="#484848" shape-rendering="crispEdges" />
<rect x="209" y="891" width="21" height="21" fill="url(#g68)" shape-rendering="crispEdges" />
<rect x="208" y="891" width="1" height="21" fill="#484848" shape-rendering="crispEdges" />
<rect x="230" y="891" width="1" height="21" fill="#484848" shape-rendering="crispEdges" />
<rect x="231" y="891" width="21" height="21" fill="url(#g68)" shape-rendering="crispEdges" />
<rect x="230" y="891" width="1" height="21" fill="#484848" shape-rendering="crispEdges" />
<rect x="252" y="891" width="1" height="21" fill="#484848" shape-rendering="crispEdges" />
<rect x="253" y="891" width="21" height="21" fill="url(#g68)" shape-rendering="crispEdges" />
<rect x="252" y="891" width="1" height="21" fill="#484848" shape-rendering="crispEdges" />
<rect x="274" y="891" width="1" height="21" fill="#484848" shape-rendering="crispEdges" />
<rect x="275" y="891" width="21" height="21" fill="url(#g68)" shape-rendering="crispEdges" />
<rect x="274" y="891" width="1" height="21" fill="#484848" shape-rendering="crispEdges" />
<rect x="296" y="891" width="1" height="21" fill="#484848" shape-rendering="crispEdges" />
<rect x="297" y="891" width="21" height="21" fill="url(#g69)" shape-rendering="crispEdges" />
<rect x="296" y="891" width="1" height="21" fill="#484848" shape-rendering="crispEdges" />
<rect x="318" y="891" width="1" height="21" fill="#484848" shape-rendering="crispEdges" />
<rect x="319" y="891" width="21" height="21" fill="url(#g68)" shape-rendering="crispEdges" />
<rect x="318" y="891" width="1" height="21" fill="#484848" shape-rendering="crispEdges" />
<rect x="340" y="891" width="1" height="21" fill="#484848" shape-rendering="crispEdges" />
<rect x="341.5" y="891" width="21" height="21" fill="url(#g69)" shape-rendering="crispEdges" />
<rect x="340.5" y="891" width="1" height="21" fill="#484848" shape-rendering="crispEdges" />
<rect x="362.5" y="891" width="1" height="21" fill="#484848" shape-rendering="crispEdges" />
<rect x="363" y="891" width="21" height="21" fill="url(#g69)" shape-rendering="crispEdges" />
<rect x="362" y="891" width="1" height="21" fill="#484848" shape-rendering="crispEdges" />
<rect x="384" y="891" width="1" height="21" fill="#484848" shape-rendering="crispEdges" />
<rect x="385" y="891" width="21" height="21" fill="url(#g68)" shape-rendering="crispEdges" />
<rect x="384" y="891" width="1" height="21" fill="#484848" shape-rendering="crispEdges" />
<rect x="406" y="891" width="1" height="21" fill="#484848" shape-rendering="crispEdges" />
<rect x="407" y="891" width="21" height="21" fill="url(#g68)" shape-rendering="crispEdges" />
<rect x="406" y="891" width="1" height="21" fill="#484848" shape-rendering="crispEdges" />
<rect x="428" y="891" width="1" height="21" fill="#484848" shape-rendering="crispEdges" />
<rect x="429.5" y="891" width="21" height="21" fill="url(#g69)" shape-rendering="crispEdges" />
<rect x="428.5" y="891" width="1" height="21" fill="#484848" shape-rendering="crispEdges" />
<rect x="450.5" y="891" width="1" height="21" fill="#484848" shape-rendering="crispEdges" />
<rect x="451" y="891" width="21" height="21" fill="url(#g68)" shape-rendering="crispEdges" />
<rect x="450" y="891" width="1" height="21" fill="#484848" shape-rendering="crispEdges" />
<rect x="472" y="891" width="1" height="21" fill="#484848" shape-rendering="crispEdges" />
<rect x="473" y="891" width="21" height="21" fill="url(#g68)" shape-rendering="crispEdges" />
<rect x="472" y="891" width="1" height="21" fill="#484848" shape-rendering="crispEdges" />
<rect x="494" y="891" width="1" height="21" fill="#484848" shape-rendering="crispEdges" />
<path d="M189,900 h13 M195.5,893.5 v13" fill="none" stroke="#141414" stroke-width="1.2" />
<rect x="193.5" y="898" width="4" height="4" fill="none" stroke="#141414" stroke-width="1" />
<rect x="200.5" y="901.5" width="3.2" height="3.2" fill="#fff" stroke="#2a62b8" stroke-width="1" shape-rendering="crispEdges" />
<rect x="197.5" y="905.5" width="3.2" height="3.2" fill="#fff" stroke="#c05020" stroke-width="1" shape-rendering="crispEdges" />
<path d="M199.2,905.5 v-3 h1.5" fill="none" stroke="#c05020" stroke-width="0.9" />
<rect x="213.0" y="898.0" width="1.1" height="1.1" fill="#141414" shape-rendering="crispEdges" />
<rect x="213.0" y="900.6" width="1.1" height="1.1" fill="#141414" shape-rendering="crispEdges" />
<rect x="213.0" y="903.2" width="1.1" height="1.1" fill="#141414" shape-rendering="crispEdges" />
<rect x="215.6" y="898.0" width="1.1" height="1.1" fill="#141414" shape-rendering="crispEdges" />
<rect x="215.6" y="900.6" width="1.1" height="1.1" fill="#141414" shape-rendering="crispEdges" />
<rect x="215.6" y="903.2" width="1.1" height="1.1" fill="#141414" shape-rendering="crispEdges" />
<rect x="218.2" y="898.0" width="1.1" height="1.1" fill="#141414" shape-rendering="crispEdges" />
<rect x="218.2" y="900.6" width="1.1" height="1.1" fill="#141414" shape-rendering="crispEdges" />
<rect x="218.2" y="903.2" width="1.1" height="1.1" fill="#141414" shape-rendering="crispEdges" />
<rect x="220.8" y="898.0" width="1.1" height="1.1" fill="#141414" shape-rendering="crispEdges" />
<rect x="220.8" y="900.6" width="1.1" height="1.1" fill="#141414" shape-rendering="crispEdges" />
<rect x="220.8" y="903.2" width="1.1" height="1.1" fill="#141414" shape-rendering="crispEdges" />
<line x1="224.5" y1="897" x2="224.5" y2="905" stroke="#141414" stroke-width="1" shape-rendering="crispEdges" />
<path d="M235,896 h13 M235.00,896 v12 M235,899 h13 M238.25,896 v12 M235,902 h13 M241.50,896 v12 M235,905 h13 M244.75,896 v12 M235,908 h13 M248.00,896 v12" fill="none" stroke="#141414" stroke-width="1" />
<path d="M257,895 v13 h13" fill="none" stroke="#3a3a3a" stroke-width="1.3" />
<path d="M257,902 h6 v6" fill="none" stroke="#555" stroke-width="0.9" />
<circle cx="284.5" cy="903" r="4.2" fill="none" stroke="#141414" stroke-width="1.2" />
<path d="M284.5,903 l6,-6.5 M284.5,903 h7" fill="none" stroke="#141414" stroke-width="1.1" />
<rect x="302.5" y="898" width="11" height="11" fill="#fbfbfb" stroke="#141414" stroke-width="1.2" rx="1.5" />
<circle cx="302.5" cy="897" r="1.8" fill="#fff" stroke="#c05020" stroke-width="1" />
<path d="M324,899 l3,-3 h9 v9 l-3,3 h-9 z" fill="#f4f4f4" stroke="#333" stroke-width="1" />
<path d="M324,899 h9 v9 M333,899 l3,-3" fill="none" stroke="#777" stroke-width="0.8" />
<circle cx="324" cy="908" r="1.8" fill="#fff" stroke="#c05020" stroke-width="1" />
<path d="M345.5,907 h13 M345.5,907 l9.5,-9" fill="none" stroke="#141414" stroke-width="1.2" />
<path d="M367,895.5 v13 h13" fill="none" stroke="#333" stroke-width="1.1" />
<path d="M367,908.5 l8,-8" fill="none" stroke="#333" stroke-width="1" />
<path d="M378,894.5 l-3,4 h2 l-1,3.5 l4,-5 h-2 l1.5,-2.5 z" fill="#f7a81e" stroke="#a0640a" stroke-width="0.5" />
<path d="M367,894.5 l-1.6,2.6 h3.2 z M381,908.5 l-2.6,-1.6 v3.2 z" fill="#333" />
<path d="M389.5,902 h7 M393,898.5 v7" fill="none" stroke="#141414" stroke-width="1.4" />
<rect x="396.5" y="902.5" width="6" height="3.5" fill="none" stroke="#141414" stroke-width="1.2" />
<path d="M411,902 h13 M417.5,896 v12" fill="none" stroke="#141414" stroke-width="1.8" />
<rect x="433.5" y="895.5" width="13" height="13" fill="#fff" stroke="#2a62b8" stroke-width="1.2" />
<rect x="434.5" y="896.5" width="1.9" height="1.9" fill="#6fa0dc" shape-rendering="crispEdges" />
<rect x="434.5" y="900.3" width="1.9" height="1.9" fill="#6fa0dc" shape-rendering="crispEdges" />
<rect x="434.5" y="904.1" width="1.9" height="1.9" fill="#6fa0dc" shape-rendering="crispEdges" />
<rect x="436.4" y="898.4" width="1.9" height="1.9" fill="#6fa0dc" shape-rendering="crispEdges" />
<rect x="436.4" y="902.2" width="1.9" height="1.9" fill="#6fa0dc" shape-rendering="crispEdges" />
<rect x="436.4" y="906.0" width="1.9" height="1.9" fill="#6fa0dc" shape-rendering="crispEdges" />
<rect x="438.3" y="896.5" width="1.9" height="1.9" fill="#6fa0dc" shape-rendering="crispEdges" />
<rect x="438.3" y="900.3" width="1.9" height="1.9" fill="#6fa0dc" shape-rendering="crispEdges" />
<rect x="438.3" y="904.1" width="1.9" height="1.9" fill="#6fa0dc" shape-rendering="crispEdges" />
<rect x="440.2" y="898.4" width="1.9" height="1.9" fill="#6fa0dc" shape-rendering="crispEdges" />
<rect x="440.2" y="902.2" width="1.9" height="1.9" fill="#6fa0dc" shape-rendering="crispEdges" />
<rect x="440.2" y="906.0" width="1.9" height="1.9" fill="#6fa0dc" shape-rendering="crispEdges" />
<rect x="442.1" y="896.5" width="1.9" height="1.9" fill="#6fa0dc" shape-rendering="crispEdges" />
<rect x="442.1" y="900.3" width="1.9" height="1.9" fill="#6fa0dc" shape-rendering="crispEdges" />
<rect x="442.1" y="904.1" width="1.9" height="1.9" fill="#6fa0dc" shape-rendering="crispEdges" />
<rect x="444.0" y="898.4" width="1.9" height="1.9" fill="#6fa0dc" shape-rendering="crispEdges" />
<rect x="444.0" y="902.2" width="1.9" height="1.9" fill="#6fa0dc" shape-rendering="crispEdges" />
<rect x="444.0" y="906.0" width="1.9" height="1.9" fill="#6fa0dc" shape-rendering="crispEdges" />
<rect x="457.5" y="897.5" width="8" height="9.5" fill="#fbfbfb" stroke="#141414" stroke-width="1.2" />
<path d="M459.5,900.5 h4 M459.5,903 h4 M461.5,899 v6" fill="none" stroke="#141414" stroke-width="0.9" />
<path d="M476.5,897 h5 M479,894.5 v5" fill="none" stroke="#141414" stroke-width="1.1" />
<rect x="480.5" y="898.5" width="7" height="6.5" fill="#fbfbfb" stroke="#141414" stroke-width="1" shape-rendering="crispEdges" />
<rect x="484" y="901.5" width="7" height="7" fill="#6cc06c" stroke="#2a6a2a" stroke-width="1" />
<rect x="1491" y="891" width="30" height="21" fill="url(#g68)" shape-rendering="crispEdges" />
<rect x="1490" y="891" width="1" height="21" fill="#484848" shape-rendering="crispEdges" />
<rect x="1521" y="891" width="1" height="21" fill="#484848" shape-rendering="crispEdges" />
<text x="1494" y="906.5" font-size="11.8" fill="#000" >模型</text>
<rect x="1522.5" y="891" width="21" height="21" fill="url(#g69)" shape-rendering="crispEdges" />
<rect x="1521.5" y="891" width="1" height="21" fill="#484848" shape-rendering="crispEdges" />
<rect x="1543.5" y="891" width="1" height="21" fill="#484848" shape-rendering="crispEdges" />
<rect x="1544.5" y="891" width="21" height="21" fill="url(#g68)" shape-rendering="crispEdges" />
<rect x="1543.5" y="891" width="1" height="21" fill="#484848" shape-rendering="crispEdges" />
<rect x="1565.5" y="891" width="1" height="21" fill="#484848" shape-rendering="crispEdges" />
<rect x="1566.5" y="891" width="21" height="21" fill="url(#g68)" shape-rendering="crispEdges" />
<rect x="1565.5" y="891" width="1" height="21" fill="#484848" shape-rendering="crispEdges" />
<rect x="1587.5" y="891" width="1" height="21" fill="#484848" shape-rendering="crispEdges" />
<rect x="1588.5" y="891" width="21" height="21" fill="url(#g68)" shape-rendering="crispEdges" />
<rect x="1587.5" y="891" width="1" height="21" fill="#484848" shape-rendering="crispEdges" />
<rect x="1609.5" y="891" width="1" height="21" fill="#484848" shape-rendering="crispEdges" />
<rect x="1527" y="896" width="12" height="12" fill="#1e2a40" stroke="#0c0c0c" stroke-width="1" />
<path d="M1530,906 v-6 h7 M1533,906 v-3 h4" fill="none" stroke="#e8e8e8" stroke-width="1" />
<rect x="1549" y="896" width="12" height="12" fill="#f4f4f4" stroke="#141414" stroke-width="1" />
<rect x="1551" y="898" width="8" height="8" fill="none" stroke="#141414" stroke-width="0.9" />
<path d="M1551,898 l8,8 M1555,898 v8 M1551,902 h8" fill="none" stroke="#141414" stroke-width="0.7" />
<rect x="1571.5" y="895.5" width="10" height="10" fill="#f4f4f4" stroke="#141414" stroke-width="1" shape-rendering="crispEdges" />
<path d="M1574,904 v-6 l4,6 z" fill="#555" />
<line x1="1569.5" y1="908.5" x2="1583.5" y2="908.5" stroke="#141414" stroke-width="1.4" shape-rendering="crispEdges" />
<rect x="1591" y="896" width="5.5" height="6" fill="#f4f4f4" stroke="#141414" stroke-width="1" />
<rect x="1598" y="896" width="5.5" height="6" fill="#f4f4f4" stroke="#141414" stroke-width="1" />
<line x1="1591" y1="905.5" x2="1603.5" y2="905.5" stroke="#141414" stroke-width="1.6" shape-rendering="crispEdges" />
<rect x="1612" y="892" width="2" height="20" fill="#4a4a4a" shape-rendering="crispEdges" />
<rect x="1621.5" y="891" width="48" height="21" fill="url(#g68)" shape-rendering="crispEdges" />
<rect x="1620.5" y="891" width="1" height="21" fill="#484848" shape-rendering="crispEdges" />
<rect x="1669.5" y="891" width="1" height="21" fill="#484848" shape-rendering="crispEdges" />
<path d="M1631.5,895.5 l2,0 l1,7 l4.5,5 l-1.5,1.5 l-5,-4 l-5,4 l-1.5,-1.5 l4.5,-5 z" fill="#f4f4f4" stroke="#222" stroke-width="0.9" />
<text x="1642" y="907" font-size="12" fill="#0c0c0c" style="font-family:'Liberation Serif'" textLength="14.5" lengthAdjust="spacingAndGlyphs" >1:1</text>
<path d="M1659.0,898.0 h7 l-3.5,4 z" fill="#0c0c0c" />
<rect x="1672" y="891" width="21" height="21" fill="url(#g68)" shape-rendering="crispEdges" />
<rect x="1671" y="891" width="1" height="21" fill="#484848" shape-rendering="crispEdges" />
<rect x="1693" y="891" width="1" height="21" fill="#484848" shape-rendering="crispEdges" />
<rect x="1694" y="891" width="21" height="21" fill="url(#g68)" shape-rendering="crispEdges" />
<rect x="1693" y="891" width="1" height="21" fill="#484848" shape-rendering="crispEdges" />
<rect x="1715" y="891" width="1" height="21" fill="#484848" shape-rendering="crispEdges" />
<path d="M1681.5,895.5 l2,0 l1,7 l4.5,5 l-1.5,1.5 l-5,-4 l-5,4 l-1.5,-1.5 l4.5,-5 z" fill="#f4f4f4" stroke="#222" stroke-width="0.9" />
<circle cx="1687.5" cy="905" r="2.4" fill="#f8d040" stroke="#8a6a10" stroke-width="0.7" />
<path d="M1703.5,895.5 l2,0 l1,7 l4.5,5 l-1.5,1.5 l-5,-4 l-5,4 l-1.5,-1.5 l4.5,-5 z" fill="#9a9a9a" stroke="#666" stroke-width="0.9" />
<rect x="1717.5" y="892" width="2" height="20" fill="#4a4a4a" shape-rendering="crispEdges" />
<rect x="1722" y="891" width="21" height="21" fill="url(#g68)" shape-rendering="crispEdges" />
<rect x="1721" y="891" width="1" height="21" fill="#484848" shape-rendering="crispEdges" />
<rect x="1743" y="891" width="1" height="21" fill="#484848" shape-rendering="crispEdges" />
<rect x="1744" y="891" width="21" height="21" fill="url(#g68)" shape-rendering="crispEdges" />
<rect x="1743" y="891" width="1" height="21" fill="#484848" shape-rendering="crispEdges" />
<rect x="1765" y="891" width="1" height="21" fill="#484848" shape-rendering="crispEdges" />
<rect x="1766" y="891" width="21" height="21" fill="url(#g68)" shape-rendering="crispEdges" />
<rect x="1765" y="891" width="1" height="21" fill="#484848" shape-rendering="crispEdges" />
<rect x="1787" y="891" width="1" height="21" fill="#484848" shape-rendering="crispEdges" />
<circle cx="1732.5" cy="901.5" r="5" fill="#f4f4f4" stroke="#141414" stroke-width="1.1" />
<circle cx="1732.5" cy="901.5" r="2" fill="#888" stroke="#141414" stroke-width="0.8" />
<line x1="1737.5" y1="901.5" x2="1739.5" y2="901.5" stroke="#141414" stroke-width="1.8" />
<line x1="1736.04" y1="905.04" x2="1737.45" y2="906.45" stroke="#141414" stroke-width="1.8" />
<line x1="1732.5" y1="906.5" x2="1732.5" y2="908.5" stroke="#141414" stroke-width="1.8" />
<line x1="1728.96" y1="905.04" x2="1727.55" y2="906.45" stroke="#141414" stroke-width="1.8" />
<line x1="1727.5" y1="901.5" x2="1725.5" y2="901.5" stroke="#141414" stroke-width="1.8" />
<line x1="1728.96" y1="897.96" x2="1727.55" y2="896.55" stroke="#141414" stroke-width="1.8" />
<line x1="1732.5" y1="896.5" x2="1732.5" y2="894.5" stroke="#141414" stroke-width="1.8" />
<line x1="1736.04" y1="897.96" x2="1737.45" y2="896.55" stroke="#141414" stroke-width="1.8" />
<path d="M1741,909 v-3 l-3,3 z" fill="#111" />
<rect x="1748.5" y="901.5" width="9" height="7" fill="#f4f4f4" stroke="#141414" stroke-width="1.1" />
<path d="M1754.5,901.5 v-3 q0,-3 3,-3 q3,0 3,3" fill="none" stroke="#141414" stroke-width="1.4" />
<rect x="1752.3" y="903.5" width="1.2" height="3" fill="#141414" shape-rendering="crispEdges" />
<rect x="1770" y="896.5" width="11" height="6.5" fill="#c8ccd4" stroke="#141414" stroke-width="1" />
<path d="M1771,895 v1.5 M1774,895 v1.5 M1777,895 v1.5 M1780,895 v1.5" fill="none" stroke="#141414" stroke-width="0.9" />
<circle cx="1782" cy="904.5" r="2.8" fill="#bfe0f8" stroke="#2a6aa8" stroke-width="0.9" />
<line x1="1782" y1="907" x2="1782" y2="910" stroke="#2a6aa8" stroke-width="1.4" shape-rendering="crispEdges" />
<rect x="1789.5" y="892" width="2" height="20" fill="#4a4a4a" shape-rendering="crispEdges" />
<rect x="1795" y="893" width="67" height="18" fill="url(#g70)" stroke="#555" stroke-width="1" />
<rect x="1798.5" y="897" width="13" height="12" fill="#30b0d8" stroke="#1a6a8a" stroke-width="0.9" />
<path d="M1798.5,901 h13 M1798.5,905 h13 M1803,897 v12 M1807,897 v12" fill="none" stroke="#9ae0f4" stroke-width="0.7" />
<path d="M1801,900 l3.5,5 l6,-10" fill="none" stroke="#1a9a2a" stroke-width="2.6" />
<path d="M1821,896 h7 l3,3 v9 h-10 z" fill="#f4f4f4" stroke="#1f4a8a" stroke-width="1" />
<rect x="1820" y="901" width="10" height="5" fill="#f2d040" shape-rendering="crispEdges" />
<path d="M1826,905 l2.5,3 l5,-6" fill="none" stroke="#1a9a2a" stroke-width="2.2" />
<circle cx="1822.5" cy="897" r="1.5" fill="#fff" stroke="#1f4a8a" stroke-width="0.8" />
<path d="M1849,895 q4.5,0 4.5,4.5 q0,2.5 -2.2,4.2 v2 h-4.6 v-2 q-2.2,-1.7 -2.2,-4.2 q0,-4.5 4.5,-4.5 z" fill="#fbe9a0" stroke="#8a7a40" stroke-width="0.8" />
<rect x="1847.3" y="906" width="3.4" height="3.6" fill="#f4f4f4" stroke="#666" stroke-width="0.7" />
<rect x="1865" y="891" width="10" height="21" fill="url(#g68)" shape-rendering="crispEdges" />
<rect x="1864" y="891" width="1" height="21" fill="#484848" shape-rendering="crispEdges" />
<rect x="1875" y="891" width="1" height="21" fill="#484848" shape-rendering="crispEdges" />
<path d="M1867.5,900.8 h5 l-2.5,3.4 z" fill="#0c0c0c" />
<rect x="1876" y="891" width="21" height="21" fill="url(#g68)" shape-rendering="crispEdges" />
<rect x="1875" y="891" width="1" height="21" fill="#484848" shape-rendering="crispEdges" />
<rect x="1897" y="891" width="1" height="21" fill="#484848" shape-rendering="crispEdges" />
<rect x="1879.5" y="895.5" width="14" height="12.5" fill="#f2f2f4" stroke="#141414" stroke-width="1.1" />
<rect x="1879.5" y="895.5" width="14" height="2.6" fill="#555" shape-rendering="crispEdges" />
<rect x="1910.0" y="908.0" width="1.6" height="1.6" fill="#d8d8d8" shape-rendering="crispEdges" />
<rect x="1910.0" y="904.8" width="1.6" height="1.6" fill="#d8d8d8" shape-rendering="crispEdges" />
<rect x="1906.8" y="908.0" width="1.6" height="1.6" fill="#d8d8d8" shape-rendering="crispEdges" />
<rect x="1910.0" y="901.6" width="1.6" height="1.6" fill="#d8d8d8" shape-rendering="crispEdges" />
<rect x="1906.8" y="904.8" width="1.6" height="1.6" fill="#d8d8d8" shape-rendering="crispEdges" />
<rect x="1903.6" y="908.0" width="1.6" height="1.6" fill="#d8d8d8" shape-rendering="crispEdges" />
<rect x="0" y="916" width="1920" height="1" fill="#4a5a70" shape-rendering="crispEdges" />
<rect x="0" y="917" width="1920" height="39" fill="url(#g71)" shape-rendering="crispEdges" />
<rect x="0" y="917" width="1920" height="1" fill="#d6e6f6" shape-rendering="crispEdges" opacity="0.8"/>
<rect x="122.5" y="917.5" width="58" height="39" fill="url(#g72)" stroke="#5a6e8a" stroke-width="1" rx="2.5" opacity="0.9"/>
<rect x="123.5" y="918.5" width="56" height="38" fill="none" stroke="#f4faff" stroke-width="1" rx="2" opacity="0.7"/>
<rect x="246.5" y="917.5" width="58" height="39" fill="url(#g73)" stroke="#5a6e8a" stroke-width="1" rx="2.5" opacity="0.9"/>
<rect x="247.5" y="918.5" width="56" height="38" fill="none" stroke="#f4faff" stroke-width="1" rx="2" opacity="0.7"/>
<rect x="308.5" y="917.5" width="58" height="39" fill="url(#g74)" stroke="#5a6e8a" stroke-width="1" rx="2.5" opacity="0.9"/>
<rect x="309.5" y="918.5" width="56" height="38" fill="none" stroke="#f4faff" stroke-width="1" rx="2" opacity="0.7"/>
<circle cx="27" cy="938" r="18.3" fill="url(#orb)" stroke="#1a3a6a" stroke-width="1.2" />
<path d="M10,931 q17,-15 34,0 q-17,-7 -34,0 z" fill="#fff" opacity="0.35"/>
<path d="M18,932 q3.5,-2.5 7.5,-0.5 l-1.5,6 q-3.5,-1.8 -7.5,0.5 z" fill="#f0582a" />
<path d="M27,932 q4,2 8,-0.5 l-1.5,6 q-4,2.3 -8,0.5 z" fill="#8cc63a" />
<path d="M16,939.5 q3.5,-2.3 7.5,-0.5 l-1.5,6 q-3.5,-1.8 -7.5,0.5 z" fill="#2a9ae8" />
<path d="M25,940 q4,1.8 8,-0.5 l-1.5,6 q-4,2.3 -8,0.5 z" fill="#f8c82a" />
<ellipse cx="89" cy="936.5" rx="19.5" ry="6.5" fill="none" stroke="#e8b830" stroke-width="2.2" transform="rotate(-38 89 936.5)"/>
<text x="91.5" y="948" font-size="45" font-weight="bold" text-anchor="middle" fill="url(#g75)" stroke="#1a4a98" stroke-width="0.7">e</text>
<path d="M72.5,949 q-3,-9 9,-19" fill="none" stroke="#f0c840" stroke-width="2.4" />
<path d="M137,928 h9 l2,2 h17 v20 h-28 z" fill="#f4d98a" stroke="#b89a3a" stroke-width="0.8" />
<path d="M139,926 h24 v6 h-24 z" fill="#fbf6e0" stroke="#c8b060" stroke-width="0.6" />
<rect x="141" y="926.5" width="3" height="2" fill="#3aa03a" shape-rendering="crispEdges" />
<rect x="146" y="926.5" width="3" height="2" fill="#d04030" shape-rendering="crispEdges" />
<path d="M135,934 h30 l-1,16 h-28 z" fill="url(#g76)" stroke="#b89a3a" stroke-width="0.8" />
<path d="M141,950 v-6 q0,-2 2,-2 h14 q2,0 2,2 v6 h-3.5 v-3.5 h-11 v3.5 z" fill="#7cc0f0" stroke="#3a80c0" stroke-width="0.8" />
<rect x="200" y="924" width="20" height="25" fill="url(#g77)" stroke="#5a90c8" stroke-width="0.8" rx="1.5" />
<rect x="203" y="926" width="20" height="25" fill="url(#g78)" stroke="#5a90c8" stroke-width="0.8" rx="1.5" opacity="0.7"/>
<circle cx="210.5" cy="937" r="8.5" fill="#f08a1e" stroke="#c05a0a" stroke-width="1" />
<circle cx="210.5" cy="937" r="6.8" fill="none" stroke="#ffd8a0" stroke-width="1.2" />
<path d="M208,932.5 l7,4.5 l-7,4.5 z" fill="#fff" />
<rect x="263" y="930" width="22" height="20" fill="url(#g79)" shape-rendering="crispEdges" />
<path d="M264,921 h7 l9,20 l-6,2.5 l-2,-5 l-7,1.5 l-1,4.5 l-5,1 z" fill="url(#g80)" />
<path d="M266.5,934 l3.5,-1 l1,3 l-5,1.2 z" fill="#5c0a0a" />
<rect x="277.5" y="941.5" width="9" height="9" fill="#f4f4f4" stroke="#888" stroke-width="0.6" />
<text x="282" y="949.3" font-size="8.5" fill="#111" text-anchor="middle" font-weight="bold" >E</text>
<path d="M322,938 q0,-9 12,-11 q10,-1 12,5 q1,4 -5,5 q-4,1 -2,5 q1,4 -6,4 q-11,0 -11,-8 z" fill="#e8eef8" stroke="#7a90b8" stroke-width="1" />
<circle cx="327" cy="935" r="2" fill="#e04030" />
<circle cx="332" cy="931" r="2" fill="#f0a020" />
<circle cx="338" cy="930" r="2" fill="#40a040" />
<circle cx="327" cy="941" r="2" fill="#3a70d0" />
<path d="M334,950 l12,-20" fill="none" stroke="#c88a4a" stroke-width="2.6" />
<path d="M345,931 l2.5,-6 l2,1 l-1.5,6 z" fill="#e8b070" stroke="#8a5a2a" stroke-width="0.6" />
<text x="1700" y="939" font-size="12" fill="#f4f8fc" style="font-family:'Liberation Serif'" textLength="14.5" lengthAdjust="spacingAndGlyphs" >ZH</text>
<path d="M1730,941 h10 l-5,-5.5 z" fill="#f4f8fc" stroke="#5a7090" stroke-width="0.6" />
<path d="M1752.5,927 v18" fill="none" stroke="#f4f4f4" stroke-width="1.8" />
<path d="M1754,928 q4,-2 7,0 q3,2 6,0 v8 q-3,2 -6,0 q-3,-2 -7,0 z" fill="#f4f4f4" stroke="#5a6a80" stroke-width="0.7" />
<circle cx="1764" cy="939.5" r="4.2" fill="#e02a2a" stroke="#fff" stroke-width="0.8" />
<path d="M1762,937.5 l4,4 M1766,937.5 l-4,4" fill="none" stroke="#fff" stroke-width="1.2" />
<rect x="1781" y="931.5" width="12" height="9.5" fill="url(#g81)" stroke="#f4f6fa" stroke-width="1.6" />
<path d="M1783.5,944.5 h8 M1787.5,941 v3.5" fill="none" stroke="#f4f6fa" stroke-width="1.6" />
<path d="M1779,929 v14 h3 M1777,929 v5 M1781,929 v5 M1777,934 h4" fill="none" stroke="#f4f6fa" stroke-width="1.3" />
<path d="M1802,934 h3 l5,-4.5 v16 l-5,-4.5 h-3 z" fill="#f4f8fc" stroke="#5a6a80" stroke-width="0.7" />
<path d="M1812.5,933.5 q2.5,4 0,8 M1815,931.5 q4,6 0,12" fill="none" stroke="#f4f8fc" stroke-width="1.2" />
<text x="1836" y="932" font-size="12" fill="#f8fbff" >下午</text>
<text x="1863" y="932" font-size="12" fill="#f8fbff" textLength="30" lengthAdjust="spacingAndGlyphs" >11:09</text>
<text x="1832.5" y="950" font-size="12" fill="#f8fbff" textLength="64.5" lengthAdjust="spacingAndGlyphs" >2011/11/12</text>
<rect x="1906" y="917" width="14" height="39" fill="url(#g82)" stroke="#3a4a60" stroke-width="1" />
<rect x="1907.5" y="918.5" width="11" height="36" fill="none" stroke="#e8f0fa" stroke-width="1" shape-rendering="crispEdges" opacity="0.6"/>
</svg></body></html>
